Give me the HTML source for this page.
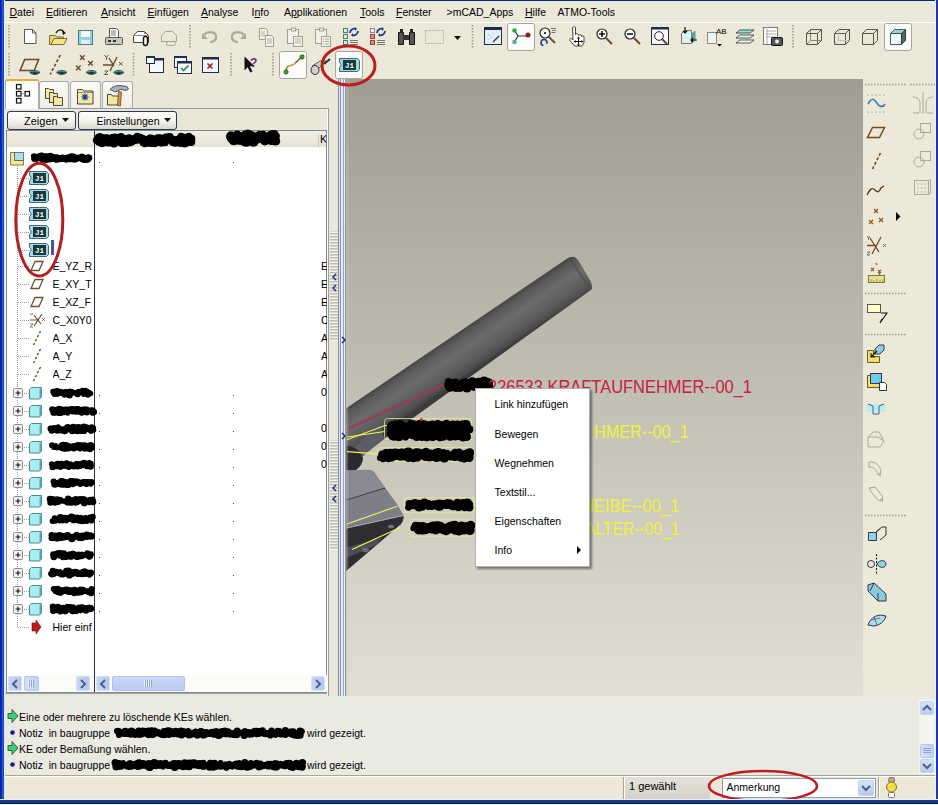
<!DOCTYPE html>
<html><head><meta charset="utf-8">
<style>
*{margin:0;padding:0;box-sizing:border-box}
html,body{width:938px;height:805px;overflow:hidden}
body{position:relative;background:#ECE9D8;font-family:"Liberation Sans",sans-serif;font-size:10.5px;color:#000}
.a{position:absolute}
svg{position:absolute;overflow:visible}
#frameL{left:0;top:0;width:5px;height:803px;background:linear-gradient(90deg,#0020B0 0 1px,#0A30C0 1px 2px,#3058D8 2px 3px,#1E48A8 3px 4px,#D8F0FF 4px 5px)}
#frameR{left:935px;top:0;width:3px;height:803px;background:linear-gradient(90deg,#E0F4FF 0 1px,#1E34A8 1px 2px,#2238B8 2px 3px)}
#frameB{left:0;top:799px;width:938px;height:6px;background:linear-gradient(#E4F0FC 0 1px,#1E3A86 1px 4px,#041448 4px 5px,#DCF8FF 5px 6px)}
#menubar{left:4px;top:0;width:931px;height:22px;background:#EDE9DA;border-top:1px solid #0E2A58;box-shadow:inset 0 1px 0 #DCEEFA}
.mi{position:absolute;top:5px;font-size:10.5px;white-space:nowrap}
#tb{left:4px;top:22px;width:931px;height:57px;background:#EBE8D8;border-top:1px solid #fff}
.grip{position:absolute;width:2px;border-left:1px dotted #A8A79B}
#view{left:346px;top:79px;width:517px;height:617px;background:linear-gradient(#A09E92,#E1E0D3);overflow:hidden}
#rtb{left:863px;top:80px;width:72px;height:616px;background:#ECE9D8}
#tabarea{left:4px;top:79px;width:342px;height:617px;background:#EAE7D8}
#tree{left:6px;top:130px;width:321px;height:563px;background:#fff;border:1px solid #7C8A98}
#msg{left:4px;top:696px;width:931px;height:80px;background:#EAE9E2}
#status{left:4px;top:775px;width:931px;height:24px;background:#EDE8D8;border-top:1px solid #A7A69B;box-shadow:inset 0 1px 0 #FFFFFF}
.btn{position:absolute;border:1px solid #2C3C54;border-radius:3px;background:linear-gradient(#fff,#F0F0EA 60%,#D8D8CF)}
.pressed{position:absolute;border:1px solid #9A9A90;border-radius:2px;background:#FBFBF8}
</style></head><body>
<!-- MENUBAR -->
<div class="a" id="menubar">
<span class="mi" style="left:5.5px"><u>D</u>atei</span>
<span class="mi" style="left:42px"><u>E</u>ditieren</span>
<span class="mi" style="left:97px"><u>A</u>nsicht</span>
<span class="mi" style="left:143.5px"><u>E</u>infügen</span>
<span class="mi" style="left:197px"><u>A</u>nalyse</span>
<span class="mi" style="left:247.5px">I<u>n</u>fo</span>
<span class="mi" style="left:280px">A<u>p</u>plikationen</span>
<span class="mi" style="left:356px"><u>T</u>ools</span>
<span class="mi" style="left:392px"><u>F</u>enster</span>
<span class="mi" style="left:442.5px">&gt;mCAD_Apps</span>
<span class="mi" style="left:521px"><u>H</u>ilfe</span>
<span class="mi" style="left:553.5px">ATMO-Tools</span>
</div>
<!-- TOOLBARS -->
<div class="a" id="tb"></div>
<svg class="a" style="left:0;top:0" width="938" height="80" viewBox="0 0 938 80">
<defs>
<linearGradient id="btnface" x1="0" y1="0" x2="0" y2="1"><stop offset="0" stop-color="#FFFFFF"/><stop offset="1" stop-color="#F2F2EC"/></linearGradient>
</defs>
<!-- row separators / grips -->

<g id="grips" stroke="#9C9A90" stroke-width="1.6" stroke-dasharray="1.6 1.4" fill="none">
<line x1="9" y1="25" x2="9" y2="49"/>
<line x1="190" y1="25" x2="190" y2="49"/>
<line x1="472.5" y1="25" x2="472.5" y2="49"/>
<line x1="793" y1="25" x2="793" y2="49"/>
<line x1="9" y1="53" x2="9" y2="77"/>
<line x1="133.5" y1="53" x2="133.5" y2="77"/>
<line x1="231" y1="53" x2="231" y2="77"/>
<line x1="273" y1="53" x2="273" y2="77"/>
</g>
<!-- pressed buttons -->
<rect x="507.5" y="23.5" width="27" height="27" rx="2" fill="#FBFBF9" stroke="#A5A59C"/>
<rect x="884.5" y="23.5" width="27" height="27" rx="2" fill="#FBFBF9" stroke="#A5A59C"/>
<rect x="279.5" y="51.5" width="27" height="27" rx="2" fill="#FBFBF9" stroke="#A5A59C"/>
<rect x="335.5" y="51.5" width="27" height="27" rx="2" fill="#FBFBF9" stroke="#A5A59C"/>
<!-- ROW 1 -->
<!-- new doc -->
<path d="M24.5 29.5h8l3.5 3.5v10.5h-11.5z" fill="#FCFCFC" stroke="#5A5A50"/><path d="M32.5 29.5v3.5h3.5" fill="none" stroke="#5A5A50"/>
<!-- open -->
<path d="M49.5 35.5h6l1 1.5h7v7.5h-14z" fill="#E8D77A" stroke="#7A6A30"/><path d="M51 44.5l3-6h13l-3 6z" fill="#F2E486" stroke="#7A6A30"/>
<path d="M56 33c2-4 6-4 8-1" fill="none" stroke="#111" stroke-width="1.3"/><path d="M62 30.5l4 2.5-3 2z" fill="#111"/>
<!-- save -->
<rect x="78.5" y="30.5" width="14" height="14" fill="#8FD4DC" stroke="#4A7A88"/><rect x="81" y="31" width="9" height="6" fill="#F4F8F8"/><rect x="81" y="40" width="9" height="4" fill="#E0F0F2"/>
<!-- printer -->
<path d="M109.5 28.5h7l2 2v7h-9z" fill="#FFF" stroke="#555"/><path d="M111 31h5M111 33h5M111 35h5" stroke="#777"/>
<rect x="105.5" y="37.5" width="17" height="7" rx="1" fill="#C8C8C0" stroke="#555"/><rect x="108" y="40" width="3" height="2" fill="#333"/><rect x="113" y="40" width="3" height="2" fill="#333"/>
<!-- mail clip -->
<path d="M133.5 35.5l4-4h7l4 4v7h-15z" fill="#FDFDFD" stroke="#444"/><path d="M133.5 35.5h15" stroke="#888"/>
<rect x="143.5" y="36.5" width="4" height="9" rx="2" fill="#FFF" stroke="#111" stroke-width="1.4"/><circle cx="145" cy="33" r="0.9" fill="#B03030"/>
<!-- mail grey -->
<path d="M161.5 35.5l4-4h7l4 4v6h-15z" fill="none" stroke="#A5A59D"/><rect x="166.5" y="41.5" width="9" height="4" rx="2" fill="none" stroke="#A5A59D"/>
<!-- undo redo grey -->
<path d="M204 35c3-4 11-4 12 1s-4 6-6 6" fill="none" stroke="#ABA9A0" stroke-width="2.3"/><path d="M202 33v6h6z" fill="#ABA9A0"/>
<path d="M244 35c-3-4-11-4-12 1s4 6 6 6" fill="none" stroke="#ABA9A0" stroke-width="2.3"/><path d="M246 33v6h-6z" fill="#ABA9A0"/>
<!-- copy -->
<g fill="#F2F1EA" stroke="#A09F95"><path d="M259.5 28.5h6l2 2v9h-8z"/><path d="M265.5 35.5h6l2 2v9h-8z"/></g>
<path d="M261 32h4M261 34h4M261 36h4M267 39h5M267 41h5M267 43h5" stroke="#B4B3A8"/>
<!-- paste -->
<g fill="#F2F1EA" stroke="#A09F95"><rect x="287.5" y="29.5" width="11" height="14"/><rect x="291.5" y="28" width="4" height="3"/><rect x="293.5" y="36.5" width="9" height="10"/></g>
<path d="M295 39h6M295 41h6M295 43h6" stroke="#B4B3A8"/>
<g fill="#F2F1EA" stroke="#A09F95"><rect x="315.5" y="29.5" width="11" height="14"/><rect x="319.5" y="28" width="4" height="3"/><rect x="321.5" y="36.5" width="9" height="10"/></g>
<path d="M323 39h1M323 41.5h1M323 44h1M325 39h4M325 41.5h4M325 44h4" stroke="#A8A79C"/>
<!-- select tools -->
<g><rect x="343.5" y="28.5" width="4" height="4" fill="#D8F0E8" stroke="#4A7A6A"/><rect x="343.5" y="34.5" width="4" height="4" fill="#D8F0E8" stroke="#4A7A6A"/><rect x="343.5" y="40.5" width="4" height="4" fill="#D8F0E8" stroke="#4A7A6A"/>
<path d="M350 33c0-3 3-5 6-4M358 31c0 3-3 5-6 4" fill="none" stroke="#1A3C90" stroke-width="1.8"/><path d="M355 27l2 2-2 2zM353 33l-2 2 2 2z" fill="#1A3C90"/><path d="M350 40.5h8M350 42.5h8M350 44.5h8" stroke="#777"/></g>
<g><rect x="370.5" y="28.5" width="4" height="4" fill="#EEE" stroke="#888"/><rect x="370.5" y="34.5" width="4" height="4" fill="#D88" stroke="#944"/><rect x="370.5" y="40.5" width="4" height="4" fill="#D88" stroke="#944"/>
<path d="M377 33c0-3 3-5 6-4M385 31c0 3-3 5-6 4" fill="none" stroke="#1A3C90" stroke-width="1.8"/><path d="M382 27l2 2-2 2zM380 33l-2 2 2 2z" fill="#1A3C90"/><path d="M377 40.5h8M377 42.5h8M377 44.5h8" stroke="#777"/></g>
<!-- binoculars -->
<path d="M398.5 32.5h5v12h-5zM409.5 32.5h5v12h-5z" fill="#555" stroke="#111"/><rect x="403" y="35" width="6" height="5" fill="#333"/><rect x="400" y="29" width="3" height="4" fill="#222"/><rect x="410" y="29" width="3" height="4" fill="#222"/>
<!-- dashed rect -->
<rect x="425.5" y="30.5" width="18" height="13" fill="none" stroke="#B5B4AA" stroke-dasharray="2 1"/>
<path d="M454 36h7l-3.5 4z" fill="#111"/>
<!-- repaint -->
<rect x="484.5" y="27.5" width="17" height="17" fill="#E4EEF8" stroke="#1E2C50"/><rect x="484" y="27" width="18" height="3" fill="#1E2C50"/><path d="M493 42l6-6" stroke="#333" stroke-width="1.2"/><g fill="#9AB"><circle cx="489" cy="35" r=".6"/><circle cx="491" cy="37" r=".6"/><circle cx="488" cy="39" r=".6"/></g>
<!-- spin -->
<path d="M515 31l3 5v0l-3 5M518 36h10" fill="none" stroke="#333" stroke-width="1.2"/><circle cx="514.5" cy="30.5" r="2.3" fill="#3CA050"/><circle cx="514.5" cy="42" r="2.3" fill="#4CB0A0"/><circle cx="528" cy="35" r="2.5" fill="#8A2020"/>
<!-- orient -->
<circle cx="545" cy="33" r="5" fill="#FFF" stroke="#222" stroke-width="1.2"/><circle cx="545" cy="33" r="1.1" fill="#111"/><path d="M549 37l6 6" stroke="#7A4A30" stroke-width="2"/><path d="M543.5 45.5a3 3 0 1 1 3.5 -3" fill="none" stroke="#1A3C90" stroke-width="1.5"/><path d="M547 41l1 2.5 -2.5 0z" fill="#1A3C90"/><path d="M551 28.5h5M552 30.5h4M551.5 32.5h4" stroke="#5A6A90" stroke-width=".9"/>
<!-- pan hand -->
<path d="M572.5 27.5c1-1 2.5-1 3 0v7c.5-1 2.5-1 3 0v1c.5-1 2.5-1 3 0v1c.5-1 2.5-.8 2.5.5v5.5l-2 3.5h-7.5l-4.5-5.5c-1-1.5 0-2.5 1.5-1.8l1.5 1.3z" fill="#FFF" stroke="#333" stroke-width=".9"/>
<path d="M578.5 37.5v8M574.5 41.5h8" stroke="#111" stroke-width="1"/><path d="M578.5 36.5l-1.5 2h3zM578.5 46.5l-1.5-2h3zM573.5 41.5l2-1.5v3zM583.5 41.5l-2-1.5v3z" fill="#111"/>
<!-- zoom in/out -->
<circle cx="602" cy="34" r="5" fill="#FFF" stroke="#222" stroke-width="1.2"/><path d="M599 34h6M602 31v6" stroke="#111" stroke-width="1.6"/><path d="M606 38l6 6" stroke="#6A4A30" stroke-width="2"/>
<circle cx="630" cy="34" r="5" fill="#FFF" stroke="#222" stroke-width="1.2"/><path d="M627 34h6" stroke="#111" stroke-width="1.6"/><path d="M634 38l6 6" stroke="#6A4A30" stroke-width="2"/>
<!-- zoom fit -->
<rect x="651.5" y="27.5" width="17" height="17" fill="#F4F8FC" stroke="#1E2C50"/><rect x="651" y="27" width="18" height="2.5" fill="#1E2C50"/><circle cx="659" cy="36" r="4.3" fill="#FFF" stroke="#222"/><path d="M662 39l5 5" stroke="#6A4A30" stroke-width="2"/>
<!-- view normal -->
<path d="M681.5 33.5l3-3h7v13h-10z" fill="#DDF0EE" stroke="#777"/><path d="M691.5 33.5l4-3v10l-4 3z" fill="#5AA0A0"/><path d="M685 27v6M683 31l2 2 2-2" stroke="#111" stroke-width="1.2" fill="none"/><path d="M697 40h-6M693 38l-2 2 2 2" stroke="#111" stroke-width="1.2" fill="none"/>
<!-- AB -->
<path d="M707.5 32.5h9v11h-9z" fill="#EEF6F4" stroke="#888"/><text x="716" y="34" font-size="8" font-family="Liberation Sans">AB</text><path d="M717 44h5l-2.5 2.5z" fill="#111"/>
<!-- layers -->
<path d="M736 33l4-3h14l-4 3z" fill="#9AE0E0" stroke="#333" stroke-width=".8"/><path d="M736 38l4-3h14l-4 3z" fill="#DDF4F4" stroke="#333" stroke-width=".8"/><path d="M736 43l4-3h14l-4 3z" fill="#F4FAFA" stroke="#333" stroke-width=".8"/>
<!-- table camera -->
<rect x="763.5" y="27.5" width="14" height="17" fill="#FFF" stroke="#777"/><path d="M766 31h10M766 34h10M766 37h10M767 27v17" stroke="#AAA"/><rect x="771.5" y="37.5" width="11" height="8" rx="1" fill="#555" stroke="#111"/><circle cx="777" cy="41.5" r="2" fill="#EEE"/>
<!-- wireframe / hidden / no hidden -->
<g fill="none" stroke="#444" stroke-width=".9"><path d="M806.5 33.5h11v11h-11zM806.5 33.5l4-4h11l-4 4M821.5 29.5v11l-4 4"/><path d="M810.5 29.5v11h11M810.5 40.5l-4 4" stroke="#777"/></g>
<g fill="none" stroke="#444" stroke-width=".9"><path d="M834.5 33.5h11v11h-11zM834.5 33.5l4-4h11l-4 4M849.5 29.5v11l-4 4"/><path d="M838.5 29.5v11h11M838.5 40.5l-4 4" stroke="#BBB"/></g>
<g fill="none" stroke="#444" stroke-width=".9"><path d="M862.5 33.5h11v11h-11zM862.5 33.5l4-4h11l-4 4M877.5 29.5v11l-4 4"/></g>
<path d="M890.5 33.5h11v11h-11z" fill="#F0FAFA" stroke="#444" stroke-width=".9"/><path d="M890.5 33.5l4-4h11l-4 4z" fill="#8ADADC" stroke="#444" stroke-width=".9"/><path d="M905.5 29.5v11l-4 4v-11z" fill="#4A6A6A" stroke="#333" stroke-width=".9"/>
<!-- ROW 2 -->
<!-- plane eye -->
<path d="M24.6 59.6h14.1l-4.5 10.9H20.1z" fill="none" stroke="#6A4A28" stroke-width="1.5"/><path d="M29.299999999999997 72.5c2-3.2 9-3.2 11 0c-2 3.2-9 3.2-11 0z" fill="#2D5858"/><circle cx="34.8" cy="72.5" r="1.8" fill="#1A3A3A"/><path d="M30.799999999999997 71.5h8" stroke="#7FB0B0" stroke-width=".6"/><path d="M60.4 55l-10.2 19.3" stroke="#6A4A28" stroke-width="1.6" stroke-dasharray="3 2"/><path d="M56.2 72.5c2-3.2 9-3.2 11 0c-2 3.2-9 3.2-11 0z" fill="#2D5858"/><circle cx="61.7" cy="72.5" r="1.8" fill="#1A3A3A"/><path d="M57.7 71.5h8" stroke="#7FB0B0" stroke-width=".6"/><g stroke="#6A4A28" stroke-width="1.4"><path d="M80 55.3l4.6 4.6M84.6 55.3l-4.6 4.6M88.2 61l4.6 4.6M92.8 61l-4.6 4.6M76 65.6l4.6 4.6M80.6 65.6l-4.6 4.6"/></g><path d="M85.9 72.5c2-3.2 9-3.2 11 0c-2 3.2-9 3.2-11 0z" fill="#2D5858"/><circle cx="91.4" cy="72.5" r="1.8" fill="#1A3A3A"/><path d="M87.4 71.5h8" stroke="#7FB0B0" stroke-width=".6"/><g stroke="#6A4A28" stroke-width="1.4" fill="none"><path d="M103 65h10M117 57l-7 14M109 58l5 8"/></g><g stroke="#555" stroke-width="1" fill="none"><path d="M104.5 55l2 2.5 2-2.5M106.5 57.5v2.5M104.5 71h3.5l-3.5 3.5h3.5M119 62l3.5 3.5M122.5 62l-3.5 3.5"/></g><path d="M113.3 72.5c2-3.2 9-3.2 11 0c-2 3.2-9 3.2-11 0z" fill="#2D5858"/><circle cx="118.8" cy="72.5" r="1.8" fill="#1A3A3A"/><path d="M114.8 71.5h8" stroke="#7FB0B0" stroke-width=".6"/>
<!-- windows -->
<rect x="149.5" y="58.5" width="14" height="14" fill="#F4F8FC" stroke="#1E2C50"/><rect x="149" y="58" width="15" height="2.5" fill="#1E2C50"/>
<rect x="146.5" y="56.5" width="8" height="7" fill="#F4F8FC" stroke="#1E2C50"/><rect x="146" y="56" width="9" height="2" fill="#1E2C50"/>
<rect x="174.5" y="56.5" width="12" height="11" fill="#F4F8FC" stroke="#1E2C50"/><rect x="174" y="56" width="13" height="2" fill="#1E2C50"/>
<rect x="177.5" y="61.5" width="14" height="12" fill="#F4F8FC" stroke="#1E2C50"/><rect x="177" y="61" width="15" height="2.5" fill="#1E2C50"/><path d="M181 68l2.5 2.5 5-5" fill="none" stroke="#2A8A3A" stroke-width="1.6"/>
<rect x="202.5" y="57.5" width="16" height="15" fill="#F4F8FC" stroke="#1E2C50"/><rect x="202" y="57" width="17" height="2.5" fill="#1E2C50"/><path d="M207.5 63.5l5 5M212.5 63.5l-5 5" stroke="#A01818" stroke-width="1.6"/>
<!-- question arrow -->
<path d="M244.5 56.5v14l3.2-3.2 2.6 5.2 2.2-1.1-2.6-5.1h4.6z" fill="#111"/><text x="250" y="67" font-size="12" font-weight="bold" fill="#7A2A78" font-family="Liberation Sans">?</text>
<!-- curve -->
<path d="M286 72c0-8 4-5 8-8s6-6 10-9" fill="none" stroke="#6A5A20" stroke-width="1.2"/><path d="M287 71c1-7 5-5 8-8" fill="none" stroke="#E8D860" stroke-width="1"/><circle cx="286" cy="72" r="2.2" fill="#3A9A3A" stroke="#1A4A1A" stroke-width=".6"/><circle cx="302" cy="57" r="2.2" fill="#3A9A3A" stroke="#1A4A1A" stroke-width=".6"/>
<!-- cylinder tool -->
<path d="M312 66l8-5h6l-8 8z" fill="#CCC" stroke="#444" stroke-width=".8"/><ellipse cx="315" cy="70" rx="4" ry="4.5" fill="#CFCFCF" stroke="#333"/><path d="M324 64l6-5" stroke="#333" stroke-width="2"/>
<!-- J1 -->
<path d="M339.5 58.5h18l2 2v9l-2 2h-18v-4l1.5-1.5v-2l-1.5-1.5z" fill="#9ED6DA" stroke="#3A6A70"/><rect x="343" y="60" width="13" height="10" fill="#17393E"/><text x="349.5" y="68.2" text-anchor="middle" font-size="7.5" font-weight="bold" fill="#FFF" font-family="Liberation Mono">J1</text>
</svg>

<!-- LEFT PANEL -->
<div class="a" id="tabarea"></div>
<div class="a" style="left:5px;top:108px;width:324px;height:586px;border:1px solid #A0A4A8;border-top-color:#919B9C;border-left-color:#E8F4F8"></div>
<div class="a" style="left:5px;top:108px;width:323px;height:1px;background:#919B9C"></div>
<div class="a" style="left:39px;top:81px;width:30px;height:27px;border:1px solid #A7ABA8;border-bottom:none;border-radius:3px 3px 0 0;background:linear-gradient(#FAFAF8,#EEEDE6)"></div>
<div class="a" style="left:70px;top:81px;width:31px;height:27px;border:1px solid #A7ABA8;border-bottom:none;border-radius:3px 3px 0 0;background:linear-gradient(#FAFAF8,#EEEDE6)"></div>
<div class="a" style="left:102px;top:81px;width:31px;height:27px;border:1px solid #A7ABA8;border-bottom:none;border-radius:3px 3px 0 0;background:linear-gradient(#FAFAF8,#EEEDE6)"></div>
<div class="a" style="left:5px;top:79px;width:34px;height:30px;border:1px solid #A7ABA8;border-bottom:none;border-radius:3px 3px 0 0;background:#FCFCFE"></div>
<div class="a" style="left:6px;top:79px;width:32px;height:2px;background:#EBA83A;border-radius:2px 2px 0 0"></div>
<svg class="a" style="left:0;top:0" width="340" height="132" viewBox="0 0 340 132">
<!-- tab1 tree -->
<g fill="#fff" stroke="#111" stroke-width="1.2"><rect x="16.5" y="84.5" width="4.5" height="4.5"/><rect x="16.5" y="91.5" width="4.5" height="4.5"/><rect x="16.5" y="98.5" width="4.5" height="4.5"/><rect x="25" y="91.5" width="4.5" height="4.5"/></g>
<path d="M18.7 89v2.5M18.7 96v2.5M21 93.7h4" stroke="#777" stroke-width=".8"/>
<!-- tab2 folders -->
<g fill="#F2E9A0" stroke="#333" stroke-width=".9"><path d="M45.5 88.5h3l1 1h4v9h-8z"/><path d="M49.5 92.5h3l1 1h4v9h-8z"/><path d="M53.5 96.5h3l1 1h5v8h-9z"/></g>
<!-- tab3 folder star -->
<path d="M77.5 89.5h5l1.5 1.5h9v13h-15.5z" fill="#F2E9A0" stroke="#333" stroke-width=".9"/><path d="M77.5 92.5h15.5" stroke="#555" stroke-width=".6"/>
<g stroke="#1A3CA0" stroke-width="1.1"><path d="M85 93.5v7M81.5 97h7M82.5 94.5l5 5M87.5 94.5l-5 5"/></g><circle cx="85" cy="97" r="1.3" fill="#1A3CA0"/>
<!-- tab4 folder hammer -->
<path d="M107.5 94.5h4l1 1.5h6v9h-11z" fill="#F2E9A0" stroke="#333" stroke-width=".9"/>
<path d="M118.5 91.5l3 0.5-1 14-3-0.5z" fill="#D8904A" stroke="#6A3A10" stroke-width=".7"/>
<path d="M110 89.5c2-3 6-4 10-4l7 1 1.5 2.5-2 1.5-6-1-5 2.5z" fill="#A8B4B8" stroke="#333" stroke-width=".8"/>
</svg>
<!-- buttons -->
<div class="btn" style="left:7px;top:111px;width:69px;height:19px"></div>
<div class="btn" style="left:78px;top:111px;width:99px;height:19px"></div>
<span class="a" style="left:24px;top:114.5px;font-size:11px">Zeigen</span>
<span class="a" style="left:96.5px;top:114.5px;font-size:10.5px">Einstellungen</span>
<svg class="a" style="left:0;top:0" width="200" height="132"><path d="M62 118h7l-3.5 4z" fill="#111"/><path d="M164 118h7l-3.5 4z" fill="#111"/></svg>


<div class="a" id="tree"></div>
<div id="treecontent"><div class="a" style="left:7px;top:131px;width:319px;height:16px;background:linear-gradient(#F0EEE4,#E8E5D6);border-bottom:1px solid #E2E0D4"></div>
<div class="a" style="left:94px;top:131px;width:1px;height:561px;background:#203040"></div>
<div class="a" style="left:318px;top:134px;width:1px;height:13px;background:#C8C6BA"></div>
<span class="a" style="left:320px;top:133px;font-size:11px;width:6px;overflow:hidden">K</span>
<svg class="a" style="left:0;top:0" width="340" height="700" viewBox="0 0 340 700"><g fill="#000"><circle cx="109.0" cy="142.1" r="4.3"/><circle cx="120.7" cy="140.0" r="3.7"/><circle cx="159.2" cy="141.8" r="3.0"/><circle cx="98.7" cy="142.1" r="3.6"/><circle cx="169.9" cy="136.9" r="3.7"/><circle cx="166.0" cy="138.3" r="4.7"/><circle cx="183.4" cy="137.1" r="2.8"/><circle cx="148.5" cy="142.7" r="3.5"/><circle cx="117.0" cy="139.5" r="2.9"/><circle cx="117.5" cy="139.6" r="3.8"/><circle cx="118.6" cy="138.3" r="3.2"/><circle cx="140.6" cy="138.7" r="2.8"/><circle cx="177.2" cy="140.3" r="4.1"/><circle cx="114.0" cy="143.0" r="4.5"/><circle cx="107.7" cy="139.0" r="4.2"/><circle cx="165.0" cy="142.7" r="3.6"/><circle cx="176.5" cy="141.0" r="3.4"/><circle cx="153.0" cy="142.4" r="4.5"/><circle cx="145.0" cy="140.5" r="2.9"/><circle cx="119.5" cy="141.8" r="3.6"/><circle cx="112.8" cy="140.3" r="4.2"/><circle cx="161.4" cy="139.2" r="3.7"/><circle cx="145.3" cy="141.7" r="3.8"/><circle cx="134.1" cy="139.9" r="2.9"/><circle cx="100.2" cy="141.3" r="4.7"/><circle cx="153.5" cy="139.3" r="3.1"/><circle cx="144.7" cy="143.0" r="4.3"/><circle cx="148.3" cy="142.2" r="3.3"/><circle cx="145.8" cy="142.8" r="3.9"/><circle cx="140.5" cy="138.6" r="3.9"/><circle cx="188.8" cy="137.0" r="4.3"/><circle cx="175.6" cy="142.4" r="4.3"/><circle cx="174.5" cy="140.1" r="3.9"/><circle cx="137.3" cy="137.3" r="4.5"/><circle cx="151.3" cy="138.2" r="3.8"/><circle cx="143.0" cy="139.1" r="3.5"/><circle cx="148.2" cy="140.8" r="4.0"/><circle cx="140.4" cy="137.1" r="3.3"/><circle cx="113.2" cy="140.5" r="4.5"/><circle cx="173.4" cy="141.8" r="4.4"/><circle cx="120.8" cy="142.1" r="4.1"/><circle cx="104.1" cy="137.0" r="2.8"/><circle cx="169.3" cy="138.5" r="3.0"/><circle cx="156.6" cy="139.0" r="2.9"/><circle cx="111.5" cy="140.2" r="3.1"/><circle cx="122.5" cy="141.3" r="3.7"/><circle cx="127.2" cy="139.8" r="2.8"/><circle cx="133.5" cy="139.5" r="3.2"/><circle cx="106.5" cy="142.5" r="3.8"/><circle cx="116.3" cy="140.7" r="4.4"/><circle cx="98.0" cy="137.0" r="3.1"/><circle cx="165.7" cy="137.9" r="4.2"/><circle cx="161.8" cy="140.3" r="3.2"/><circle cx="190.6" cy="141.8" r="3.8"/><circle cx="117.6" cy="140.9" r="3.6"/><circle cx="151.9" cy="138.9" r="4.0"/><circle cx="101.7" cy="138.8" r="4.7"/><circle cx="180.9" cy="138.8" r="4.5"/><circle cx="126.1" cy="142.7" r="4.3"/><circle cx="136.4" cy="138.5" r="2.8"/><circle cx="181.2" cy="137.2" r="4.4"/><circle cx="189.3" cy="140.4" r="3.1"/><circle cx="180.2" cy="142.9" r="4.2"/><circle cx="145.4" cy="139.2" r="3.5"/><circle cx="116.0" cy="141.1" r="3.6"/><circle cx="114.8" cy="137.6" r="4.1"/><circle cx="124.7" cy="140.0" r="3.4"/><circle cx="180.5" cy="142.5" r="2.8"/><circle cx="115.5" cy="138.9" r="4.7"/><circle cx="171.9" cy="139.0" r="3.2"/><circle cx="161.4" cy="142.1" r="4.6"/><circle cx="129.4" cy="142.4" r="4.1"/><circle cx="143.0" cy="143.0" r="3.3"/><circle cx="166.4" cy="137.4" r="3.1"/><circle cx="184.4" cy="138.2" r="4.3"/><circle cx="154.2" cy="142.1" r="3.5"/><circle cx="129.0" cy="138.7" r="4.5"/><circle cx="154.6" cy="142.8" r="4.5"/><circle cx="109.1" cy="140.3" r="3.0"/><circle cx="99.8" cy="137.4" r="4.5"/><circle cx="172.4" cy="142.0" r="3.5"/><circle cx="155.7" cy="141.7" r="3.5"/><circle cx="151.4" cy="138.3" r="3.0"/><circle cx="121.9" cy="142.4" r="3.9"/><circle cx="185.7" cy="139.7" r="3.3"/><circle cx="172.3" cy="142.0" r="2.8"/><circle cx="161.0" cy="137.5" r="3.0"/><circle cx="181.9" cy="137.2" r="3.3"/><circle cx="191.9" cy="139.5" r="3.0"/><circle cx="112.2" cy="138.4" r="4.3"/><circle cx="106.0" cy="142.5" r="3.5"/><circle cx="190.1" cy="142.5" r="3.4"/><circle cx="120.6" cy="139.9" r="3.0"/><circle cx="159.2" cy="137.2" r="2.8"/><circle cx="191.3" cy="138.7" r="4.0"/><circle cx="139.6" cy="138.8" r="2.9"/><circle cx="184.6" cy="142.9" r="4.7"/><circle cx="106.8" cy="138.2" r="4.0"/><circle cx="191.1" cy="140.3" r="4.1"/><circle cx="160.2" cy="138.5" r="3.9"/><circle cx="125.8" cy="138.4" r="3.0"/><circle cx="123.2" cy="143.0" r="3.7"/><circle cx="159.2" cy="140.9" r="4.6"/><circle cx="133.9" cy="138.8" r="3.4"/><circle cx="126.7" cy="142.1" r="4.6"/><circle cx="125.4" cy="139.0" r="3.9"/><circle cx="152.2" cy="140.6" r="3.3"/><circle cx="98.0" cy="138.4" r="2.9"/><circle cx="149.5" cy="137.4" r="2.9"/><circle cx="157.6" cy="138.7" r="4.4"/><circle cx="143.8" cy="142.2" r="3.1"/><circle cx="144.6" cy="141.8" r="3.0"/><circle cx="188.1" cy="138.0" r="4.3"/><circle cx="191.5" cy="142.0" r="3.4"/><circle cx="106.4" cy="140.1" r="4.6"/><circle cx="124.5" cy="142.4" r="3.1"/><circle cx="184.3" cy="137.1" r="3.4"/><circle cx="183.6" cy="141.9" r="4.6"/><circle cx="177.5" cy="141.5" r="4.2"/><circle cx="113.3" cy="139.6" r="3.1"/><circle cx="165.3" cy="141.0" r="3.3"/><circle cx="102.2" cy="142.9" r="4.4"/><circle cx="149.3" cy="140.3" r="4.5"/><circle cx="140.0" cy="139.4" r="3.5"/><circle cx="121.0" cy="137.1" r="4.1"/><circle cx="136.4" cy="140.4" r="2.9"/><circle cx="130.4" cy="137.8" r="3.0"/><circle cx="121.1" cy="142.0" r="3.6"/><circle cx="134.9" cy="140.7" r="3.3"/><circle cx="96.7" cy="140.2" r="3.8"/><circle cx="158.9" cy="139.6" r="4.1"/><circle cx="166.9" cy="138.4" r="3.8"/><circle cx="142.4" cy="138.3" r="3.6"/><circle cx="150.4" cy="142.5" r="4.6"/><circle cx="122.7" cy="140.9" r="2.9"/><circle cx="102.9" cy="140.1" r="4.5"/><circle cx="111.5" cy="141.6" r="4.5"/><circle cx="126.2" cy="141.2" r="4.5"/><circle cx="132.0" cy="141.2" r="4.2"/><circle cx="153.7" cy="142.2" r="4.6"/><circle cx="189.1" cy="140.4" r="3.1"/><circle cx="120.3" cy="138.3" r="3.9"/><circle cx="169.5" cy="137.2" r="4.1"/><circle cx="165.6" cy="139.1" r="3.8"/><circle cx="112.0" cy="141.4" r="2.9"/><circle cx="191.2" cy="141.9" r="4.0"/><circle cx="122.0" cy="142.5" r="4.7"/><circle cx="109.5" cy="141.7" r="4.5"/><circle cx="160.0" cy="141.2" r="3.7"/><circle cx="185.7" cy="142.9" r="3.5"/><circle cx="173.9" cy="139.6" r="3.1"/><rect x="96.5" y="136.5" width="96" height="7.0"/></g><g fill="#000"><circle cx="274.0" cy="141.2" r="3.3"/><circle cx="233.9" cy="140.4" r="4.8"/><circle cx="260.8" cy="136.6" r="4.6"/><circle cx="257.9" cy="138.6" r="3.6"/><circle cx="249.8" cy="137.3" r="4.8"/><circle cx="275.8" cy="141.2" r="4.4"/><circle cx="250.5" cy="136.4" r="3.3"/><circle cx="231.3" cy="137.8" r="3.9"/><circle cx="247.5" cy="140.8" r="4.4"/><circle cx="255.8" cy="136.1" r="3.3"/><circle cx="245.0" cy="135.4" r="4.3"/><circle cx="275.9" cy="139.2" r="3.6"/><circle cx="271.1" cy="140.1" r="4.8"/><circle cx="271.7" cy="139.9" r="5.0"/><circle cx="246.3" cy="141.4" r="5.4"/><circle cx="237.4" cy="139.8" r="4.8"/><circle cx="251.2" cy="138.2" r="4.3"/><circle cx="272.5" cy="138.0" r="5.1"/><circle cx="246.3" cy="140.7" r="5.2"/><circle cx="251.2" cy="138.5" r="5.3"/><circle cx="263.3" cy="137.9" r="3.7"/><circle cx="244.9" cy="139.4" r="3.6"/><circle cx="271.8" cy="136.4" r="5.2"/><circle cx="244.2" cy="141.2" r="4.8"/><circle cx="253.2" cy="138.1" r="4.7"/><circle cx="257.0" cy="136.7" r="3.7"/><circle cx="253.5" cy="141.1" r="4.6"/><circle cx="233.5" cy="140.3" r="4.8"/><circle cx="271.8" cy="135.8" r="4.9"/><circle cx="232.7" cy="139.1" r="3.8"/><circle cx="240.4" cy="140.6" r="3.4"/><circle cx="254.0" cy="140.5" r="3.7"/><circle cx="239.7" cy="140.7" r="4.1"/><circle cx="263.0" cy="134.7" r="4.0"/><circle cx="237.9" cy="139.2" r="3.4"/><circle cx="273.9" cy="134.7" r="4.8"/><circle cx="231.0" cy="136.3" r="5.0"/><circle cx="237.2" cy="135.8" r="4.7"/><circle cx="247.7" cy="134.8" r="5.4"/><circle cx="237.0" cy="134.7" r="4.0"/><circle cx="258.3" cy="139.7" r="3.5"/><circle cx="245.5" cy="134.7" r="4.2"/><circle cx="265.2" cy="139.7" r="5.2"/><circle cx="264.8" cy="140.6" r="4.8"/><circle cx="251.7" cy="136.1" r="4.7"/><circle cx="244.6" cy="135.2" r="4.2"/><circle cx="270.2" cy="135.4" r="4.5"/><circle cx="248.1" cy="138.1" r="3.5"/><circle cx="274.1" cy="136.3" r="4.6"/><circle cx="249.3" cy="134.6" r="4.4"/><circle cx="236.5" cy="134.9" r="3.3"/><circle cx="237.4" cy="135.2" r="4.6"/><circle cx="253.4" cy="141.4" r="5.3"/><circle cx="275.7" cy="136.1" r="4.2"/><circle cx="241.5" cy="138.6" r="4.6"/><circle cx="266.8" cy="139.5" r="3.8"/><circle cx="249.5" cy="138.2" r="3.2"/><circle cx="231.6" cy="137.4" r="3.4"/><circle cx="263.3" cy="136.2" r="3.4"/><circle cx="238.4" cy="136.1" r="3.7"/><circle cx="254.0" cy="137.7" r="3.9"/><circle cx="259.5" cy="136.0" r="5.2"/><circle cx="274.3" cy="139.6" r="4.2"/><circle cx="253.5" cy="138.6" r="3.3"/><circle cx="249.2" cy="138.2" r="3.6"/><circle cx="234.3" cy="140.1" r="4.0"/><circle cx="253.9" cy="141.0" r="4.6"/><circle cx="243.3" cy="141.4" r="4.0"/><circle cx="230.9" cy="139.3" r="3.4"/><circle cx="244.1" cy="140.4" r="4.7"/><circle cx="230.7" cy="137.7" r="4.1"/><circle cx="252.3" cy="135.9" r="4.5"/><circle cx="233.4" cy="136.5" r="4.0"/><circle cx="273.0" cy="135.0" r="4.9"/><circle cx="238.8" cy="138.5" r="4.1"/><rect x="230.5" y="134.0" width="45" height="8.0"/></g><path d="M17.5 166V627" stroke="#A0A0A0" stroke-dasharray="1 1"/><path d="M18 178.5H29" stroke="#A0A0A0" stroke-dasharray="1 1"/><path d="M18 196.5H29" stroke="#A0A0A0" stroke-dasharray="1 1"/><path d="M18 214.5H29" stroke="#A0A0A0" stroke-dasharray="1 1"/><path d="M18 232.5H29" stroke="#A0A0A0" stroke-dasharray="1 1"/><path d="M18 250.5H29" stroke="#A0A0A0" stroke-dasharray="1 1"/><path d="M18 266.5H29" stroke="#A0A0A0" stroke-dasharray="1 1"/><path d="M18 284.5H29" stroke="#A0A0A0" stroke-dasharray="1 1"/><path d="M18 302.5H29" stroke="#A0A0A0" stroke-dasharray="1 1"/><path d="M18 320.5H29" stroke="#A0A0A0" stroke-dasharray="1 1"/><path d="M18 338.5H29" stroke="#A0A0A0" stroke-dasharray="1 1"/><path d="M18 356.5H29" stroke="#A0A0A0" stroke-dasharray="1 1"/><path d="M18 374.5H29" stroke="#A0A0A0" stroke-dasharray="1 1"/><path d="M22 393.5H29" stroke="#A0A0A0" stroke-dasharray="1 1"/><path d="M22 411.5H29" stroke="#A0A0A0" stroke-dasharray="1 1"/><path d="M22 429.5H29" stroke="#A0A0A0" stroke-dasharray="1 1"/><path d="M22 447.5H29" stroke="#A0A0A0" stroke-dasharray="1 1"/><path d="M22 465.5H29" stroke="#A0A0A0" stroke-dasharray="1 1"/><path d="M22 483.5H29" stroke="#A0A0A0" stroke-dasharray="1 1"/><path d="M22 501.5H29" stroke="#A0A0A0" stroke-dasharray="1 1"/><path d="M22 519.5H29" stroke="#A0A0A0" stroke-dasharray="1 1"/><path d="M22 537.5H29" stroke="#A0A0A0" stroke-dasharray="1 1"/><path d="M22 555.5H29" stroke="#A0A0A0" stroke-dasharray="1 1"/><path d="M22 573.5H29" stroke="#A0A0A0" stroke-dasharray="1 1"/><path d="M22 591.5H29" stroke="#A0A0A0" stroke-dasharray="1 1"/><path d="M22 609.5H29" stroke="#A0A0A0" stroke-dasharray="1 1"/><path d="M18 627.5H29" stroke="#A0A0A0" stroke-dasharray="1 1"/><path d="M10.5 152.5h5v8h8v4.5h-13z" fill="#F0E88A" stroke="#7A7030" stroke-width=".9"/><rect x="14.5" y="152.5" width="9" height="8" fill="#A9E0EA" stroke="#557" stroke-width=".8"/><g fill="#000"><circle cx="46.6" cy="158.2" r="2.5"/><circle cx="67.4" cy="158.6" r="2.1"/><circle cx="33.8" cy="159.5" r="2.4"/><circle cx="46.4" cy="160.2" r="2.7"/><circle cx="80.7" cy="157.9" r="2.9"/><circle cx="41.6" cy="158.6" r="3.2"/><circle cx="62.8" cy="159.1" r="2.9"/><circle cx="36.6" cy="159.1" r="2.8"/><circle cx="50.2" cy="155.9" r="3.2"/><circle cx="59.9" cy="159.0" r="3.2"/><circle cx="73.7" cy="159.9" r="2.6"/><circle cx="78.7" cy="157.8" r="3.3"/><circle cx="83.1" cy="156.2" r="2.2"/><circle cx="45.4" cy="160.0" r="2.6"/><circle cx="68.7" cy="157.1" r="2.7"/><circle cx="55.0" cy="157.3" r="2.8"/><circle cx="66.3" cy="159.8" r="3.0"/><circle cx="85.9" cy="159.6" r="3.4"/><circle cx="71.3" cy="156.5" r="3.2"/><circle cx="88.0" cy="159.8" r="2.8"/><circle cx="73.7" cy="156.7" r="3.2"/><circle cx="65.7" cy="157.1" r="2.1"/><circle cx="81.7" cy="160.2" r="2.1"/><circle cx="78.6" cy="157.6" r="2.2"/><circle cx="49.8" cy="159.2" r="3.2"/><circle cx="35.5" cy="158.5" r="2.1"/><circle cx="74.0" cy="157.3" r="3.2"/><circle cx="88.9" cy="158.0" r="3.4"/><circle cx="50.7" cy="156.1" r="2.8"/><circle cx="34.8" cy="156.7" r="2.6"/><circle cx="67.8" cy="156.5" r="2.1"/><circle cx="82.5" cy="157.2" r="3.3"/><circle cx="84.1" cy="157.5" r="2.6"/><circle cx="62.6" cy="158.6" r="2.8"/><circle cx="64.9" cy="158.5" r="3.3"/><circle cx="61.9" cy="157.7" r="3.0"/><circle cx="46.5" cy="157.1" r="3.4"/><circle cx="62.7" cy="158.2" r="2.0"/><circle cx="56.7" cy="158.4" r="2.0"/><circle cx="68.1" cy="158.6" r="2.1"/><circle cx="68.8" cy="157.9" r="3.0"/><circle cx="53.1" cy="158.9" r="3.0"/><circle cx="34.3" cy="156.1" r="2.9"/><circle cx="87.9" cy="156.9" r="2.6"/><circle cx="66.8" cy="157.2" r="2.5"/><circle cx="50.8" cy="157.4" r="2.8"/><circle cx="50.1" cy="157.5" r="3.1"/><circle cx="34.5" cy="158.3" r="3.0"/><circle cx="50.7" cy="156.8" r="3.1"/><circle cx="46.6" cy="156.6" r="2.6"/><circle cx="72.8" cy="156.2" r="2.5"/><circle cx="52.0" cy="159.5" r="2.6"/><circle cx="81.8" cy="156.5" r="2.5"/><circle cx="70.1" cy="159.7" r="2.6"/><circle cx="45.8" cy="156.3" r="2.7"/><circle cx="43.9" cy="159.3" r="3.2"/><circle cx="43.5" cy="157.0" r="3.1"/><circle cx="69.6" cy="159.3" r="2.5"/><circle cx="40.4" cy="157.1" r="3.1"/><circle cx="48.5" cy="157.3" r="2.6"/><circle cx="56.9" cy="157.6" r="3.3"/><circle cx="41.9" cy="155.8" r="3.3"/><circle cx="83.2" cy="160.1" r="2.6"/><circle cx="87.2" cy="159.9" r="2.3"/><circle cx="75.5" cy="159.5" r="2.9"/><circle cx="62.6" cy="157.1" r="2.5"/><circle cx="46.0" cy="156.1" r="2.8"/><circle cx="49.4" cy="159.4" r="2.1"/><circle cx="84.5" cy="158.9" r="3.3"/><circle cx="84.1" cy="159.8" r="2.8"/><circle cx="33.7" cy="159.1" r="2.2"/><circle cx="50.1" cy="158.7" r="2.7"/><circle cx="56.6" cy="159.9" r="2.9"/><circle cx="52.5" cy="156.9" r="3.2"/><circle cx="60.2" cy="159.2" r="2.5"/><circle cx="44.2" cy="158.2" r="3.1"/><circle cx="42.8" cy="159.3" r="3.3"/><circle cx="78.9" cy="159.4" r="2.0"/><circle cx="68.8" cy="159.6" r="2.1"/><circle cx="48.5" cy="157.0" r="2.7"/><circle cx="57.1" cy="157.9" r="3.1"/><circle cx="33.1" cy="156.0" r="2.2"/><circle cx="40.1" cy="156.1" r="3.4"/><circle cx="81.7" cy="156.2" r="2.7"/><circle cx="51.0" cy="157.2" r="2.5"/><circle cx="69.9" cy="158.4" r="2.5"/><circle cx="43.9" cy="157.2" r="2.2"/><circle cx="64.7" cy="159.0" r="2.5"/><circle cx="37.6" cy="156.6" r="2.5"/><circle cx="67.5" cy="159.2" r="2.5"/><circle cx="78.7" cy="158.5" r="2.6"/><rect x="33.5" y="155.5" width="56" height="5.0"/></g><path d="M29.5 171.5h17l2 2v9l-2 2h-17v-4l1.5-1.5v-2l-1.5-1.5z" fill="#A4D8DE" stroke="#3C6A72"/><rect x="33" y="173.0" width="13" height="10" fill="#17393E"/><text x="39.5" y="181.3" text-anchor="middle" font-size="7.5" font-weight="bold" fill="#FFF" font-family="Liberation Mono">J1</text><path d="M29.5 189.5h17l2 2v9l-2 2h-17v-4l1.5-1.5v-2l-1.5-1.5z" fill="#A4D8DE" stroke="#3C6A72"/><rect x="33" y="191.0" width="13" height="10" fill="#17393E"/><text x="39.5" y="199.3" text-anchor="middle" font-size="7.5" font-weight="bold" fill="#FFF" font-family="Liberation Mono">J1</text><path d="M29.5 207.5h17l2 2v9l-2 2h-17v-4l1.5-1.5v-2l-1.5-1.5z" fill="#A4D8DE" stroke="#3C6A72"/><rect x="33" y="209.0" width="13" height="10" fill="#17393E"/><text x="39.5" y="217.3" text-anchor="middle" font-size="7.5" font-weight="bold" fill="#FFF" font-family="Liberation Mono">J1</text><path d="M29.5 225.5h17l2 2v9l-2 2h-17v-4l1.5-1.5v-2l-1.5-1.5z" fill="#A4D8DE" stroke="#3C6A72"/><rect x="33" y="227.0" width="13" height="10" fill="#17393E"/><text x="39.5" y="235.3" text-anchor="middle" font-size="7.5" font-weight="bold" fill="#FFF" font-family="Liberation Mono">J1</text><path d="M29.5 243.5h17l2 2v9l-2 2h-17v-4l1.5-1.5v-2l-1.5-1.5z" fill="#A4D8DE" stroke="#3C6A72"/><rect x="33" y="245.0" width="13" height="10" fill="#17393E"/><text x="39.5" y="253.3" text-anchor="middle" font-size="7.5" font-weight="bold" fill="#FFF" font-family="Liberation Mono">J1</text><rect x="51" y="240" width="3" height="15" fill="#3A5AA8"/><path d="M35 261.5h8l-4 9h-8z" fill="none" stroke="#6A5230" stroke-width="1.3"/><path d="M35 279.5h8l-4 9h-8z" fill="none" stroke="#6A5230" stroke-width="1.3"/><path d="M35 297.5h8l-4 9h-8z" fill="none" stroke="#6A5230" stroke-width="1.3"/><g stroke="#6A5230" stroke-width="1.2" fill="none"><path d="M30 320h9M42 314l-8 12M34 315l7 9"/></g><g stroke="#666" stroke-width=".8" fill="none"><path d="M30 313l1.5 2 1.5-2M42 318l3 3M45 318l-3 3M30 324h3l-3 3h3"/></g><path d="M40.5 331l-7 14" stroke="#6A5230" stroke-width="1.5" stroke-dasharray="2.5 2"/><path d="M40.5 349l-7 14" stroke="#6A5230" stroke-width="1.5" stroke-dasharray="2.5 2"/><path d="M40.5 367l-7 14" stroke="#6A5230" stroke-width="1.5" stroke-dasharray="2.5 2"/><rect x="13.5" y="388.5" width="9" height="9" rx="1" fill="#F4F4F4" stroke="#8C8C86"/><path d="M15.5 393h5M18 390.5v5" stroke="#111" stroke-width="1.1"/><path d="M29.5 389.5l2-2h10v9.5l-2 2h-10z" fill="#A8EEF0" stroke="#3C7A80" stroke-width=".9"/><path d="M39.5 389.5l2-2v9.5l-2 2z" fill="#5AA8B0"/><g fill="#000"><circle cx="87.4" cy="393.8" r="3.1"/><circle cx="87.4" cy="391.9" r="2.9"/><circle cx="87.4" cy="394.6" r="2.8"/><circle cx="59.4" cy="392.6" r="3.4"/><circle cx="56.9" cy="392.2" r="3.3"/><circle cx="70.1" cy="391.7" r="2.4"/><circle cx="87.5" cy="392.3" r="2.6"/><circle cx="76.9" cy="394.3" r="2.7"/><circle cx="56.1" cy="393.3" r="2.0"/><circle cx="56.6" cy="391.6" r="3.0"/><circle cx="63.8" cy="393.8" r="2.2"/><circle cx="57.5" cy="390.9" r="3.0"/><circle cx="85.6" cy="391.8" r="2.3"/><circle cx="53.5" cy="393.6" r="2.4"/><circle cx="58.2" cy="393.6" r="2.8"/><circle cx="70.0" cy="391.5" r="2.9"/><circle cx="74.1" cy="392.7" r="2.2"/><circle cx="88.3" cy="394.6" r="3.0"/><circle cx="90.8" cy="393.4" r="2.5"/><circle cx="57.4" cy="393.5" r="2.7"/><circle cx="69.6" cy="395.2" r="3.2"/><circle cx="57.4" cy="394.7" r="2.0"/><circle cx="77.8" cy="392.2" r="3.0"/><circle cx="89.2" cy="393.1" r="3.1"/><circle cx="55.1" cy="393.7" r="2.2"/><circle cx="70.3" cy="392.3" r="2.1"/><circle cx="81.4" cy="391.2" r="2.4"/><circle cx="56.3" cy="393.7" r="2.4"/><circle cx="54.7" cy="390.9" r="2.3"/><circle cx="72.3" cy="390.9" r="2.0"/><circle cx="78.3" cy="393.1" r="2.2"/><circle cx="64.9" cy="391.4" r="2.4"/><circle cx="67.7" cy="391.8" r="2.3"/><circle cx="61.6" cy="392.1" r="2.8"/><circle cx="86.7" cy="393.7" r="2.6"/><circle cx="53.1" cy="391.6" r="2.9"/><circle cx="68.4" cy="394.5" r="3.3"/><circle cx="64.3" cy="392.4" r="2.4"/><circle cx="78.7" cy="391.2" r="2.4"/><circle cx="86.4" cy="392.4" r="3.4"/><circle cx="68.0" cy="394.5" r="2.6"/><circle cx="56.8" cy="393.3" r="2.3"/><circle cx="87.9" cy="393.9" r="2.7"/><circle cx="88.1" cy="393.2" r="3.4"/><circle cx="80.2" cy="391.6" r="2.4"/><circle cx="85.1" cy="391.2" r="3.4"/><circle cx="54.6" cy="394.1" r="2.9"/><circle cx="68.4" cy="393.4" r="2.8"/><circle cx="66.7" cy="392.0" r="2.1"/><circle cx="77.9" cy="394.7" r="2.5"/><circle cx="85.6" cy="392.5" r="2.4"/><circle cx="83.4" cy="394.9" r="2.1"/><circle cx="86.1" cy="392.2" r="3.1"/><circle cx="64.1" cy="395.2" r="2.5"/><circle cx="60.8" cy="391.0" r="2.2"/><circle cx="56.5" cy="394.4" r="2.0"/><circle cx="57.5" cy="391.9" r="2.2"/><circle cx="82.5" cy="390.8" r="3.0"/><circle cx="66.3" cy="391.4" r="2.3"/><circle cx="73.0" cy="391.9" r="2.5"/><circle cx="67.7" cy="393.2" r="3.0"/><circle cx="64.0" cy="393.5" r="3.0"/><circle cx="64.3" cy="394.2" r="2.1"/><rect x="53.5" y="390.5" width="37" height="5.0"/></g><rect x="99" y="395" width="1" height="1" fill="#444"/><rect x="233" y="395" width="1" height="1" fill="#444"/><rect x="13.5" y="406.5" width="9" height="9" rx="1" fill="#F4F4F4" stroke="#8C8C86"/><path d="M15.5 411h5M18 408.5v5" stroke="#111" stroke-width="1.1"/><path d="M29.5 407.5l2-2h10v9.5l-2 2h-10z" fill="#A8EEF0" stroke="#3C7A80" stroke-width=".9"/><path d="M39.5 407.5l2-2v9.5l-2 2z" fill="#5AA8B0"/><g fill="#000"><circle cx="58.1" cy="411.8" r="2.9"/><circle cx="71.6" cy="409.8" r="3.1"/><circle cx="85.7" cy="411.1" r="2.7"/><circle cx="61.2" cy="408.8" r="2.5"/><circle cx="76.2" cy="409.1" r="3.1"/><circle cx="61.0" cy="409.8" r="2.1"/><circle cx="93.9" cy="412.1" r="3.2"/><circle cx="77.5" cy="408.9" r="2.5"/><circle cx="72.4" cy="409.3" r="3.3"/><circle cx="66.8" cy="409.5" r="3.1"/><circle cx="56.4" cy="412.9" r="2.6"/><circle cx="74.7" cy="410.3" r="2.7"/><circle cx="59.0" cy="409.0" r="3.2"/><circle cx="61.1" cy="412.2" r="2.3"/><circle cx="92.7" cy="412.7" r="3.1"/><circle cx="83.8" cy="411.4" r="3.0"/><circle cx="56.3" cy="410.9" r="3.2"/><circle cx="59.6" cy="412.9" r="3.2"/><circle cx="68.6" cy="410.4" r="2.6"/><circle cx="67.6" cy="413.2" r="2.5"/><circle cx="52.2" cy="409.2" r="3.0"/><circle cx="93.7" cy="411.0" r="2.7"/><circle cx="74.7" cy="412.1" r="2.3"/><circle cx="77.2" cy="411.2" r="2.9"/><circle cx="58.8" cy="409.5" r="2.5"/><circle cx="90.9" cy="410.3" r="2.8"/><circle cx="64.2" cy="409.3" r="2.1"/><circle cx="86.0" cy="412.2" r="2.5"/><circle cx="80.4" cy="411.8" r="3.3"/><circle cx="92.2" cy="410.6" r="3.4"/><circle cx="92.3" cy="411.4" r="3.2"/><circle cx="72.1" cy="410.5" r="2.3"/><circle cx="88.7" cy="409.5" r="2.1"/><circle cx="85.6" cy="412.2" r="2.7"/><circle cx="87.0" cy="409.0" r="2.4"/><circle cx="63.5" cy="410.6" r="2.2"/><circle cx="54.0" cy="410.3" r="3.3"/><circle cx="93.3" cy="412.1" r="2.7"/><circle cx="61.8" cy="413.0" r="2.7"/><circle cx="82.3" cy="408.9" r="2.3"/><circle cx="87.0" cy="412.3" r="3.2"/><circle cx="76.9" cy="410.7" r="2.8"/><circle cx="87.5" cy="410.2" r="2.7"/><circle cx="62.9" cy="412.2" r="2.0"/><circle cx="80.5" cy="413.0" r="2.0"/><circle cx="76.5" cy="411.6" r="3.2"/><circle cx="76.1" cy="409.9" r="2.6"/><circle cx="92.2" cy="412.8" r="2.2"/><circle cx="55.1" cy="409.2" r="2.0"/><circle cx="70.2" cy="409.4" r="3.2"/><circle cx="79.2" cy="409.4" r="2.8"/><circle cx="64.9" cy="411.0" r="2.3"/><circle cx="58.1" cy="409.6" r="2.5"/><circle cx="81.5" cy="411.2" r="2.1"/><circle cx="81.6" cy="412.6" r="3.1"/><circle cx="85.0" cy="408.8" r="2.6"/><circle cx="53.7" cy="412.2" r="2.2"/><circle cx="81.6" cy="409.9" r="3.0"/><circle cx="64.5" cy="409.0" r="2.5"/><circle cx="64.3" cy="412.8" r="2.4"/><circle cx="72.6" cy="411.2" r="3.3"/><circle cx="55.2" cy="411.4" r="2.7"/><circle cx="82.6" cy="413.1" r="2.4"/><circle cx="81.1" cy="411.1" r="2.8"/><circle cx="53.7" cy="412.4" r="3.4"/><circle cx="66.3" cy="410.2" r="3.4"/><circle cx="55.6" cy="409.1" r="2.1"/><circle cx="86.0" cy="412.1" r="2.6"/><circle cx="77.7" cy="408.9" r="2.9"/><circle cx="70.0" cy="411.1" r="2.5"/><rect x="51.5" y="408.5" width="42" height="5.0"/></g><rect x="99" y="413" width="1" height="1" fill="#444"/><rect x="233" y="413" width="1" height="1" fill="#444"/><rect x="13.5" y="424.5" width="9" height="9" rx="1" fill="#F4F4F4" stroke="#8C8C86"/><path d="M15.5 429h5M18 426.5v5" stroke="#111" stroke-width="1.1"/><path d="M29.5 425.5l2-2h10v9.5l-2 2h-10z" fill="#A8EEF0" stroke="#3C7A80" stroke-width=".9"/><path d="M39.5 425.5l2-2v9.5l-2 2z" fill="#5AA8B0"/><g fill="#000"><circle cx="92.2" cy="427.4" r="2.0"/><circle cx="93.9" cy="427.6" r="2.2"/><circle cx="78.7" cy="428.3" r="3.2"/><circle cx="60.2" cy="431.0" r="2.4"/><circle cx="76.5" cy="430.9" r="3.0"/><circle cx="90.6" cy="429.9" r="2.1"/><circle cx="88.8" cy="429.4" r="2.4"/><circle cx="58.4" cy="430.5" r="2.8"/><circle cx="91.3" cy="430.2" r="3.3"/><circle cx="74.9" cy="429.9" r="2.9"/><circle cx="61.4" cy="431.0" r="2.4"/><circle cx="84.4" cy="431.0" r="2.9"/><circle cx="56.3" cy="430.4" r="2.9"/><circle cx="58.1" cy="427.0" r="2.7"/><circle cx="51.4" cy="430.9" r="2.7"/><circle cx="72.8" cy="428.6" r="2.9"/><circle cx="90.3" cy="428.2" r="2.5"/><circle cx="75.6" cy="428.1" r="2.8"/><circle cx="73.9" cy="428.7" r="2.9"/><circle cx="73.2" cy="427.2" r="3.4"/><circle cx="65.7" cy="428.7" r="2.6"/><circle cx="90.9" cy="431.0" r="2.7"/><circle cx="67.6" cy="427.2" r="3.3"/><circle cx="57.5" cy="429.2" r="2.5"/><circle cx="64.4" cy="428.4" r="2.3"/><circle cx="51.6" cy="429.2" r="3.1"/><circle cx="78.5" cy="427.7" r="3.0"/><circle cx="52.3" cy="428.6" r="3.2"/><circle cx="90.5" cy="428.8" r="3.2"/><circle cx="71.9" cy="429.1" r="2.8"/><circle cx="93.6" cy="430.1" r="2.7"/><circle cx="82.0" cy="429.6" r="2.5"/><circle cx="84.5" cy="430.4" r="2.9"/><circle cx="91.5" cy="426.9" r="2.7"/><circle cx="77.9" cy="428.3" r="2.2"/><circle cx="80.5" cy="428.7" r="2.4"/><circle cx="51.8" cy="431.1" r="2.5"/><circle cx="55.2" cy="427.8" r="2.4"/><circle cx="88.1" cy="427.6" r="2.4"/><circle cx="54.3" cy="428.9" r="2.3"/><circle cx="65.1" cy="430.0" r="3.3"/><circle cx="86.7" cy="427.0" r="2.5"/><circle cx="87.4" cy="426.9" r="2.3"/><circle cx="71.6" cy="428.5" r="3.1"/><circle cx="81.6" cy="428.8" r="2.3"/><circle cx="60.2" cy="428.0" r="2.1"/><circle cx="79.3" cy="427.5" r="3.2"/><circle cx="78.4" cy="427.0" r="2.7"/><circle cx="76.6" cy="427.0" r="2.7"/><circle cx="51.3" cy="430.2" r="2.0"/><circle cx="77.8" cy="431.1" r="3.2"/><circle cx="60.3" cy="429.2" r="2.2"/><circle cx="65.1" cy="430.6" r="3.1"/><circle cx="50.4" cy="428.5" r="2.9"/><circle cx="57.7" cy="430.3" r="3.3"/><circle cx="74.3" cy="428.4" r="3.2"/><circle cx="72.6" cy="427.6" r="2.4"/><circle cx="57.0" cy="430.5" r="2.7"/><circle cx="80.7" cy="430.4" r="3.4"/><circle cx="58.4" cy="428.6" r="3.2"/><circle cx="83.5" cy="428.5" r="2.9"/><circle cx="58.6" cy="427.5" r="2.1"/><circle cx="66.7" cy="427.8" r="2.7"/><circle cx="92.7" cy="427.5" r="2.8"/><circle cx="88.0" cy="429.4" r="2.7"/><circle cx="83.8" cy="426.9" r="3.3"/><circle cx="80.2" cy="430.3" r="3.2"/><circle cx="54.3" cy="427.1" r="2.2"/><circle cx="72.2" cy="430.9" r="3.3"/><circle cx="68.1" cy="429.5" r="3.0"/><circle cx="64.6" cy="431.1" r="3.3"/><circle cx="82.0" cy="430.8" r="3.1"/><rect x="50.5" y="426.5" width="43" height="5.0"/></g><rect x="99" y="431" width="1" height="1" fill="#444"/><rect x="233" y="431" width="1" height="1" fill="#444"/><rect x="13.5" y="442.5" width="9" height="9" rx="1" fill="#F4F4F4" stroke="#8C8C86"/><path d="M15.5 447h5M18 444.5v5" stroke="#111" stroke-width="1.1"/><path d="M29.5 443.5l2-2h10v9.5l-2 2h-10z" fill="#A8EEF0" stroke="#3C7A80" stroke-width=".9"/><path d="M39.5 443.5l2-2v9.5l-2 2z" fill="#5AA8B0"/><g fill="#000"><circle cx="89.8" cy="449.0" r="3.2"/><circle cx="54.5" cy="447.4" r="2.6"/><circle cx="73.3" cy="445.4" r="2.3"/><circle cx="69.7" cy="445.8" r="2.6"/><circle cx="52.0" cy="445.2" r="3.0"/><circle cx="68.7" cy="447.1" r="3.0"/><circle cx="66.1" cy="445.1" r="3.1"/><circle cx="75.7" cy="447.7" r="2.9"/><circle cx="91.8" cy="446.4" r="3.1"/><circle cx="66.5" cy="447.3" r="2.9"/><circle cx="64.2" cy="445.2" r="2.7"/><circle cx="81.2" cy="447.4" r="2.6"/><circle cx="78.0" cy="445.6" r="2.2"/><circle cx="64.6" cy="448.4" r="2.3"/><circle cx="55.8" cy="445.2" r="2.1"/><circle cx="62.6" cy="447.3" r="3.1"/><circle cx="64.9" cy="446.4" r="2.4"/><circle cx="63.8" cy="448.2" r="2.8"/><circle cx="61.9" cy="445.3" r="3.1"/><circle cx="80.7" cy="448.4" r="2.3"/><circle cx="73.9" cy="448.8" r="2.8"/><circle cx="90.7" cy="445.5" r="3.4"/><circle cx="53.3" cy="446.6" r="2.0"/><circle cx="85.0" cy="447.8" r="3.4"/><circle cx="84.8" cy="449.0" r="2.8"/><circle cx="92.5" cy="448.1" r="2.5"/><circle cx="91.9" cy="446.5" r="2.3"/><circle cx="54.2" cy="446.9" r="2.3"/><circle cx="90.2" cy="449.0" r="2.3"/><circle cx="55.3" cy="447.1" r="2.2"/><circle cx="73.8" cy="448.4" r="2.4"/><circle cx="68.7" cy="448.8" r="2.6"/><circle cx="65.4" cy="448.7" r="3.1"/><circle cx="88.6" cy="447.8" r="2.6"/><circle cx="80.1" cy="448.5" r="2.9"/><circle cx="61.0" cy="446.1" r="2.6"/><circle cx="83.4" cy="447.3" r="2.8"/><circle cx="85.7" cy="445.3" r="2.9"/><circle cx="65.0" cy="447.3" r="3.2"/><circle cx="61.4" cy="449.0" r="2.1"/><circle cx="74.6" cy="447.2" r="2.3"/><circle cx="74.6" cy="446.9" r="2.6"/><circle cx="81.2" cy="444.8" r="2.5"/><circle cx="84.0" cy="445.4" r="3.2"/><circle cx="59.6" cy="447.8" r="2.2"/><circle cx="69.9" cy="446.7" r="2.1"/><circle cx="80.4" cy="446.9" r="3.0"/><circle cx="73.6" cy="447.2" r="2.7"/><circle cx="63.5" cy="448.8" r="2.1"/><circle cx="87.8" cy="448.6" r="2.7"/><circle cx="83.6" cy="447.8" r="2.8"/><circle cx="63.2" cy="446.2" r="2.5"/><circle cx="63.7" cy="449.0" r="2.5"/><circle cx="67.3" cy="446.6" r="3.1"/><circle cx="71.1" cy="447.2" r="2.4"/><circle cx="62.7" cy="445.2" r="2.3"/><circle cx="62.1" cy="448.5" r="2.7"/><circle cx="55.6" cy="446.8" r="2.2"/><circle cx="74.8" cy="446.7" r="3.2"/><circle cx="61.9" cy="448.5" r="2.3"/><circle cx="92.3" cy="447.6" r="2.1"/><circle cx="84.9" cy="446.0" r="2.5"/><circle cx="57.2" cy="448.5" r="2.1"/><circle cx="82.0" cy="446.5" r="3.0"/><circle cx="63.3" cy="445.1" r="3.3"/><circle cx="78.5" cy="445.5" r="3.4"/><circle cx="89.3" cy="445.6" r="2.0"/><circle cx="76.7" cy="445.4" r="3.0"/><circle cx="70.7" cy="447.9" r="2.8"/><rect x="51.5" y="444.5" width="41" height="5.0"/></g><rect x="99" y="449" width="1" height="1" fill="#444"/><rect x="233" y="449" width="1" height="1" fill="#444"/><rect x="13.5" y="460.5" width="9" height="9" rx="1" fill="#F4F4F4" stroke="#8C8C86"/><path d="M15.5 465h5M18 462.5v5" stroke="#111" stroke-width="1.1"/><path d="M29.5 461.5l2-2h10v9.5l-2 2h-10z" fill="#A8EEF0" stroke="#3C7A80" stroke-width=".9"/><path d="M39.5 461.5l2-2v9.5l-2 2z" fill="#5AA8B0"/><g fill="#000"><circle cx="79.5" cy="466.5" r="2.3"/><circle cx="90.9" cy="463.7" r="2.9"/><circle cx="54.7" cy="466.1" r="2.2"/><circle cx="79.3" cy="466.0" r="3.1"/><circle cx="68.7" cy="466.6" r="3.4"/><circle cx="55.6" cy="465.1" r="3.3"/><circle cx="80.6" cy="464.8" r="2.4"/><circle cx="89.1" cy="463.2" r="3.1"/><circle cx="84.7" cy="463.5" r="2.5"/><circle cx="63.2" cy="465.2" r="2.5"/><circle cx="86.7" cy="466.9" r="2.4"/><circle cx="86.8" cy="463.1" r="2.1"/><circle cx="77.6" cy="466.3" r="3.1"/><circle cx="90.7" cy="466.6" r="2.4"/><circle cx="80.7" cy="466.9" r="2.1"/><circle cx="70.8" cy="463.5" r="2.2"/><circle cx="70.2" cy="465.7" r="3.4"/><circle cx="56.3" cy="465.0" r="3.4"/><circle cx="81.6" cy="465.1" r="2.3"/><circle cx="76.2" cy="463.9" r="2.9"/><circle cx="76.9" cy="464.5" r="3.1"/><circle cx="67.1" cy="464.9" r="3.2"/><circle cx="61.0" cy="463.6" r="2.8"/><circle cx="68.4" cy="466.6" r="2.3"/><circle cx="65.9" cy="463.1" r="2.6"/><circle cx="63.5" cy="464.8" r="3.1"/><circle cx="52.5" cy="467.2" r="3.0"/><circle cx="83.5" cy="465.2" r="2.8"/><circle cx="67.4" cy="464.5" r="2.3"/><circle cx="63.1" cy="464.1" r="2.5"/><circle cx="87.3" cy="466.3" r="2.9"/><circle cx="51.7" cy="464.0" r="2.8"/><circle cx="78.7" cy="464.6" r="2.9"/><circle cx="87.2" cy="464.0" r="2.5"/><circle cx="81.4" cy="464.2" r="3.0"/><circle cx="66.9" cy="462.9" r="2.6"/><circle cx="53.7" cy="466.3" r="3.2"/><circle cx="72.2" cy="466.8" r="2.3"/><circle cx="68.8" cy="463.6" r="2.1"/><circle cx="84.0" cy="463.0" r="3.3"/><circle cx="73.3" cy="465.9" r="2.1"/><circle cx="87.3" cy="466.3" r="2.1"/><circle cx="58.3" cy="463.4" r="2.7"/><circle cx="54.1" cy="466.3" r="2.7"/><circle cx="79.2" cy="463.9" r="2.9"/><circle cx="69.1" cy="465.7" r="2.6"/><circle cx="90.6" cy="466.5" r="3.2"/><circle cx="64.7" cy="463.6" r="2.2"/><circle cx="56.3" cy="467.1" r="2.4"/><circle cx="85.8" cy="463.8" r="2.9"/><circle cx="61.0" cy="464.2" r="3.0"/><circle cx="75.3" cy="467.0" r="2.3"/><circle cx="61.8" cy="463.1" r="2.3"/><circle cx="90.2" cy="465.3" r="2.7"/><circle cx="64.6" cy="466.1" r="3.0"/><circle cx="57.2" cy="463.0" r="2.2"/><circle cx="83.7" cy="466.0" r="2.3"/><circle cx="60.4" cy="464.2" r="3.0"/><circle cx="80.9" cy="463.8" r="2.5"/><circle cx="60.5" cy="467.0" r="2.8"/><circle cx="88.6" cy="463.9" r="2.9"/><circle cx="73.8" cy="466.9" r="2.5"/><circle cx="60.1" cy="466.4" r="3.3"/><circle cx="71.4" cy="464.3" r="2.1"/><circle cx="68.8" cy="466.9" r="2.5"/><circle cx="68.9" cy="465.3" r="2.3"/><rect x="51.5" y="462.5" width="39" height="5.0"/></g><rect x="99" y="467" width="1" height="1" fill="#444"/><rect x="233" y="467" width="1" height="1" fill="#444"/><rect x="13.5" y="478.5" width="9" height="9" rx="1" fill="#F4F4F4" stroke="#8C8C86"/><path d="M15.5 483h5M18 480.5v5" stroke="#111" stroke-width="1.1"/><path d="M29.5 479.5l2-2h10v9.5l-2 2h-10z" fill="#A8EEF0" stroke="#3C7A80" stroke-width=".9"/><path d="M39.5 479.5l2-2v9.5l-2 2z" fill="#5AA8B0"/><g fill="#000"><circle cx="67.1" cy="484.9" r="3.2"/><circle cx="60.6" cy="484.6" r="2.9"/><circle cx="53.7" cy="485.0" r="2.4"/><circle cx="64.2" cy="482.7" r="2.8"/><circle cx="57.0" cy="483.8" r="3.2"/><circle cx="72.5" cy="484.3" r="2.9"/><circle cx="85.0" cy="481.6" r="2.5"/><circle cx="70.8" cy="481.3" r="3.4"/><circle cx="77.4" cy="481.2" r="2.8"/><circle cx="68.6" cy="481.6" r="2.2"/><circle cx="70.4" cy="481.1" r="2.8"/><circle cx="72.6" cy="481.4" r="3.2"/><circle cx="53.6" cy="481.6" r="3.1"/><circle cx="60.8" cy="482.7" r="2.8"/><circle cx="69.4" cy="483.0" r="2.7"/><circle cx="71.3" cy="481.1" r="3.1"/><circle cx="63.3" cy="481.0" r="2.6"/><circle cx="84.6" cy="483.6" r="2.6"/><circle cx="71.1" cy="481.8" r="2.9"/><circle cx="66.0" cy="481.1" r="2.2"/><circle cx="55.7" cy="483.8" r="3.2"/><circle cx="82.2" cy="481.8" r="2.2"/><circle cx="90.0" cy="482.4" r="2.2"/><circle cx="74.9" cy="483.5" r="2.8"/><circle cx="70.1" cy="482.1" r="2.7"/><circle cx="70.3" cy="483.8" r="2.6"/><circle cx="66.2" cy="485.1" r="2.2"/><circle cx="82.2" cy="482.6" r="3.1"/><circle cx="80.3" cy="483.3" r="2.9"/><circle cx="61.2" cy="480.9" r="3.0"/><circle cx="62.4" cy="481.3" r="3.1"/><circle cx="75.6" cy="480.9" r="2.7"/><circle cx="58.5" cy="484.6" r="2.4"/><circle cx="89.6" cy="483.5" r="2.1"/><circle cx="68.4" cy="485.1" r="3.0"/><circle cx="58.2" cy="482.4" r="2.4"/><circle cx="55.7" cy="483.4" r="3.0"/><circle cx="60.7" cy="483.2" r="3.2"/><circle cx="87.7" cy="481.6" r="2.1"/><circle cx="88.5" cy="482.2" r="2.2"/><circle cx="84.0" cy="482.0" r="3.0"/><circle cx="79.6" cy="482.1" r="2.6"/><circle cx="63.6" cy="484.3" r="2.4"/><circle cx="63.0" cy="484.6" r="2.4"/><circle cx="69.5" cy="483.1" r="2.0"/><circle cx="63.5" cy="484.1" r="3.4"/><circle cx="65.7" cy="482.9" r="2.1"/><circle cx="71.5" cy="482.4" r="2.7"/><circle cx="63.9" cy="482.2" r="3.3"/><circle cx="83.1" cy="482.4" r="2.1"/><circle cx="54.1" cy="481.2" r="2.2"/><circle cx="75.3" cy="483.1" r="2.2"/><circle cx="87.1" cy="483.7" r="3.0"/><circle cx="87.8" cy="482.2" r="3.3"/><circle cx="91.0" cy="484.8" r="2.1"/><circle cx="86.0" cy="485.1" r="2.1"/><circle cx="86.6" cy="484.4" r="2.0"/><circle cx="80.3" cy="484.1" r="3.0"/><circle cx="54.3" cy="485.1" r="2.1"/><circle cx="55.4" cy="485.0" r="2.7"/><circle cx="59.1" cy="482.5" r="2.9"/><circle cx="62.7" cy="484.8" r="2.9"/><circle cx="67.5" cy="482.4" r="2.2"/><circle cx="91.4" cy="482.2" r="3.3"/><circle cx="73.6" cy="483.2" r="2.2"/><circle cx="72.1" cy="481.2" r="2.6"/><rect x="52.5" y="480.5" width="39" height="5.0"/></g><rect x="99" y="485" width="1" height="1" fill="#444"/><rect x="233" y="485" width="1" height="1" fill="#444"/><rect x="13.5" y="496.5" width="9" height="9" rx="1" fill="#F4F4F4" stroke="#8C8C86"/><path d="M15.5 501h5M18 498.5v5" stroke="#111" stroke-width="1.1"/><path d="M29.5 497.5l2-2h10v9.5l-2 2h-10z" fill="#A8EEF0" stroke="#3C7A80" stroke-width=".9"/><path d="M39.5 497.5l2-2v9.5l-2 2z" fill="#5AA8B0"/><g fill="#000"><circle cx="82.1" cy="499.7" r="2.3"/><circle cx="75.8" cy="499.0" r="3.1"/><circle cx="82.9" cy="499.0" r="3.0"/><circle cx="71.6" cy="501.6" r="3.3"/><circle cx="92.4" cy="500.6" r="3.2"/><circle cx="83.8" cy="503.1" r="2.0"/><circle cx="90.3" cy="499.8" r="2.2"/><circle cx="75.7" cy="502.5" r="3.3"/><circle cx="65.7" cy="502.4" r="2.0"/><circle cx="91.6" cy="500.1" r="2.8"/><circle cx="55.3" cy="499.0" r="2.0"/><circle cx="75.8" cy="501.3" r="3.1"/><circle cx="86.6" cy="500.7" r="3.2"/><circle cx="58.6" cy="502.7" r="2.4"/><circle cx="90.4" cy="500.5" r="2.6"/><circle cx="72.3" cy="499.1" r="2.1"/><circle cx="73.4" cy="501.9" r="2.1"/><circle cx="67.5" cy="500.4" r="3.1"/><circle cx="92.6" cy="499.2" r="2.8"/><circle cx="54.5" cy="502.2" r="3.3"/><circle cx="80.4" cy="501.4" r="2.1"/><circle cx="54.1" cy="499.9" r="2.1"/><circle cx="55.8" cy="503.0" r="2.5"/><circle cx="89.0" cy="502.1" r="3.1"/><circle cx="89.3" cy="501.9" r="2.5"/><circle cx="70.2" cy="500.5" r="2.0"/><circle cx="51.9" cy="501.3" r="2.7"/><circle cx="91.8" cy="501.5" r="3.1"/><circle cx="70.5" cy="501.4" r="3.1"/><circle cx="51.5" cy="498.9" r="2.6"/><circle cx="62.6" cy="500.7" r="2.1"/><circle cx="57.3" cy="499.2" r="2.9"/><circle cx="51.4" cy="498.9" r="3.0"/><circle cx="68.2" cy="498.9" r="3.3"/><circle cx="71.1" cy="502.9" r="2.9"/><circle cx="73.5" cy="500.5" r="2.1"/><circle cx="91.5" cy="500.7" r="2.4"/><circle cx="56.3" cy="501.4" r="3.4"/><circle cx="67.3" cy="502.4" r="3.0"/><circle cx="72.1" cy="501.7" r="3.0"/><circle cx="89.9" cy="499.0" r="2.2"/><circle cx="60.4" cy="499.1" r="2.4"/><circle cx="68.7" cy="499.8" r="2.7"/><circle cx="50.3" cy="502.8" r="3.0"/><circle cx="54.5" cy="499.7" r="3.1"/><circle cx="56.1" cy="502.0" r="2.1"/><circle cx="76.7" cy="501.8" r="2.8"/><circle cx="84.2" cy="502.9" r="3.4"/><circle cx="52.3" cy="500.9" r="2.2"/><circle cx="82.0" cy="499.7" r="2.2"/><circle cx="52.5" cy="498.9" r="2.4"/><circle cx="58.4" cy="501.1" r="3.1"/><circle cx="81.0" cy="500.2" r="2.4"/><circle cx="83.5" cy="500.0" r="2.9"/><circle cx="91.7" cy="501.4" r="2.7"/><circle cx="52.1" cy="500.0" r="3.3"/><circle cx="52.4" cy="499.0" r="2.8"/><circle cx="63.2" cy="501.4" r="2.3"/><circle cx="59.5" cy="499.9" r="3.0"/><circle cx="79.8" cy="498.9" r="3.0"/><circle cx="82.8" cy="500.9" r="2.1"/><circle cx="50.6" cy="503.1" r="2.1"/><circle cx="50.0" cy="499.1" r="3.3"/><circle cx="93.0" cy="502.1" r="3.3"/><circle cx="84.8" cy="499.1" r="2.5"/><circle cx="77.6" cy="501.8" r="3.1"/><circle cx="79.8" cy="499.3" r="2.6"/><circle cx="90.7" cy="501.6" r="2.3"/><circle cx="68.0" cy="503.0" r="2.4"/><circle cx="54.3" cy="502.4" r="2.9"/><rect x="50.5" y="498.5" width="42" height="5.0"/></g><rect x="99" y="503" width="1" height="1" fill="#444"/><rect x="233" y="503" width="1" height="1" fill="#444"/><rect x="13.5" y="514.5" width="9" height="9" rx="1" fill="#F4F4F4" stroke="#8C8C86"/><path d="M15.5 519h5M18 516.5v5" stroke="#111" stroke-width="1.1"/><path d="M29.5 515.5l2-2h10v9.5l-2 2h-10z" fill="#A8EEF0" stroke="#3C7A80" stroke-width=".9"/><path d="M39.5 515.5l2-2v9.5l-2 2z" fill="#5AA8B0"/><g fill="#000"><circle cx="79.2" cy="519.9" r="3.3"/><circle cx="60.2" cy="517.1" r="3.2"/><circle cx="66.0" cy="518.4" r="3.1"/><circle cx="59.7" cy="520.8" r="2.7"/><circle cx="55.0" cy="520.8" r="2.8"/><circle cx="55.3" cy="520.5" r="3.1"/><circle cx="83.1" cy="519.7" r="3.4"/><circle cx="52.5" cy="521.1" r="2.9"/><circle cx="62.6" cy="519.5" r="2.5"/><circle cx="79.3" cy="519.9" r="2.7"/><circle cx="56.1" cy="518.5" r="2.4"/><circle cx="83.5" cy="520.9" r="3.1"/><circle cx="74.3" cy="517.5" r="3.0"/><circle cx="63.1" cy="521.2" r="2.2"/><circle cx="92.7" cy="516.9" r="3.1"/><circle cx="66.5" cy="519.3" r="2.6"/><circle cx="64.9" cy="518.7" r="3.1"/><circle cx="66.8" cy="518.4" r="3.1"/><circle cx="59.5" cy="518.4" r="2.7"/><circle cx="73.7" cy="517.5" r="3.1"/><circle cx="72.5" cy="517.2" r="2.5"/><circle cx="54.4" cy="518.3" r="2.2"/><circle cx="62.7" cy="519.2" r="3.0"/><circle cx="64.6" cy="518.8" r="2.7"/><circle cx="76.6" cy="520.8" r="2.3"/><circle cx="84.5" cy="519.2" r="3.3"/><circle cx="80.8" cy="516.8" r="2.1"/><circle cx="85.5" cy="518.1" r="2.9"/><circle cx="56.1" cy="519.3" r="2.6"/><circle cx="71.3" cy="516.8" r="3.3"/><circle cx="87.4" cy="520.1" r="2.9"/><circle cx="61.5" cy="517.6" r="3.2"/><circle cx="65.8" cy="518.5" r="3.2"/><circle cx="66.5" cy="521.2" r="2.3"/><circle cx="87.8" cy="518.1" r="2.2"/><circle cx="71.4" cy="520.4" r="2.1"/><circle cx="77.0" cy="520.6" r="2.0"/><circle cx="72.6" cy="518.2" r="2.7"/><circle cx="86.9" cy="518.7" r="2.4"/><circle cx="60.5" cy="520.4" r="2.2"/><circle cx="82.0" cy="521.2" r="3.0"/><circle cx="89.8" cy="517.3" r="2.9"/><circle cx="77.5" cy="517.1" r="2.6"/><circle cx="64.9" cy="517.4" r="2.6"/><circle cx="55.6" cy="520.8" r="2.2"/><circle cx="74.9" cy="519.9" r="2.0"/><circle cx="91.5" cy="520.8" r="2.8"/><circle cx="73.9" cy="520.5" r="2.8"/><circle cx="61.3" cy="520.9" r="2.3"/><circle cx="75.5" cy="519.2" r="3.1"/><circle cx="67.4" cy="519.6" r="2.3"/><circle cx="81.2" cy="517.5" r="2.5"/><circle cx="73.9" cy="520.0" r="3.3"/><circle cx="92.4" cy="518.9" r="2.1"/><circle cx="77.0" cy="519.4" r="3.0"/><circle cx="54.0" cy="520.3" r="2.2"/><circle cx="86.9" cy="521.1" r="2.8"/><circle cx="70.8" cy="519.7" r="2.2"/><circle cx="79.6" cy="520.5" r="3.3"/><circle cx="81.5" cy="520.0" r="3.3"/><circle cx="68.1" cy="518.3" r="3.4"/><circle cx="54.7" cy="518.3" r="3.0"/><circle cx="91.6" cy="520.3" r="2.3"/><circle cx="85.5" cy="517.8" r="2.7"/><circle cx="77.8" cy="521.1" r="2.3"/><circle cx="66.7" cy="518.2" r="2.4"/><circle cx="58.9" cy="518.6" r="2.4"/><circle cx="63.0" cy="520.5" r="2.2"/><circle cx="71.4" cy="517.0" r="2.1"/><rect x="52.5" y="516.5" width="41" height="5.0"/></g><rect x="99" y="521" width="1" height="1" fill="#444"/><rect x="233" y="521" width="1" height="1" fill="#444"/><rect x="13.5" y="532.5" width="9" height="9" rx="1" fill="#F4F4F4" stroke="#8C8C86"/><path d="M15.5 537h5M18 534.5v5" stroke="#111" stroke-width="1.1"/><path d="M29.5 533.5l2-2h10v9.5l-2 2h-10z" fill="#A8EEF0" stroke="#3C7A80" stroke-width=".9"/><path d="M39.5 533.5l2-2v9.5l-2 2z" fill="#5AA8B0"/><g fill="#000"><circle cx="55.6" cy="535.4" r="2.8"/><circle cx="58.3" cy="535.4" r="2.6"/><circle cx="68.1" cy="535.7" r="2.5"/><circle cx="85.5" cy="535.4" r="2.3"/><circle cx="52.1" cy="535.9" r="2.1"/><circle cx="91.4" cy="536.2" r="3.4"/><circle cx="56.3" cy="538.8" r="2.7"/><circle cx="79.3" cy="537.7" r="2.4"/><circle cx="60.5" cy="537.8" r="2.2"/><circle cx="51.5" cy="538.2" r="2.9"/><circle cx="61.7" cy="537.1" r="3.3"/><circle cx="62.4" cy="535.3" r="2.6"/><circle cx="57.9" cy="536.4" r="2.0"/><circle cx="82.3" cy="538.3" r="2.5"/><circle cx="66.5" cy="535.9" r="3.3"/><circle cx="87.0" cy="537.7" r="2.2"/><circle cx="58.1" cy="538.2" r="2.3"/><circle cx="79.2" cy="536.7" r="2.0"/><circle cx="59.1" cy="538.8" r="2.5"/><circle cx="78.7" cy="538.2" r="2.6"/><circle cx="71.5" cy="538.6" r="3.0"/><circle cx="72.4" cy="537.2" r="2.6"/><circle cx="68.5" cy="537.8" r="2.3"/><circle cx="86.5" cy="536.1" r="2.3"/><circle cx="90.5" cy="534.9" r="2.6"/><circle cx="73.7" cy="536.7" r="3.2"/><circle cx="78.6" cy="537.0" r="2.0"/><circle cx="91.4" cy="536.4" r="2.5"/><circle cx="60.0" cy="535.7" r="2.1"/><circle cx="56.4" cy="537.8" r="2.4"/><circle cx="71.9" cy="537.7" r="2.1"/><circle cx="82.2" cy="535.7" r="3.1"/><circle cx="87.4" cy="536.8" r="2.4"/><circle cx="71.7" cy="538.8" r="3.4"/><circle cx="80.4" cy="536.6" r="2.6"/><circle cx="79.6" cy="536.3" r="3.1"/><circle cx="65.0" cy="537.3" r="2.7"/><circle cx="72.5" cy="538.5" r="3.2"/><circle cx="83.0" cy="537.6" r="2.6"/><circle cx="67.1" cy="536.8" r="3.2"/><circle cx="81.2" cy="535.2" r="2.3"/><circle cx="53.5" cy="536.1" r="3.2"/><circle cx="76.7" cy="534.9" r="3.1"/><circle cx="76.3" cy="536.9" r="2.0"/><circle cx="51.7" cy="535.1" r="3.2"/><circle cx="67.8" cy="535.1" r="3.1"/><circle cx="70.8" cy="536.3" r="2.6"/><circle cx="59.5" cy="535.0" r="3.1"/><circle cx="87.2" cy="536.3" r="2.8"/><circle cx="86.6" cy="534.9" r="3.4"/><circle cx="55.7" cy="536.4" r="2.1"/><circle cx="59.3" cy="535.5" r="2.4"/><circle cx="69.5" cy="537.6" r="2.7"/><circle cx="81.3" cy="539.0" r="2.3"/><circle cx="65.7" cy="537.4" r="2.3"/><circle cx="52.6" cy="538.5" r="2.7"/><circle cx="66.3" cy="537.6" r="2.4"/><circle cx="66.2" cy="535.5" r="2.6"/><circle cx="64.0" cy="537.2" r="3.2"/><circle cx="83.2" cy="537.7" r="2.8"/><circle cx="86.4" cy="535.5" r="3.3"/><circle cx="57.6" cy="538.7" r="2.7"/><circle cx="79.9" cy="539.1" r="2.0"/><circle cx="64.0" cy="535.3" r="2.4"/><circle cx="61.3" cy="537.7" r="3.2"/><circle cx="61.6" cy="536.6" r="2.2"/><circle cx="54.4" cy="535.5" r="2.1"/><rect x="51.5" y="534.5" width="40" height="5.0"/></g><rect x="99" y="539" width="1" height="1" fill="#444"/><rect x="233" y="539" width="1" height="1" fill="#444"/><rect x="13.5" y="550.5" width="9" height="9" rx="1" fill="#F4F4F4" stroke="#8C8C86"/><path d="M15.5 555h5M18 552.5v5" stroke="#111" stroke-width="1.1"/><path d="M29.5 551.5l2-2h10v9.5l-2 2h-10z" fill="#A8EEF0" stroke="#3C7A80" stroke-width=".9"/><path d="M39.5 551.5l2-2v9.5l-2 2z" fill="#5AA8B0"/><g fill="#000"><circle cx="73.8" cy="554.3" r="3.2"/><circle cx="64.0" cy="555.0" r="2.5"/><circle cx="68.8" cy="557.1" r="2.1"/><circle cx="69.9" cy="553.8" r="2.5"/><circle cx="91.0" cy="554.2" r="2.9"/><circle cx="68.9" cy="556.0" r="2.6"/><circle cx="59.5" cy="554.7" r="2.6"/><circle cx="83.1" cy="555.3" r="2.3"/><circle cx="78.6" cy="554.1" r="2.7"/><circle cx="61.4" cy="554.6" r="3.1"/><circle cx="72.6" cy="556.1" r="3.1"/><circle cx="75.3" cy="555.6" r="2.6"/><circle cx="76.5" cy="556.2" r="2.1"/><circle cx="88.6" cy="554.4" r="2.2"/><circle cx="58.7" cy="554.3" r="2.1"/><circle cx="68.1" cy="554.6" r="2.9"/><circle cx="70.7" cy="556.9" r="2.9"/><circle cx="65.2" cy="556.6" r="3.0"/><circle cx="89.8" cy="556.0" r="3.4"/><circle cx="60.8" cy="554.0" r="3.4"/><circle cx="53.8" cy="556.9" r="3.3"/><circle cx="58.2" cy="553.5" r="3.3"/><circle cx="89.5" cy="556.6" r="3.0"/><circle cx="81.9" cy="554.2" r="2.0"/><circle cx="76.9" cy="556.7" r="3.3"/><circle cx="72.6" cy="552.8" r="2.2"/><circle cx="70.1" cy="553.8" r="2.0"/><circle cx="60.3" cy="555.0" r="2.2"/><circle cx="57.3" cy="553.5" r="2.0"/><circle cx="82.8" cy="556.6" r="2.3"/><circle cx="77.1" cy="556.7" r="2.3"/><circle cx="65.7" cy="556.7" r="3.1"/><circle cx="76.6" cy="556.3" r="2.8"/><circle cx="65.0" cy="555.8" r="3.1"/><circle cx="55.1" cy="554.2" r="2.4"/><circle cx="86.7" cy="554.1" r="2.9"/><circle cx="69.5" cy="554.5" r="2.7"/><circle cx="87.0" cy="555.7" r="2.5"/><circle cx="58.7" cy="554.3" r="2.7"/><circle cx="77.5" cy="557.2" r="2.5"/><circle cx="88.7" cy="556.8" r="2.6"/><circle cx="61.4" cy="553.8" r="3.3"/><circle cx="59.6" cy="555.7" r="2.9"/><circle cx="59.4" cy="552.9" r="2.9"/><circle cx="55.0" cy="555.2" r="3.4"/><circle cx="70.6" cy="554.2" r="2.1"/><circle cx="64.5" cy="554.2" r="2.2"/><circle cx="79.7" cy="555.5" r="3.0"/><circle cx="57.1" cy="553.9" r="3.3"/><circle cx="53.3" cy="554.4" r="3.1"/><circle cx="61.7" cy="553.8" r="2.9"/><circle cx="62.6" cy="554.3" r="2.5"/><circle cx="64.4" cy="555.7" r="3.0"/><circle cx="81.9" cy="557.1" r="2.1"/><circle cx="62.8" cy="557.1" r="3.1"/><circle cx="81.9" cy="553.8" r="2.2"/><circle cx="63.5" cy="556.7" r="3.1"/><circle cx="66.9" cy="555.7" r="3.0"/><circle cx="63.9" cy="553.3" r="3.1"/><circle cx="79.9" cy="556.4" r="3.0"/><circle cx="66.9" cy="555.7" r="2.5"/><circle cx="87.3" cy="553.3" r="3.0"/><circle cx="66.2" cy="556.8" r="3.1"/><rect x="53.5" y="552.5" width="37" height="5.0"/></g><rect x="99" y="557" width="1" height="1" fill="#444"/><rect x="233" y="557" width="1" height="1" fill="#444"/><rect x="13.5" y="568.5" width="9" height="9" rx="1" fill="#F4F4F4" stroke="#8C8C86"/><path d="M15.5 573h5M18 570.5v5" stroke="#111" stroke-width="1.1"/><path d="M29.5 569.5l2-2h10v9.5l-2 2h-10z" fill="#A8EEF0" stroke="#3C7A80" stroke-width=".9"/><path d="M39.5 569.5l2-2v9.5l-2 2z" fill="#5AA8B0"/><g fill="#000"><circle cx="72.6" cy="572.1" r="2.0"/><circle cx="77.5" cy="571.7" r="2.4"/><circle cx="66.7" cy="573.6" r="3.4"/><circle cx="69.4" cy="575.2" r="3.4"/><circle cx="60.2" cy="571.1" r="2.2"/><circle cx="85.4" cy="573.4" r="3.3"/><circle cx="90.8" cy="573.7" r="2.7"/><circle cx="52.8" cy="570.9" r="3.1"/><circle cx="78.2" cy="574.2" r="2.8"/><circle cx="78.3" cy="573.6" r="3.3"/><circle cx="54.7" cy="573.0" r="2.4"/><circle cx="84.8" cy="574.7" r="2.4"/><circle cx="53.4" cy="571.9" r="2.4"/><circle cx="82.3" cy="572.6" r="3.0"/><circle cx="62.6" cy="573.1" r="2.3"/><circle cx="77.1" cy="573.1" r="3.2"/><circle cx="89.8" cy="573.1" r="2.1"/><circle cx="89.4" cy="575.0" r="2.7"/><circle cx="70.4" cy="574.9" r="2.4"/><circle cx="60.7" cy="573.9" r="2.9"/><circle cx="78.8" cy="574.4" r="2.7"/><circle cx="67.6" cy="571.8" r="2.3"/><circle cx="65.5" cy="572.7" r="3.0"/><circle cx="76.0" cy="573.0" r="2.5"/><circle cx="76.3" cy="572.5" r="3.1"/><circle cx="77.0" cy="573.9" r="2.5"/><circle cx="71.8" cy="574.0" r="3.3"/><circle cx="72.2" cy="572.2" r="3.0"/><circle cx="55.0" cy="572.3" r="2.0"/><circle cx="73.2" cy="571.9" r="2.5"/><circle cx="83.1" cy="573.6" r="2.1"/><circle cx="68.6" cy="570.8" r="3.2"/><circle cx="70.9" cy="574.5" r="2.4"/><circle cx="84.6" cy="571.4" r="3.2"/><circle cx="66.4" cy="571.1" r="3.3"/><circle cx="85.1" cy="571.7" r="2.8"/><circle cx="70.0" cy="571.4" r="2.6"/><circle cx="90.9" cy="572.5" r="3.1"/><circle cx="81.9" cy="574.2" r="2.9"/><circle cx="87.9" cy="572.3" r="2.7"/><circle cx="68.8" cy="571.2" r="2.7"/><circle cx="82.0" cy="573.3" r="2.2"/><circle cx="60.2" cy="572.9" r="2.1"/><circle cx="58.4" cy="574.1" r="2.1"/><circle cx="54.8" cy="571.5" r="2.7"/><circle cx="50.9" cy="573.8" r="2.8"/><circle cx="81.9" cy="574.2" r="3.0"/><circle cx="71.7" cy="572.1" r="2.8"/><circle cx="56.3" cy="571.8" r="3.0"/><circle cx="75.1" cy="571.4" r="2.6"/><circle cx="75.1" cy="571.8" r="2.9"/><circle cx="56.0" cy="571.5" r="2.6"/><circle cx="62.1" cy="574.0" r="2.6"/><circle cx="62.2" cy="574.4" r="3.2"/><circle cx="82.4" cy="571.3" r="2.4"/><circle cx="54.1" cy="574.1" r="2.6"/><circle cx="53.9" cy="574.9" r="2.1"/><circle cx="51.9" cy="574.8" r="2.6"/><circle cx="85.9" cy="573.4" r="2.2"/><circle cx="70.2" cy="574.2" r="2.0"/><circle cx="82.6" cy="572.3" r="2.7"/><circle cx="63.5" cy="574.3" r="2.7"/><circle cx="69.0" cy="571.1" r="3.0"/><circle cx="57.3" cy="573.5" r="2.0"/><circle cx="54.5" cy="573.6" r="2.4"/><circle cx="75.0" cy="573.8" r="2.5"/><circle cx="72.4" cy="572.5" r="2.1"/><circle cx="85.5" cy="573.1" r="3.2"/><circle cx="76.9" cy="573.6" r="2.2"/><rect x="50.5" y="570.5" width="41" height="5.0"/></g><rect x="99" y="575" width="1" height="1" fill="#444"/><rect x="233" y="575" width="1" height="1" fill="#444"/><rect x="13.5" y="586.5" width="9" height="9" rx="1" fill="#F4F4F4" stroke="#8C8C86"/><path d="M15.5 591h5M18 588.5v5" stroke="#111" stroke-width="1.1"/><path d="M29.5 587.5l2-2h10v9.5l-2 2h-10z" fill="#A8EEF0" stroke="#3C7A80" stroke-width=".9"/><path d="M39.5 587.5l2-2v9.5l-2 2z" fill="#5AA8B0"/><g fill="#000"><circle cx="53.5" cy="589.3" r="2.5"/><circle cx="79.7" cy="589.4" r="2.2"/><circle cx="62.0" cy="592.1" r="2.2"/><circle cx="81.9" cy="591.7" r="2.2"/><circle cx="73.9" cy="590.8" r="2.6"/><circle cx="91.9" cy="589.2" r="2.0"/><circle cx="89.7" cy="590.6" r="2.3"/><circle cx="65.9" cy="590.4" r="3.3"/><circle cx="61.2" cy="589.8" r="2.8"/><circle cx="74.3" cy="593.0" r="3.2"/><circle cx="66.9" cy="589.7" r="3.2"/><circle cx="91.6" cy="588.9" r="3.0"/><circle cx="86.9" cy="591.7" r="2.3"/><circle cx="84.1" cy="592.0" r="2.3"/><circle cx="78.0" cy="589.8" r="2.1"/><circle cx="66.1" cy="590.3" r="2.6"/><circle cx="78.2" cy="592.5" r="3.3"/><circle cx="91.1" cy="593.2" r="3.1"/><circle cx="64.9" cy="589.6" r="2.9"/><circle cx="74.3" cy="591.8" r="2.1"/><circle cx="60.5" cy="592.9" r="2.8"/><circle cx="80.1" cy="589.2" r="2.6"/><circle cx="88.5" cy="591.7" r="3.4"/><circle cx="60.7" cy="590.8" r="3.1"/><circle cx="70.3" cy="592.3" r="2.8"/><circle cx="57.6" cy="589.2" r="3.4"/><circle cx="57.7" cy="589.7" r="2.5"/><circle cx="80.8" cy="592.6" r="2.7"/><circle cx="72.4" cy="592.3" r="2.4"/><circle cx="67.5" cy="591.5" r="2.9"/><circle cx="54.5" cy="589.3" r="2.2"/><circle cx="81.3" cy="591.8" r="3.4"/><circle cx="82.9" cy="589.9" r="3.1"/><circle cx="91.4" cy="590.3" r="2.0"/><circle cx="67.6" cy="590.0" r="2.2"/><circle cx="54.8" cy="589.3" r="3.2"/><circle cx="54.9" cy="591.5" r="2.3"/><circle cx="60.5" cy="592.4" r="2.4"/><circle cx="60.2" cy="590.8" r="3.0"/><circle cx="73.5" cy="592.6" r="2.6"/><circle cx="73.4" cy="592.0" r="2.6"/><circle cx="81.0" cy="590.9" r="2.2"/><circle cx="57.8" cy="592.2" r="3.0"/><circle cx="89.8" cy="591.8" r="2.8"/><circle cx="59.5" cy="592.6" r="2.2"/><circle cx="69.6" cy="589.4" r="2.5"/><circle cx="65.0" cy="590.7" r="3.0"/><circle cx="74.1" cy="589.9" r="3.1"/><circle cx="81.7" cy="592.4" r="2.0"/><circle cx="77.0" cy="592.7" r="2.4"/><circle cx="60.9" cy="592.4" r="2.5"/><circle cx="68.7" cy="592.4" r="2.5"/><circle cx="60.7" cy="589.7" r="2.5"/><circle cx="80.2" cy="590.4" r="3.1"/><circle cx="55.6" cy="589.9" r="2.9"/><circle cx="71.7" cy="591.0" r="3.3"/><circle cx="63.8" cy="589.6" r="2.0"/><circle cx="71.8" cy="590.1" r="2.7"/><circle cx="53.2" cy="588.8" r="2.5"/><circle cx="82.5" cy="590.1" r="3.3"/><circle cx="75.6" cy="590.6" r="3.1"/><circle cx="62.1" cy="591.5" r="3.2"/><circle cx="74.1" cy="590.2" r="2.1"/><circle cx="75.4" cy="589.6" r="2.5"/><rect x="53.5" y="588.5" width="38" height="5.0"/></g><rect x="99" y="593" width="1" height="1" fill="#444"/><rect x="233" y="593" width="1" height="1" fill="#444"/><rect x="13.5" y="604.5" width="9" height="9" rx="1" fill="#F4F4F4" stroke="#8C8C86"/><path d="M15.5 609h5M18 606.5v5" stroke="#111" stroke-width="1.1"/><path d="M29.5 605.5l2-2h10v9.5l-2 2h-10z" fill="#A8EEF0" stroke="#3C7A80" stroke-width=".9"/><path d="M39.5 605.5l2-2v9.5l-2 2z" fill="#5AA8B0"/><g fill="#000"><circle cx="56.0" cy="607.7" r="2.4"/><circle cx="88.1" cy="609.0" r="3.0"/><circle cx="56.9" cy="609.0" r="3.2"/><circle cx="73.4" cy="611.0" r="3.2"/><circle cx="67.5" cy="606.8" r="3.1"/><circle cx="57.9" cy="606.8" r="3.0"/><circle cx="85.9" cy="610.5" r="3.3"/><circle cx="60.9" cy="607.2" r="2.2"/><circle cx="91.1" cy="607.3" r="2.2"/><circle cx="53.8" cy="607.0" r="2.1"/><circle cx="66.8" cy="607.5" r="2.4"/><circle cx="89.2" cy="607.5" r="3.1"/><circle cx="81.8" cy="609.3" r="2.8"/><circle cx="83.0" cy="609.4" r="2.3"/><circle cx="65.8" cy="607.9" r="2.6"/><circle cx="91.5" cy="608.7" r="2.1"/><circle cx="71.6" cy="610.4" r="2.6"/><circle cx="80.4" cy="607.2" r="2.1"/><circle cx="78.8" cy="607.0" r="2.4"/><circle cx="68.0" cy="607.7" r="2.1"/><circle cx="53.3" cy="611.0" r="3.0"/><circle cx="90.1" cy="609.0" r="3.3"/><circle cx="86.6" cy="609.5" r="2.7"/><circle cx="72.8" cy="607.8" r="2.5"/><circle cx="81.2" cy="607.7" r="3.2"/><circle cx="72.9" cy="609.5" r="3.2"/><circle cx="78.2" cy="607.4" r="2.3"/><circle cx="53.0" cy="606.9" r="3.3"/><circle cx="76.1" cy="611.1" r="3.1"/><circle cx="65.3" cy="611.1" r="3.3"/><circle cx="70.8" cy="607.2" r="2.4"/><circle cx="59.5" cy="608.4" r="2.1"/><circle cx="80.8" cy="611.1" r="2.3"/><circle cx="83.4" cy="609.4" r="2.7"/><circle cx="88.4" cy="608.5" r="3.1"/><circle cx="54.4" cy="611.0" r="2.3"/><circle cx="53.1" cy="610.7" r="3.0"/><circle cx="79.3" cy="610.2" r="2.5"/><circle cx="57.5" cy="608.2" r="3.3"/><circle cx="91.3" cy="607.8" r="2.6"/><circle cx="70.6" cy="610.8" r="2.0"/><circle cx="85.3" cy="607.9" r="2.8"/><circle cx="58.0" cy="607.2" r="3.2"/><circle cx="72.6" cy="611.1" r="3.2"/><circle cx="82.3" cy="607.1" r="2.8"/><circle cx="91.7" cy="609.0" r="2.1"/><circle cx="60.2" cy="611.1" r="3.4"/><circle cx="62.6" cy="608.2" r="3.0"/><circle cx="72.8" cy="607.6" r="3.4"/><circle cx="77.2" cy="608.4" r="2.0"/><circle cx="72.9" cy="610.1" r="2.2"/><circle cx="56.4" cy="610.0" r="3.3"/><circle cx="67.7" cy="608.9" r="2.9"/><circle cx="73.3" cy="607.4" r="2.4"/><circle cx="61.0" cy="607.7" r="2.1"/><circle cx="68.3" cy="607.8" r="3.2"/><circle cx="65.6" cy="611.0" r="3.1"/><circle cx="63.5" cy="607.5" r="2.8"/><circle cx="71.5" cy="609.2" r="2.2"/><circle cx="73.7" cy="610.1" r="2.6"/><circle cx="63.0" cy="610.9" r="2.4"/><circle cx="91.8" cy="609.8" r="2.0"/><circle cx="70.5" cy="607.5" r="3.1"/><circle cx="69.4" cy="607.2" r="3.3"/><rect x="53.5" y="606.5" width="38" height="5.0"/></g><rect x="99" y="611" width="1" height="1" fill="#444"/><rect x="233" y="611" width="1" height="1" fill="#444"/><path d="M32 623h4v-3l5 7-5 7v-3h-4z" fill="#C01818" stroke="#701010" stroke-width=".6"/><rect x="99" y="162" width="1" height="1" fill="#444"/><rect x="233" y="162" width="1" height="1" fill="#444"/></svg>
<span class="a" style="left:52.5px;top:259.5px;font-size:10.5px;width:41px;overflow:hidden;white-space:nowrap">E_YZ_R</span>
<span class="a" style="left:52.5px;top:277.5px;font-size:10.5px;width:41px;overflow:hidden;white-space:nowrap">E_XY_T</span>
<span class="a" style="left:52.5px;top:295.5px;font-size:10.5px;width:41px;overflow:hidden;white-space:nowrap">E_XZ_F</span>
<span class="a" style="left:52.5px;top:313.5px;font-size:10.5px;width:41px;overflow:hidden;white-space:nowrap">C_X0Y0</span>
<span class="a" style="left:52.5px;top:331.5px;font-size:10.5px;width:41px;overflow:hidden;white-space:nowrap">A_X</span>
<span class="a" style="left:52.5px;top:349.5px;font-size:10.5px;width:41px;overflow:hidden;white-space:nowrap">A_Y</span>
<span class="a" style="left:52.5px;top:367.5px;font-size:10.5px;width:41px;overflow:hidden;white-space:nowrap">A_Z</span>
<span class="a" style="left:52.5px;top:620.5px;font-size:10.5px;width:41px;overflow:hidden;white-space:nowrap">Hier einf</span>
<span class="a" style="left:321px;top:259.5px;font-size:10.5px;width:6px;overflow:hidden">E</span>
<span class="a" style="left:321px;top:277.5px;font-size:10.5px;width:6px;overflow:hidden">E</span>
<span class="a" style="left:321px;top:295.5px;font-size:10.5px;width:6px;overflow:hidden">E</span>
<span class="a" style="left:321px;top:313.5px;font-size:10.5px;width:6px;overflow:hidden">C</span>
<span class="a" style="left:321px;top:331.5px;font-size:10.5px;width:6px;overflow:hidden">A</span>
<span class="a" style="left:321px;top:349.5px;font-size:10.5px;width:6px;overflow:hidden">A</span>
<span class="a" style="left:321px;top:367.5px;font-size:10.5px;width:6px;overflow:hidden">A</span>
<span class="a" style="left:321px;top:385.5px;font-size:10.5px;width:6px;overflow:hidden">0</span>
<span class="a" style="left:321px;top:421.5px;font-size:10.5px;width:6px;overflow:hidden">0</span>
<span class="a" style="left:321px;top:439.5px;font-size:10.5px;width:6px;overflow:hidden">0</span>
<span class="a" style="left:321px;top:457.5px;font-size:10.5px;width:6px;overflow:hidden">0</span>
<div class="a" style="left:7px;top:675px;width:320px;height:17px;background:#FBFBF8"></div>
<div class="a" style="left:94px;top:675px;width:1px;height:17px;background:#203040"></div>
<div class="a" style="left:8px;top:676px;width:14px;height:15px;border-radius:2px;background:linear-gradient(90deg,#C8D6F4,#B4C8F0);border:1px solid #D6E0F6"></div><svg class="a" style="left:0;top:0" width="340" height="700"><path d="M17 680l-4 4 4 4" fill="none" stroke="#4D6185" stroke-width="2"/></svg>
<div class="a" style="left:24px;top:676px;width:15px;height:15px;border-radius:2px;background:linear-gradient(90deg,#D4DEF6,#C2D2F4);border:1px solid #B8C8EC"></div>
<div class="a" style="left:76px;top:676px;width:14px;height:15px;border-radius:2px;background:linear-gradient(90deg,#C8D6F4,#B4C8F0);border:1px solid #D6E0F6"></div><svg class="a" style="left:0;top:0" width="340" height="700"><path d="M81 680l4 4-4 4" fill="none" stroke="#4D6185" stroke-width="2"/></svg>
<div class="a" style="left:96px;top:676px;width:14px;height:15px;border-radius:2px;background:linear-gradient(90deg,#C8D6F4,#B4C8F0);border:1px solid #D6E0F6"></div><svg class="a" style="left:0;top:0" width="340" height="700"><path d="M105 680l-4 4 4 4" fill="none" stroke="#4D6185" stroke-width="2"/></svg>
<div class="a" style="left:112px;top:676px;width:73px;height:15px;border-radius:2px;background:linear-gradient(#CCDAF7,#B9CBF3);border:1px solid #AFC2EE"></div>
<svg class="a" style="left:0;top:0" width="340" height="700"><path d="M144.5 680v7M146.5 680v7M148.5 680v7M150.5 680v7" stroke="#EEF2FC"/><path d="M145.5 680v7M147.5 680v7M149.5 680v7M151.5 680v7" stroke="#8CA4D8"/><path d="M28.5 680v7M30.5 680v7M32.5 680v7" stroke="#EEF2FC"/><path d="M29.5 680v7M31.5 680v7M33.5 680v7" stroke="#8CA4D8"/></svg>
<div class="a" style="left:311px;top:676px;width:14px;height:15px;border-radius:2px;background:linear-gradient(90deg,#C8D6F4,#B4C8F0);border:1px solid #D6E0F6"></div><svg class="a" style="left:0;top:0" width="340" height="700"><path d="M316 680l4 4-4 4" fill="none" stroke="#4D6185" stroke-width="2"/></svg></div>
<!-- VIEW -->
<div class="a" id="view"><svg class="a" style="left:-346px;top:-79px" width="938" height="805" viewBox="0 0 938 805"><defs>
<linearGradient id="rodg" gradientUnits="userSpaceOnUse" x1="540" y1="278.3" x2="562.4" y2="311.5"><stop offset="0" stop-color="#48484A"/><stop offset="0.1" stop-color="#58585A"/><stop offset="0.4" stop-color="#6C6C6E"/><stop offset="0.7" stop-color="#5E5E60"/><stop offset="0.92" stop-color="#4C4C4E"/><stop offset="1" stop-color="#3A3A3C"/></linearGradient>
<linearGradient id="partg" gradientUnits="userSpaceOnUse" x1="0" y1="470" x2="0" y2="575">
<stop offset="0" stop-color="#76767E"/><stop offset="0.3" stop-color="#8A8A92"/><stop offset="0.42" stop-color="#7A7A82"/><stop offset="0.5" stop-color="#505056"/><stop offset="0.56" stop-color="#2E2E32"/><stop offset="1" stop-color="#242428"/></linearGradient>
<filter id="bl"><feGaussianBlur stdDeviation="0.5"/></filter>
</defs><path d="M572 257 Q575 256 578 260 L590 280 Q593 286 591.6 289.4 L340 470.6 L340 412.5 L566.5 259 Q569 257 572 257Z" fill="url(#rodg)" filter="url(#bl)"/><path d="M570 259 L589 287" stroke="#48484A" stroke-width="2" opacity=".6"/><path d="M347 429 L444.5 384.5" stroke="#9A3A4A" stroke-width="2.5" opacity=".8"/><path d="M340 460.6 L380 423.8 L384 438.9 L340 474.6Z" fill="#5C5C64"/><path d="M340 446 Q358 444 363 458 Q362 472 340 476Z" fill="#2A2A2E"/><g filter="url(#bl)"><path d="M340 470.4 L369 469.7 Q373 469.5 375 473 L396 503 L403.3 515 Q404 520 401 524 L347 570.3 L340 575Z" fill="#8A8A94"/><path d="M340 502 L385 488 L396 503 L403.3 515 L340 529Z" fill="#7E7E88"/><path d="M340 530 L403.5 516 Q404 520 401 524 L347 570.3 L340 575Z" fill="#2E2E33"/><path d="M340 549 L382 538 L376 545 L340 561Z" fill="#4E4E56"/></g><path d="M340 502 L385 488" stroke="#3E3E46" stroke-width="1" fill="none"/><path d="M340 529.5 L403 515.5" stroke="#A4A4AC" stroke-width="1" fill="none"/><ellipse cx="391" cy="526.5" rx="3" ry="1.8" fill="#75757C"/><ellipse cx="365.5" cy="550" rx="3.5" ry="2.3" fill="#6A6A78"/><g stroke="#F4F450" stroke-width="1.1" fill="none"><path d="M347 439.7 L384.8 425.5 L396 425.5"/><path d="M347 437 L384.8 431.5"/><path d="M347 451.6 L377.3 453.9"/><path d="M347 524 L397.4 506.2"/><path d="M352 549.4 L399.6 527.8"/></g><g stroke="#E6E690" stroke-width="1" fill="none" opacity=".8"><rect x="384.5" y="418.5" width="87" height="21" rx="3"/><rect x="377.5" y="447.5" width="96" height="14" rx="3"/><rect x="404.5" y="497.5" width="70" height="15" rx="3"/><rect x="409.5" y="519.5" width="65" height="17" rx="3"/></g><g fill="#000"><circle cx="474.2" cy="386.1" r="4.7"/><circle cx="487.6" cy="386.1" r="4.9"/><circle cx="449.2" cy="384.3" r="5.0"/><circle cx="475.3" cy="387.1" r="3.2"/><circle cx="467.7" cy="382.8" r="4.1"/><circle cx="472.1" cy="381.3" r="3.5"/><circle cx="459.7" cy="387.2" r="4.6"/><circle cx="454.7" cy="386.5" r="3.3"/><circle cx="473.9" cy="382.0" r="3.0"/><circle cx="484.6" cy="382.6" r="3.5"/><circle cx="489.3" cy="387.0" r="3.6"/><circle cx="488.4" cy="384.8" r="4.4"/><circle cx="456.6" cy="387.4" r="4.5"/><circle cx="488.6" cy="387.1" r="3.6"/><circle cx="463.2" cy="382.3" r="3.3"/><circle cx="450.7" cy="383.2" r="4.3"/><circle cx="448.1" cy="385.7" r="3.7"/><circle cx="461.0" cy="386.6" r="4.0"/><circle cx="461.3" cy="384.4" r="4.5"/><circle cx="450.4" cy="387.6" r="3.0"/><circle cx="479.5" cy="386.8" r="3.0"/><circle cx="481.1" cy="383.6" r="4.2"/><circle cx="448.4" cy="381.5" r="3.4"/><circle cx="488.1" cy="382.5" r="4.6"/><circle cx="487.0" cy="387.4" r="3.7"/><circle cx="462.9" cy="384.7" r="4.6"/><circle cx="452.5" cy="386.1" r="4.7"/><circle cx="484.1" cy="381.4" r="5.0"/><circle cx="451.8" cy="383.4" r="4.3"/><circle cx="486.6" cy="383.4" r="4.9"/><circle cx="470.9" cy="383.3" r="3.7"/><circle cx="455.5" cy="381.7" r="3.3"/><circle cx="476.9" cy="387.8" r="3.3"/><circle cx="450.0" cy="387.7" r="4.1"/><circle cx="465.0" cy="382.8" r="4.2"/><circle cx="482.7" cy="384.2" r="3.9"/><circle cx="450.3" cy="387.2" r="3.1"/><circle cx="468.7" cy="386.7" r="3.3"/><circle cx="478.7" cy="387.5" r="4.3"/><circle cx="481.1" cy="381.9" r="3.9"/><circle cx="454.3" cy="386.8" r="3.6"/><circle cx="467.0" cy="387.8" r="4.8"/><circle cx="489.0" cy="384.2" r="4.0"/><circle cx="478.6" cy="384.4" r="3.6"/><circle cx="465.0" cy="382.2" r="3.8"/><circle cx="489.5" cy="387.5" r="4.3"/><circle cx="469.0" cy="383.4" r="3.2"/><circle cx="459.4" cy="386.4" r="4.8"/><circle cx="463.2" cy="386.4" r="4.6"/><circle cx="477.2" cy="385.6" r="4.6"/><circle cx="463.3" cy="385.8" r="3.6"/><circle cx="468.4" cy="386.3" r="4.5"/><circle cx="460.3" cy="387.4" r="4.4"/><circle cx="472.4" cy="381.3" r="4.1"/><circle cx="458.5" cy="385.6" r="4.0"/><circle cx="482.3" cy="385.5" r="4.7"/><circle cx="462.6" cy="385.5" r="4.5"/><circle cx="482.8" cy="383.5" r="4.8"/><circle cx="484.5" cy="385.7" r="5.0"/><circle cx="488.2" cy="384.6" r="4.1"/><circle cx="455.0" cy="386.7" r="5.0"/><circle cx="468.0" cy="385.8" r="4.5"/><circle cx="478.7" cy="382.3" r="4.6"/><circle cx="472.4" cy="385.6" r="3.9"/><circle cx="474.2" cy="386.3" r="4.3"/><circle cx="478.3" cy="381.4" r="3.3"/><circle cx="466.5" cy="385.5" r="3.5"/><circle cx="476.8" cy="385.4" r="3.1"/><circle cx="467.8" cy="382.7" r="3.1"/><rect x="448.5" y="380.8" width="41" height="7.5"/></g><g fill="#000"><circle cx="454.3" cy="429.0" r="3.8"/><circle cx="411.2" cy="423.9" r="4.1"/><circle cx="428.1" cy="428.6" r="3.5"/><circle cx="452.4" cy="425.6" r="4.4"/><circle cx="449.1" cy="426.5" r="3.9"/><circle cx="445.2" cy="425.1" r="3.9"/><circle cx="455.2" cy="425.6" r="4.4"/><circle cx="445.5" cy="429.1" r="3.5"/><circle cx="397.5" cy="428.8" r="4.4"/><circle cx="426.1" cy="424.5" r="3.2"/><circle cx="441.4" cy="425.7" r="4.7"/><circle cx="437.7" cy="425.2" r="4.1"/><circle cx="419.2" cy="429.7" r="4.6"/><circle cx="431.7" cy="427.9" r="4.2"/><circle cx="455.2" cy="429.9" r="2.9"/><circle cx="419.3" cy="427.6" r="3.4"/><circle cx="437.7" cy="424.5" r="4.5"/><circle cx="432.5" cy="424.6" r="4.1"/><circle cx="415.3" cy="425.1" r="3.7"/><circle cx="401.2" cy="425.2" r="4.5"/><circle cx="446.6" cy="424.0" r="4.3"/><circle cx="391.4" cy="426.0" r="4.6"/><circle cx="440.2" cy="425.8" r="3.5"/><circle cx="421.5" cy="424.7" r="4.8"/><circle cx="394.4" cy="426.5" r="4.3"/><circle cx="422.2" cy="430.0" r="3.3"/><circle cx="469.3" cy="429.4" r="4.1"/><circle cx="462.1" cy="426.7" r="4.4"/><circle cx="454.5" cy="427.1" r="3.7"/><circle cx="447.2" cy="426.4" r="3.0"/><circle cx="450.5" cy="425.6" r="3.8"/><circle cx="453.5" cy="425.0" r="2.8"/><circle cx="400.0" cy="427.6" r="3.5"/><circle cx="410.8" cy="426.7" r="4.6"/><circle cx="410.6" cy="426.4" r="4.5"/><circle cx="439.6" cy="425.6" r="3.7"/><circle cx="428.8" cy="424.8" r="3.5"/><circle cx="414.8" cy="428.9" r="3.4"/><circle cx="443.4" cy="429.9" r="4.6"/><circle cx="420.5" cy="427.6" r="3.4"/><circle cx="422.3" cy="426.9" r="4.4"/><circle cx="465.9" cy="425.7" r="2.8"/><circle cx="426.4" cy="424.3" r="2.9"/><circle cx="452.7" cy="424.6" r="4.2"/><circle cx="419.3" cy="429.7" r="4.5"/><circle cx="395.0" cy="425.1" r="4.7"/><circle cx="439.7" cy="426.5" r="4.3"/><circle cx="455.9" cy="426.9" r="3.7"/><circle cx="398.1" cy="426.1" r="3.1"/><circle cx="440.7" cy="427.7" r="3.1"/><circle cx="440.9" cy="424.5" r="3.0"/><circle cx="442.3" cy="426.8" r="4.6"/><circle cx="441.0" cy="428.2" r="3.0"/><circle cx="457.4" cy="424.4" r="4.0"/><circle cx="463.8" cy="429.5" r="4.6"/><circle cx="426.6" cy="428.2" r="4.4"/><circle cx="401.1" cy="429.7" r="4.6"/><circle cx="425.7" cy="428.7" r="3.7"/><circle cx="412.4" cy="428.3" r="2.9"/><circle cx="454.8" cy="429.9" r="3.4"/><circle cx="466.1" cy="424.4" r="4.5"/><circle cx="412.7" cy="429.9" r="3.6"/><circle cx="464.7" cy="424.1" r="3.0"/><circle cx="456.1" cy="427.9" r="3.8"/><circle cx="392.6" cy="425.0" r="3.5"/><circle cx="394.2" cy="430.0" r="4.3"/><circle cx="466.9" cy="428.2" r="3.5"/><circle cx="396.3" cy="428.4" r="3.0"/><circle cx="434.3" cy="426.8" r="3.8"/><circle cx="396.1" cy="424.4" r="3.8"/><circle cx="392.5" cy="427.2" r="3.1"/><circle cx="412.8" cy="424.9" r="3.9"/><circle cx="421.5" cy="425.3" r="3.2"/><circle cx="435.7" cy="429.5" r="3.6"/><circle cx="403.2" cy="425.9" r="3.3"/><circle cx="436.4" cy="428.8" r="3.9"/><circle cx="405.2" cy="425.9" r="3.5"/><circle cx="425.7" cy="426.4" r="4.8"/><circle cx="434.6" cy="428.0" r="4.2"/><circle cx="442.3" cy="428.9" r="3.5"/><circle cx="444.0" cy="429.9" r="3.1"/><circle cx="440.7" cy="426.3" r="2.9"/><circle cx="393.2" cy="428.6" r="3.0"/><circle cx="447.6" cy="424.5" r="3.5"/><circle cx="392.6" cy="427.3" r="4.3"/><circle cx="408.3" cy="427.4" r="4.6"/><circle cx="413.8" cy="426.8" r="4.2"/><circle cx="460.0" cy="425.0" r="4.1"/><circle cx="399.7" cy="424.6" r="4.7"/><circle cx="394.1" cy="429.6" r="4.3"/><circle cx="444.8" cy="428.4" r="4.1"/><circle cx="413.2" cy="426.7" r="3.2"/><circle cx="459.6" cy="428.7" r="4.3"/><circle cx="407.3" cy="427.6" r="3.3"/><circle cx="454.0" cy="428.5" r="4.8"/><circle cx="447.4" cy="428.1" r="4.3"/><circle cx="397.6" cy="427.6" r="2.9"/><circle cx="419.7" cy="424.6" r="4.7"/><circle cx="392.3" cy="429.6" r="4.7"/><circle cx="425.3" cy="429.0" r="2.9"/><circle cx="401.3" cy="424.0" r="2.9"/><circle cx="390.2" cy="429.0" r="3.0"/><circle cx="437.8" cy="425.6" r="3.1"/><circle cx="424.0" cy="425.0" r="4.7"/><circle cx="421.1" cy="427.6" r="3.9"/><circle cx="440.8" cy="426.9" r="3.3"/><circle cx="401.1" cy="429.4" r="3.2"/><circle cx="426.3" cy="428.9" r="3.9"/><circle cx="466.8" cy="428.9" r="3.8"/><circle cx="399.7" cy="427.6" r="3.7"/><circle cx="459.8" cy="427.2" r="4.2"/><circle cx="455.7" cy="426.8" r="4.5"/><circle cx="462.8" cy="424.9" r="4.6"/><circle cx="460.4" cy="429.2" r="3.5"/><circle cx="410.4" cy="424.7" r="3.5"/><circle cx="459.3" cy="426.2" r="2.8"/><circle cx="414.7" cy="424.4" r="4.0"/><circle cx="452.2" cy="429.6" r="3.0"/><circle cx="420.8" cy="424.7" r="4.6"/><circle cx="457.8" cy="427.1" r="4.7"/><circle cx="432.1" cy="428.7" r="3.8"/><circle cx="419.5" cy="430.0" r="4.4"/><circle cx="437.9" cy="429.3" r="4.1"/><circle cx="454.6" cy="424.3" r="3.1"/><circle cx="398.9" cy="427.6" r="4.2"/><circle cx="402.6" cy="427.0" r="3.0"/><circle cx="445.7" cy="428.7" r="3.0"/><rect x="390.5" y="423.5" width="80" height="7.0"/></g><g fill="#000"><circle cx="413.9" cy="433.2" r="3.5"/><circle cx="393.8" cy="435.2" r="3.0"/><circle cx="392.6" cy="435.0" r="2.5"/><circle cx="422.7" cy="432.7" r="2.6"/><circle cx="422.0" cy="436.7" r="2.6"/><circle cx="405.9" cy="435.7" r="4.0"/><circle cx="434.2" cy="434.5" r="4.0"/><circle cx="391.7" cy="436.9" r="2.9"/><circle cx="399.5" cy="433.0" r="2.9"/><circle cx="453.3" cy="433.3" r="3.4"/><circle cx="439.1" cy="434.3" r="3.3"/><circle cx="393.0" cy="432.7" r="2.7"/><circle cx="442.4" cy="434.6" r="2.9"/><circle cx="434.8" cy="434.8" r="2.9"/><circle cx="451.6" cy="436.1" r="2.8"/><circle cx="434.0" cy="435.1" r="3.9"/><circle cx="446.4" cy="433.9" r="4.0"/><circle cx="397.4" cy="434.6" r="3.7"/><circle cx="400.2" cy="434.9" r="2.5"/><circle cx="441.5" cy="436.4" r="3.4"/><circle cx="458.0" cy="434.0" r="3.6"/><circle cx="435.5" cy="435.4" r="3.2"/><circle cx="455.2" cy="437.3" r="3.2"/><circle cx="441.1" cy="432.7" r="3.6"/><circle cx="439.8" cy="437.6" r="3.8"/><circle cx="410.8" cy="434.4" r="3.5"/><circle cx="389.8" cy="434.8" r="2.7"/><circle cx="397.4" cy="432.7" r="3.7"/><circle cx="398.3" cy="433.7" r="3.1"/><circle cx="457.7" cy="432.8" r="3.2"/><circle cx="432.0" cy="437.0" r="3.8"/><circle cx="457.1" cy="433.8" r="3.1"/><circle cx="416.7" cy="437.0" r="4.0"/><circle cx="400.1" cy="433.3" r="2.8"/><circle cx="406.7" cy="434.9" r="3.4"/><circle cx="409.0" cy="432.4" r="3.1"/><circle cx="417.5" cy="435.4" r="4.0"/><circle cx="443.2" cy="435.1" r="3.4"/><circle cx="442.1" cy="432.6" r="3.9"/><circle cx="450.4" cy="437.0" r="3.7"/><circle cx="419.4" cy="434.5" r="2.6"/><circle cx="438.7" cy="432.7" r="2.5"/><circle cx="404.7" cy="433.2" r="3.0"/><circle cx="392.2" cy="432.4" r="2.7"/><circle cx="396.1" cy="434.3" r="2.4"/><circle cx="457.9" cy="435.6" r="2.6"/><circle cx="408.2" cy="434.2" r="3.0"/><circle cx="397.8" cy="436.8" r="4.1"/><circle cx="425.3" cy="434.9" r="2.5"/><circle cx="396.2" cy="434.2" r="2.8"/><circle cx="454.3" cy="433.2" r="2.4"/><circle cx="464.1" cy="435.1" r="2.6"/><circle cx="431.5" cy="432.5" r="3.3"/><circle cx="466.3" cy="436.9" r="3.6"/><circle cx="408.9" cy="434.3" r="2.7"/><circle cx="449.8" cy="435.2" r="3.7"/><circle cx="414.4" cy="433.5" r="3.8"/><circle cx="466.8" cy="436.9" r="3.8"/><circle cx="453.5" cy="436.3" r="2.8"/><circle cx="429.4" cy="434.2" r="2.4"/><circle cx="390.2" cy="433.8" r="2.8"/><circle cx="443.4" cy="437.4" r="3.2"/><circle cx="463.0" cy="437.6" r="4.0"/><circle cx="417.2" cy="433.5" r="2.8"/><circle cx="403.7" cy="433.4" r="3.4"/><circle cx="460.0" cy="436.8" r="3.2"/><circle cx="440.2" cy="436.6" r="2.5"/><circle cx="440.8" cy="437.2" r="3.7"/><circle cx="448.0" cy="434.9" r="2.7"/><circle cx="451.1" cy="434.1" r="3.7"/><circle cx="465.7" cy="434.5" r="3.1"/><circle cx="463.7" cy="436.2" r="2.7"/><circle cx="398.2" cy="433.2" r="3.9"/><circle cx="452.5" cy="433.1" r="3.8"/><circle cx="466.4" cy="435.8" r="3.0"/><circle cx="431.9" cy="433.1" r="2.4"/><circle cx="465.7" cy="435.8" r="3.3"/><circle cx="462.7" cy="434.7" r="3.9"/><circle cx="454.1" cy="433.5" r="2.8"/><circle cx="411.4" cy="433.6" r="3.4"/><circle cx="408.7" cy="434.6" r="2.6"/><circle cx="460.8" cy="434.2" r="3.2"/><circle cx="434.7" cy="437.1" r="3.1"/><circle cx="461.4" cy="435.0" r="3.3"/><circle cx="429.9" cy="432.5" r="3.1"/><circle cx="402.6" cy="432.4" r="3.7"/><circle cx="401.8" cy="434.9" r="3.6"/><circle cx="432.5" cy="434.1" r="3.3"/><circle cx="432.4" cy="436.5" r="2.6"/><circle cx="432.8" cy="433.7" r="2.9"/><circle cx="449.8" cy="435.0" r="3.3"/><circle cx="448.8" cy="437.2" r="3.1"/><circle cx="437.0" cy="435.0" r="3.3"/><circle cx="443.4" cy="434.7" r="3.3"/><circle cx="426.2" cy="437.3" r="3.6"/><circle cx="458.1" cy="437.3" r="2.8"/><circle cx="432.8" cy="437.3" r="3.8"/><circle cx="399.0" cy="433.0" r="3.1"/><circle cx="393.8" cy="433.6" r="2.5"/><circle cx="441.6" cy="436.5" r="3.9"/><circle cx="400.4" cy="436.1" r="3.5"/><circle cx="399.4" cy="437.0" r="4.0"/><circle cx="405.6" cy="437.4" r="3.1"/><circle cx="427.0" cy="437.6" r="3.8"/><circle cx="400.9" cy="434.6" r="3.3"/><circle cx="415.1" cy="433.4" r="2.9"/><circle cx="445.8" cy="432.5" r="3.3"/><circle cx="423.2" cy="432.5" r="3.0"/><circle cx="437.9" cy="435.1" r="2.5"/><circle cx="466.8" cy="436.5" r="4.0"/><circle cx="396.4" cy="433.8" r="2.5"/><circle cx="450.3" cy="433.8" r="2.6"/><circle cx="421.8" cy="437.2" r="3.8"/><circle cx="408.7" cy="433.1" r="3.9"/><circle cx="433.6" cy="436.1" r="2.6"/><circle cx="392.6" cy="436.0" r="3.1"/><circle cx="393.8" cy="437.3" r="3.5"/><circle cx="452.1" cy="432.8" r="3.8"/><circle cx="393.3" cy="436.9" r="3.2"/><circle cx="415.1" cy="435.3" r="4.0"/><circle cx="409.4" cy="433.0" r="3.3"/><circle cx="407.1" cy="432.9" r="2.7"/><circle cx="392.0" cy="433.4" r="2.9"/><circle cx="412.4" cy="436.4" r="2.9"/><circle cx="428.0" cy="433.3" r="3.0"/><circle cx="389.5" cy="433.7" r="2.4"/><rect x="388.5" y="432.0" width="79" height="6.0"/></g><g fill="#000"><circle cx="400.4" cy="457.8" r="3.0"/><circle cx="443.4" cy="452.4" r="3.3"/><circle cx="469.9" cy="453.2" r="4.1"/><circle cx="421.3" cy="454.7" r="3.8"/><circle cx="397.3" cy="457.0" r="3.0"/><circle cx="401.1" cy="452.0" r="3.3"/><circle cx="416.7" cy="457.5" r="3.5"/><circle cx="390.2" cy="453.5" r="4.7"/><circle cx="385.7" cy="455.7" r="3.5"/><circle cx="439.5" cy="454.0" r="4.2"/><circle cx="424.8" cy="455.9" r="4.6"/><circle cx="432.3" cy="452.8" r="2.9"/><circle cx="465.1" cy="454.9" r="3.2"/><circle cx="465.1" cy="455.5" r="4.2"/><circle cx="459.3" cy="453.7" r="3.5"/><circle cx="459.0" cy="452.8" r="4.3"/><circle cx="388.8" cy="456.2" r="4.2"/><circle cx="465.5" cy="457.1" r="3.8"/><circle cx="397.8" cy="452.8" r="3.8"/><circle cx="425.9" cy="452.4" r="4.6"/><circle cx="425.7" cy="456.2" r="3.2"/><circle cx="401.9" cy="452.0" r="3.5"/><circle cx="404.0" cy="454.5" r="3.5"/><circle cx="455.1" cy="457.4" r="3.1"/><circle cx="415.7" cy="452.9" r="4.1"/><circle cx="467.7" cy="453.2" r="4.3"/><circle cx="407.0" cy="452.0" r="4.3"/><circle cx="410.8" cy="453.0" r="3.7"/><circle cx="400.9" cy="454.4" r="3.7"/><circle cx="417.6" cy="455.5" r="3.4"/><circle cx="388.6" cy="452.4" r="3.0"/><circle cx="426.9" cy="454.1" r="4.4"/><circle cx="425.4" cy="456.3" r="4.7"/><circle cx="385.7" cy="452.0" r="3.1"/><circle cx="414.8" cy="455.5" r="4.3"/><circle cx="411.6" cy="457.9" r="2.8"/><circle cx="455.2" cy="453.2" r="4.5"/><circle cx="383.0" cy="457.9" r="4.3"/><circle cx="469.1" cy="455.5" r="3.1"/><circle cx="467.3" cy="454.6" r="3.0"/><circle cx="434.5" cy="455.0" r="3.7"/><circle cx="393.9" cy="452.7" r="3.9"/><circle cx="420.7" cy="452.7" r="3.7"/><circle cx="445.3" cy="456.3" r="3.7"/><circle cx="415.4" cy="454.1" r="3.2"/><circle cx="397.8" cy="454.7" r="3.0"/><circle cx="445.3" cy="456.3" r="4.0"/><circle cx="382.0" cy="454.2" r="3.6"/><circle cx="388.4" cy="457.9" r="4.3"/><circle cx="425.2" cy="456.3" r="3.2"/><circle cx="400.6" cy="455.2" r="4.3"/><circle cx="438.3" cy="452.0" r="4.0"/><circle cx="461.8" cy="456.5" r="4.6"/><circle cx="468.4" cy="453.3" r="3.4"/><circle cx="429.3" cy="457.9" r="3.5"/><circle cx="464.7" cy="457.2" r="3.8"/><circle cx="436.3" cy="457.8" r="4.3"/><circle cx="406.6" cy="457.1" r="3.2"/><circle cx="413.3" cy="457.8" r="4.5"/><circle cx="408.1" cy="453.7" r="4.0"/><circle cx="455.8" cy="456.1" r="4.6"/><circle cx="445.5" cy="457.0" r="4.0"/><circle cx="412.6" cy="454.6" r="3.8"/><circle cx="427.6" cy="457.1" r="3.3"/><circle cx="386.2" cy="456.4" r="3.3"/><circle cx="417.8" cy="452.6" r="4.4"/><circle cx="404.7" cy="453.7" r="4.4"/><circle cx="425.4" cy="453.6" r="4.5"/><circle cx="417.1" cy="454.1" r="4.7"/><circle cx="451.1" cy="456.5" r="3.3"/><circle cx="453.2" cy="455.6" r="4.4"/><circle cx="413.1" cy="456.7" r="4.4"/><circle cx="414.9" cy="456.0" r="4.3"/><circle cx="469.4" cy="457.6" r="4.3"/><circle cx="392.3" cy="455.7" r="4.1"/><circle cx="387.8" cy="454.8" r="4.5"/><circle cx="461.5" cy="457.6" r="3.0"/><circle cx="434.6" cy="457.2" r="4.1"/><circle cx="408.8" cy="452.2" r="4.6"/><circle cx="457.3" cy="455.9" r="3.5"/><circle cx="454.6" cy="456.9" r="4.2"/><circle cx="434.0" cy="453.9" r="3.4"/><circle cx="412.2" cy="453.9" r="3.8"/><circle cx="390.3" cy="456.4" r="3.5"/><circle cx="394.4" cy="453.5" r="3.6"/><circle cx="418.8" cy="456.7" r="3.0"/><circle cx="400.0" cy="453.7" r="3.1"/><circle cx="447.4" cy="452.6" r="2.9"/><circle cx="430.0" cy="456.5" r="4.4"/><circle cx="430.4" cy="453.9" r="4.5"/><circle cx="446.3" cy="454.9" r="3.9"/><circle cx="464.2" cy="458.1" r="4.6"/><circle cx="391.9" cy="453.9" r="3.6"/><circle cx="395.2" cy="456.6" r="2.9"/><circle cx="459.9" cy="455.5" r="4.0"/><circle cx="417.3" cy="457.7" r="3.9"/><circle cx="460.7" cy="457.6" r="4.2"/><circle cx="468.5" cy="454.9" r="3.5"/><circle cx="456.0" cy="455.2" r="3.4"/><circle cx="441.2" cy="454.9" r="3.1"/><circle cx="455.4" cy="455.0" r="4.7"/><circle cx="428.0" cy="457.7" r="3.4"/><circle cx="399.6" cy="455.2" r="4.3"/><circle cx="454.2" cy="455.9" r="3.0"/><circle cx="415.5" cy="452.1" r="3.5"/><circle cx="465.0" cy="454.1" r="4.2"/><circle cx="435.9" cy="452.8" r="4.1"/><circle cx="387.2" cy="453.1" r="3.9"/><circle cx="391.5" cy="457.9" r="3.6"/><circle cx="436.7" cy="457.9" r="3.0"/><circle cx="469.9" cy="452.2" r="4.0"/><circle cx="439.0" cy="458.0" r="3.5"/><circle cx="465.2" cy="455.9" r="3.7"/><circle cx="395.3" cy="453.4" r="3.5"/><circle cx="411.2" cy="454.2" r="4.4"/><circle cx="413.7" cy="455.8" r="2.9"/><circle cx="392.7" cy="456.3" r="4.5"/><circle cx="408.2" cy="452.1" r="3.3"/><circle cx="412.4" cy="454.2" r="3.9"/><circle cx="407.2" cy="455.9" r="4.3"/><circle cx="450.5" cy="456.5" r="3.9"/><circle cx="403.5" cy="457.1" r="3.4"/><circle cx="457.4" cy="454.7" r="4.0"/><circle cx="424.9" cy="455.9" r="3.5"/><circle cx="432.1" cy="456.5" r="3.5"/><circle cx="434.0" cy="454.7" r="3.7"/><circle cx="414.5" cy="455.3" r="4.2"/><circle cx="395.6" cy="452.8" r="4.4"/><circle cx="388.0" cy="456.8" r="4.3"/><circle cx="399.6" cy="455.8" r="3.3"/><circle cx="459.3" cy="453.1" r="3.0"/><circle cx="383.3" cy="456.3" r="3.2"/><circle cx="408.3" cy="457.9" r="4.2"/><circle cx="446.4" cy="455.5" r="4.1"/><circle cx="381.0" cy="456.9" r="3.4"/><circle cx="456.9" cy="454.5" r="4.6"/><circle cx="380.0" cy="458.0" r="3.0"/><circle cx="426.0" cy="454.9" r="4.7"/><circle cx="444.5" cy="458.0" r="4.6"/><circle cx="418.3" cy="452.8" r="3.1"/><circle cx="443.8" cy="457.8" r="4.1"/><rect x="380.5" y="451.5" width="89" height="7.0"/></g><g fill="#000"><circle cx="437.2" cy="504.3" r="2.6"/><circle cx="462.6" cy="502.4" r="3.2"/><circle cx="464.6" cy="502.8" r="3.3"/><circle cx="446.8" cy="502.6" r="3.0"/><circle cx="452.3" cy="504.7" r="3.6"/><circle cx="417.9" cy="503.6" r="2.6"/><circle cx="439.9" cy="507.2" r="3.4"/><circle cx="456.8" cy="504.4" r="3.7"/><circle cx="414.4" cy="503.9" r="3.5"/><circle cx="453.7" cy="504.6" r="2.5"/><circle cx="424.8" cy="503.5" r="2.9"/><circle cx="459.0" cy="503.4" r="3.9"/><circle cx="463.4" cy="502.6" r="3.0"/><circle cx="439.0" cy="502.5" r="3.1"/><circle cx="465.1" cy="503.0" r="3.4"/><circle cx="415.6" cy="505.4" r="3.9"/><circle cx="420.8" cy="502.4" r="2.5"/><circle cx="442.0" cy="502.5" r="2.5"/><circle cx="439.3" cy="507.2" r="3.1"/><circle cx="433.1" cy="505.7" r="2.6"/><circle cx="444.5" cy="503.3" r="3.4"/><circle cx="468.4" cy="502.6" r="3.3"/><circle cx="446.2" cy="503.1" r="2.9"/><circle cx="470.7" cy="507.6" r="2.6"/><circle cx="452.4" cy="507.4" r="2.8"/><circle cx="446.5" cy="502.6" r="3.0"/><circle cx="450.5" cy="505.5" r="3.7"/><circle cx="413.5" cy="504.2" r="3.9"/><circle cx="444.8" cy="504.7" r="3.1"/><circle cx="470.1" cy="505.4" r="2.4"/><circle cx="458.4" cy="504.1" r="3.1"/><circle cx="421.4" cy="504.7" r="2.9"/><circle cx="413.6" cy="505.7" r="2.6"/><circle cx="457.4" cy="502.5" r="3.7"/><circle cx="458.9" cy="505.0" r="3.6"/><circle cx="423.6" cy="506.3" r="3.1"/><circle cx="422.6" cy="507.5" r="3.1"/><circle cx="431.5" cy="506.9" r="3.0"/><circle cx="450.1" cy="503.3" r="3.8"/><circle cx="424.3" cy="502.6" r="4.0"/><circle cx="418.9" cy="507.4" r="4.1"/><circle cx="446.2" cy="502.4" r="2.5"/><circle cx="421.1" cy="504.4" r="3.4"/><circle cx="468.9" cy="504.2" r="2.6"/><circle cx="443.4" cy="503.1" r="2.5"/><circle cx="443.0" cy="506.0" r="2.5"/><circle cx="436.4" cy="506.1" r="3.7"/><circle cx="432.1" cy="507.0" r="2.7"/><circle cx="453.1" cy="506.4" r="3.9"/><circle cx="439.1" cy="502.9" r="2.5"/><circle cx="441.3" cy="503.3" r="3.5"/><circle cx="413.3" cy="506.5" r="2.8"/><circle cx="408.8" cy="503.3" r="3.2"/><circle cx="443.2" cy="504.4" r="2.7"/><circle cx="438.4" cy="507.4" r="3.3"/><circle cx="467.3" cy="502.5" r="4.1"/><circle cx="464.0" cy="505.2" r="3.3"/><circle cx="441.8" cy="507.2" r="2.5"/><circle cx="448.5" cy="505.2" r="2.9"/><circle cx="453.7" cy="506.2" r="2.6"/><circle cx="452.1" cy="504.8" r="3.2"/><circle cx="448.1" cy="502.6" r="3.4"/><circle cx="431.5" cy="507.0" r="2.8"/><circle cx="459.9" cy="506.2" r="3.4"/><circle cx="463.2" cy="502.6" r="3.4"/><circle cx="446.6" cy="505.9" r="3.1"/><circle cx="412.3" cy="503.4" r="3.4"/><circle cx="419.4" cy="502.7" r="3.0"/><circle cx="437.6" cy="505.2" r="2.4"/><circle cx="456.9" cy="504.1" r="3.7"/><circle cx="408.5" cy="507.4" r="3.4"/><circle cx="469.5" cy="507.6" r="3.8"/><circle cx="414.7" cy="504.2" r="2.8"/><circle cx="457.1" cy="503.4" r="2.8"/><circle cx="415.0" cy="503.0" r="4.0"/><circle cx="469.5" cy="504.3" r="3.6"/><circle cx="437.5" cy="505.1" r="3.0"/><circle cx="448.0" cy="503.6" r="2.8"/><circle cx="440.6" cy="503.4" r="3.1"/><circle cx="467.5" cy="502.5" r="2.6"/><circle cx="458.4" cy="502.7" r="2.8"/><circle cx="461.7" cy="505.6" r="2.8"/><circle cx="411.7" cy="503.8" r="2.9"/><circle cx="458.4" cy="507.5" r="3.7"/><circle cx="464.8" cy="507.3" r="3.9"/><circle cx="466.0" cy="507.5" r="2.6"/><circle cx="428.0" cy="503.7" r="3.4"/><circle cx="439.0" cy="504.2" r="3.8"/><circle cx="433.1" cy="503.5" r="2.9"/><circle cx="437.1" cy="505.6" r="3.4"/><circle cx="435.7" cy="503.3" r="3.1"/><circle cx="428.5" cy="503.3" r="3.3"/><circle cx="419.9" cy="506.1" r="3.5"/><circle cx="416.7" cy="505.7" r="3.0"/><circle cx="436.2" cy="505.6" r="3.7"/><circle cx="463.7" cy="506.2" r="2.8"/><circle cx="442.1" cy="504.1" r="2.4"/><circle cx="442.8" cy="504.8" r="3.9"/><circle cx="428.4" cy="506.8" r="3.3"/><circle cx="414.2" cy="506.1" r="2.9"/><rect x="408.5" y="502.0" width="62" height="6.0"/></g><g fill="#000"><circle cx="446.1" cy="527.6" r="3.9"/><circle cx="425.0" cy="529.9" r="4.4"/><circle cx="450.9" cy="525.9" r="3.8"/><circle cx="432.0" cy="526.5" r="4.7"/><circle cx="470.8" cy="525.2" r="4.5"/><circle cx="448.0" cy="527.3" r="3.4"/><circle cx="452.1" cy="527.7" r="4.1"/><circle cx="451.4" cy="525.7" r="4.3"/><circle cx="470.0" cy="530.9" r="4.0"/><circle cx="415.6" cy="524.9" r="3.1"/><circle cx="467.6" cy="526.8" r="3.5"/><circle cx="465.1" cy="526.9" r="3.9"/><circle cx="438.3" cy="525.3" r="3.9"/><circle cx="462.0" cy="525.9" r="3.2"/><circle cx="436.9" cy="525.1" r="3.8"/><circle cx="460.4" cy="529.0" r="3.8"/><circle cx="462.6" cy="525.8" r="3.9"/><circle cx="434.7" cy="528.6" r="3.0"/><circle cx="458.0" cy="525.5" r="3.1"/><circle cx="459.8" cy="530.8" r="3.6"/><circle cx="437.0" cy="526.4" r="3.3"/><circle cx="448.8" cy="526.0" r="3.0"/><circle cx="439.4" cy="525.9" r="4.1"/><circle cx="460.6" cy="529.7" r="3.7"/><circle cx="433.2" cy="527.6" r="2.8"/><circle cx="454.3" cy="527.0" r="3.4"/><circle cx="417.6" cy="527.7" r="3.9"/><circle cx="435.7" cy="530.3" r="4.1"/><circle cx="427.0" cy="528.2" r="4.6"/><circle cx="443.2" cy="528.6" r="2.9"/><circle cx="441.4" cy="527.8" r="3.6"/><circle cx="437.4" cy="528.5" r="3.9"/><circle cx="441.4" cy="525.9" r="3.7"/><circle cx="469.2" cy="527.5" r="2.9"/><circle cx="413.2" cy="528.2" r="2.9"/><circle cx="418.4" cy="525.6" r="3.7"/><circle cx="470.6" cy="527.9" r="3.7"/><circle cx="438.3" cy="528.0" r="3.7"/><circle cx="455.1" cy="530.5" r="4.2"/><circle cx="437.6" cy="528.9" r="4.6"/><circle cx="421.9" cy="526.4" r="4.0"/><circle cx="452.8" cy="528.9" r="4.0"/><circle cx="461.1" cy="527.9" r="4.4"/><circle cx="468.8" cy="527.6" r="4.5"/><circle cx="454.7" cy="530.4" r="2.9"/><circle cx="466.0" cy="529.6" r="4.7"/><circle cx="469.9" cy="526.7" r="4.1"/><circle cx="421.2" cy="528.6" r="4.6"/><circle cx="424.1" cy="527.1" r="3.0"/><circle cx="424.3" cy="526.2" r="3.0"/><circle cx="471.0" cy="530.4" r="3.7"/><circle cx="456.1" cy="529.2" r="3.8"/><circle cx="437.6" cy="529.0" r="3.9"/><circle cx="428.4" cy="527.2" r="4.0"/><circle cx="449.4" cy="526.2" r="4.0"/><circle cx="463.7" cy="530.3" r="4.1"/><circle cx="417.1" cy="527.5" r="3.0"/><circle cx="416.2" cy="526.5" r="3.7"/><circle cx="457.0" cy="528.8" r="3.4"/><circle cx="453.3" cy="528.0" r="3.8"/><circle cx="428.3" cy="527.6" r="3.5"/><circle cx="455.1" cy="527.9" r="3.7"/><circle cx="440.7" cy="527.9" r="4.2"/><circle cx="454.8" cy="529.9" r="3.6"/><circle cx="459.0" cy="530.9" r="4.7"/><circle cx="454.8" cy="525.3" r="4.5"/><circle cx="461.5" cy="525.0" r="3.4"/><circle cx="431.7" cy="529.5" r="4.0"/><circle cx="429.4" cy="526.1" r="3.1"/><circle cx="418.5" cy="529.8" r="4.6"/><circle cx="425.8" cy="529.5" r="4.7"/><circle cx="424.1" cy="528.4" r="3.7"/><circle cx="469.5" cy="530.3" r="2.8"/><circle cx="424.7" cy="530.1" r="3.9"/><circle cx="443.3" cy="529.9" r="4.3"/><circle cx="468.4" cy="526.9" r="2.9"/><circle cx="453.2" cy="525.2" r="3.9"/><circle cx="462.9" cy="527.4" r="4.0"/><circle cx="422.9" cy="525.9" r="4.0"/><circle cx="463.1" cy="531.1" r="2.9"/><circle cx="466.4" cy="528.1" r="3.5"/><circle cx="436.1" cy="528.5" r="3.5"/><circle cx="421.4" cy="530.3" r="4.2"/><circle cx="448.4" cy="529.4" r="4.7"/><circle cx="423.2" cy="530.0" r="4.4"/><circle cx="432.9" cy="528.4" r="3.7"/><circle cx="424.3" cy="527.6" r="3.1"/><circle cx="467.1" cy="526.1" r="4.0"/><circle cx="446.1" cy="530.9" r="4.4"/><circle cx="433.9" cy="527.2" r="2.9"/><circle cx="416.0" cy="526.8" r="4.7"/><circle cx="415.9" cy="526.0" r="4.0"/><circle cx="433.9" cy="526.1" r="4.7"/><rect x="413.5" y="524.5" width="57" height="7.0"/></g><circle cx="421.3" cy="419.6" r="1.6" fill="#D03030"/><text x="488" y="393" font-family="Liberation Sans" font-size="17.5" lengthAdjust="spacingAndGlyphs" fill="#C8203E" textLength="264">226533 KRAFTAUFNEHMER--00_1</text><text x="594" y="437.8" font-family="Liberation Sans" font-size="17.5" lengthAdjust="spacingAndGlyphs" fill="#F2F23C" textLength="94.7">HMER--00_1</text><text x="582" y="511.7" font-family="Liberation Sans" font-size="17.5" lengthAdjust="spacingAndGlyphs" fill="#F2F23C" textLength="97.4">HEIBE--00_1</text><text x="585" y="535.2" font-family="Liberation Sans" font-size="17.5" lengthAdjust="spacingAndGlyphs" fill="#F2F23C" textLength="94.4">ALTER--00_1</text></svg>
<div class="a" style="left:131px;top:311px;width:115px;height:179px;background:rgba(0,0,0,.45);filter:blur(1.2px)"></div>
<div class="a" style="left:128.7px;top:308.5px;width:115.6px;height:179px;background:#FFFFFF;border:1px solid #B0B0A8"></div>
<span class="a" style="left:148.60000000000002px;top:319.4px;font-size:10.5px;white-space:nowrap">Link hinzufügen</span>
<span class="a" style="left:148.60000000000002px;top:348.5px;font-size:10.5px;white-space:nowrap">Bewegen</span>
<span class="a" style="left:148.60000000000002px;top:377.6px;font-size:10.5px;white-space:nowrap">Wegnehmen</span>
<span class="a" style="left:148.60000000000002px;top:406.7px;font-size:10.5px;white-space:nowrap">Textstil...</span>
<span class="a" style="left:148.60000000000002px;top:435.8px;font-size:10.5px;white-space:nowrap">Eigenschaften</span>
<span class="a" style="left:148.60000000000002px;top:464.9px;font-size:10.5px;white-space:nowrap">Info</span>
<svg class="a" style="left:0;top:0" width="517" height="616"><path d="M231 467l4 4-4 4z" fill="#000"/></svg></div>
<!-- RIGHT TOOLBAR -->
<div class="a" id="rtb"></div><svg class="a" style="left:0;top:0" width="938" height="805" viewBox="0 0 938 805">
<g stroke="#A09E92" stroke-width="1.5" stroke-dasharray="1.5 1.5" fill="none">
<path d="M865 84.5H906M910 84.5H935"/>
<path d="M865 293.5H906"/><path d="M865 334.5H906"/><path d="M865 515.5H906"/>
</g>
<!-- col1 -->
<g fill="#4A7AB8"><circle cx="868" cy="95" r=".6"/><circle cx="872" cy="95" r=".6"/><circle cx="876" cy="95" r=".6"/><circle cx="880" cy="95" r=".6"/><circle cx="884" cy="95" r=".6"/><circle cx="868" cy="112" r=".6"/><circle cx="872" cy="112" r=".6"/><circle cx="876" cy="112" r=".6"/><circle cx="880" cy="112" r=".6"/><circle cx="884" cy="112" r=".6"/></g>
<path d="M868 104c3-6 6-6 9-1s6 4 8 1" fill="none" stroke="#2A6AB8" stroke-width="1.4"/><path d="M868 106c3-6 6-6 9-1s6 4 8 1" fill="none" stroke="#9AD0F0" stroke-width="1" opacity=".6"/>
<path d="M872.5 127.5h12l-5 10h-12z" fill="none" stroke="#7A4A22" stroke-width="1.5"/>
<path d="M880.5 153l-8 16" stroke="#7A4A22" stroke-width="1.6" stroke-dasharray="3 2"/>
<path d="M867 195c3-6 5-8 8-5s4 2 6-2l3-2" fill="none" stroke="#5A3A1A" stroke-width="1.4"/>
<g stroke="#8A5A2A" stroke-width="1.3"><path d="M874 209l4 4M878 209l-4 4M869 220l4 4M873 220l-4 4M879 218l4 4M883 218l-4 4"/></g>
<path d="M896 212v9l4.5-4.5z" fill="#000"/>
<g stroke="#7A4A22" stroke-width="1.3" fill="none"><path d="M867 245.5h10M881 237l-9 17M870 238l9 14"/></g>
<g stroke="#666" stroke-width=".9" fill="none"><path d="M867 236l1.5 2 1.5-2M868.5 238v2M867 252h3l-3 3h3M883 244l3 3M886 244l-3 3"/></g>
<g stroke="#8A5A2A" stroke-width="1.2"><path d="M871 268l3 3M874 268l-3 3M878 270l3 3M881 270l-3 3M876 263l1 2M879 273l1 2"/></g>
<rect x="868.5" y="275.5" width="16" height="7" fill="#E8E090" stroke="#7A7A40"/><path d="M871 279v3M874 280v2M877 279v3M880 280v2M883 279v3" stroke="#7A7A40" stroke-width=".6"/>
<rect x="867.5" y="304.5" width="13" height="8" fill="#FFFFC8" stroke="#555"/><path d="M881 313h6l-7 10M880 323l2-4" fill="none" stroke="#111" stroke-width="1.1"/>
<!-- solid features -->
<path d="M867.5 350.5h6v6h6v6h-12z" fill="#F0E070" stroke="#6A5A20"/><path d="M875 349l4-4h5v5l-4 4h-5z" fill="#8AD0E0" stroke="#336"/><path d="M877 351l-6 6M871 353v4h4" stroke="#111" stroke-width="1.1" fill="none"/>
<path d="M867.5 375.5h14v12h-14z" fill="#F0E070" stroke="#6A5A20"/><rect x="870.5" y="373.5" width="11" height="10" fill="#6ACFDF" stroke="#336"/><path d="M879.5 382.5h5l2 2v6h-7z" fill="#FFF" stroke="#333"/>
<path d="M867 404h18v8h-18z" fill="#B8ECF4"/><path d="M868 404l5 2v8h6v-8l5-2" fill="none" stroke="#3A6A7A" stroke-width="1"/>
<g stroke="#A8A69C" fill="none" stroke-width="1"><path d="M868 437h10l6 4-4 6h-12zM873 432l6 0 5 9M868 437l5-5"/></g>
<g stroke="#A8A69C" fill="none" stroke-width="1"><path d="M869 462c6-1 11 3 12 10l-3 3c-1-5-4-8-9-8z"/></g><path d="M878 475l3-3v5z" fill="#B8B6AC"/>
<g stroke="#A8A69C" fill="none" stroke-width="1"><path d="M869 488l6-1 8 10-4 4-7-8z"/></g><path d="M879 501l4-4v5z" fill="#B8B6AC"/>
<path d="M868.5 532.5h8v8h-8z" fill="#8AD8E0" stroke="#335"/><path d="M876 532l6-5h4v8l-6 5" fill="none" stroke="#333"/><path d="M876 532.5l4-4" stroke="#333"/>
<path d="M876.5 554v20" stroke="#111" stroke-dasharray="2 1.5"/><circle cx="871" cy="564" r="3.5" fill="none" stroke="#335"/><path d="M877 564c3-5 9-4 9 0s-6 5-9 0z" fill="#8AD8E0" stroke="#335"/>
<path d="M868 585l6-2 12 11v7l-8 0-10-10z" fill="#8ACCD8" stroke="#335"/><path d="M874 583l-4 8M878 593l0 8" stroke="#335" fill="none"/>
<path d="M868 625c2-6 6-9 12-10l6 1c-2 6-6 9-12 10z" fill="#A8DCE8" stroke="#335"/><path d="M871 620l9-2M874 617l3 8" stroke="#335" stroke-width=".6"/>
<!-- col2 grey -->
<g stroke="#ABA9A0" fill="none" stroke-width="1"><path d="M913 97c4 0 7 2 7 6v10M933 97c-4 0-7 2-7 6v10M923 92v22M913 113h6M927 113h6"/></g>
<g stroke="#ABA9A0" fill="none" stroke-width="1"><circle cx="919" cy="134" r="5"/><rect x="920.5" y="123.5" width="10" height="9"/></g>
<g stroke="#ABA9A0" fill="none" stroke-width="1"><circle cx="919" cy="162" r="5"/><rect x="920.5" y="151.5" width="10" height="9"/></g>
<g stroke="#ABA9A0" fill="none" stroke-width="1"><rect x="914.5" y="180.5" width="14" height="14"/><path d="M928.5 180.5l2-1v14l-2 1"/></g><g fill="#ABA9A0"><circle cx="918" cy="184" r=".7"/><circle cx="921.5" cy="184" r=".7"/><circle cx="925" cy="184" r=".7"/><circle cx="918" cy="188" r=".7"/><circle cx="921.5" cy="188" r=".7"/><circle cx="925" cy="188" r=".7"/><circle cx="918" cy="192" r=".7"/><circle cx="921.5" cy="192" r=".7"/><circle cx="925" cy="192" r=".7"/></g>
</svg>
<!-- splitter -->
<div class="a" style="left:327px;top:109px;width:1px;height:587px;background:#FFFFFF"></div>
<div class="a" style="left:328px;top:108px;width:1px;height:588px;background:#9AA098"></div>
<div class="a" style="left:329px;top:109px;width:9px;height:587px;background:#E9E7DA"></div>
<div class="a" style="left:338px;top:79px;width:1px;height:617px;background:#8A90A4"></div>
<div class="a" style="left:339px;top:79px;width:1px;height:617px;background:#D8E0F4"></div>
<div class="a" style="left:340px;top:79px;width:1px;height:617px;background:#8890C4"></div>
<div class="a" style="left:341px;top:79px;width:2px;height:617px;background:#E4ECFA"></div>
<div class="a" style="left:343px;top:79px;width:1px;height:617px;background:#9AA2B4"></div>
<div class="a" style="left:344px;top:79px;width:1px;height:617px;background:#E8F0F2"></div>
<div class="a" style="left:345px;top:79px;width:1px;height:617px;background:#9890A0"></div>
<div class="a" style="left:346px;top:79px;width:3px;height:617px;background:linear-gradient(90deg,rgba(200,190,220,.55),rgba(200,190,220,0))"></div>
<div class="a" style="left:330px;top:231px;width:8px;height:110px;background:repeating-linear-gradient(#D6D4C8 0 1px,#F4F2EA 1px 2px,#C0BEB2 2px 3px)"></div>
<div class="a" style="left:330px;top:440px;width:8px;height:110px;background:repeating-linear-gradient(#D6D4C8 0 1px,#F4F2EA 1px 2px,#C0BEB2 2px 3px)"></div>
<svg class="a" style="left:0;top:0" width="938" height="805" viewBox="0 0 938 805">
<g stroke="#8C94A4" stroke-width="1" stroke-dasharray="1 1.5" fill="none"><path d="M343.5 336V440"/></g>
<g stroke="#1A2A80" stroke-width="1.4" fill="none"><path d="M336 274l-3 3 3 3M336 285l-3 3 3 3M336 485l-3 3 3 3M336 496l-3 3 3 3M342 337l3 3-3 3M342 433l3 3-3 3"/></g>
</svg>
<!-- view border right -->



<!-- MESSAGES -->
<div class="a" id="msg"></div>
<div class="a" id="status"></div><svg class="a" style="left:0;top:0" width="938" height="805" viewBox="0 0 938 805">
<path d="M8 713.5h4v-4l6 6.5-6 6.5v-4h-4z" fill="#3CCB7A" stroke="#1A5A2A" stroke-width=".9"/>
<path d="M8 745.5h4v-4l6 6.5-6 6.5v-4h-4z" fill="#3CCB7A" stroke="#1A5A2A" stroke-width=".9"/>
<circle cx="12.5" cy="732.5" r="2.3" fill="#10208A"/><circle cx="12.5" cy="764.5" r="2.3" fill="#10208A"/>
</svg>
<span class="a" style="left:19px;top:710.5px;white-space:nowrap">Eine oder mehrere zu löschende KEs wählen.</span>
<span class="a" style="left:19px;top:726.5px;white-space:nowrap">Notiz&nbsp; in baugruppe</span>
<span class="a" style="left:307px;top:726.5px;white-space:nowrap">wird gezeigt.</span>
<span class="a" style="left:19px;top:742.5px;white-space:nowrap">KE oder Bemaßung wählen.</span>
<span class="a" style="left:19px;top:758.5px;white-space:nowrap">Notiz&nbsp; in baugruppe</span>
<span class="a" style="left:307px;top:758.5px;white-space:nowrap">wird gezeigt.</span>
<svg class="a" style="left:0;top:0" width="938" height="805" viewBox="0 0 938 805"><g fill="#000"><circle cx="119.3" cy="731.1" r="2.8"/><circle cx="243.5" cy="731.3" r="2.4"/><circle cx="159.9" cy="734.2" r="2.4"/><circle cx="254.0" cy="733.8" r="2.4"/><circle cx="216.1" cy="732.7" r="2.8"/><circle cx="301.3" cy="731.0" r="2.2"/><circle cx="290.9" cy="732.5" r="2.5"/><circle cx="178.1" cy="732.3" r="3.7"/><circle cx="155.9" cy="731.6" r="3.1"/><circle cx="218.3" cy="735.2" r="3.5"/><circle cx="182.8" cy="731.6" r="3.5"/><circle cx="300.0" cy="730.7" r="3.3"/><circle cx="277.6" cy="733.7" r="2.5"/><circle cx="264.4" cy="734.1" r="2.5"/><circle cx="235.6" cy="731.6" r="2.3"/><circle cx="179.2" cy="732.2" r="2.8"/><circle cx="236.7" cy="734.6" r="3.7"/><circle cx="297.6" cy="735.4" r="3.4"/><circle cx="173.7" cy="731.4" r="3.2"/><circle cx="218.0" cy="733.8" r="2.3"/><circle cx="152.7" cy="735.0" r="3.1"/><circle cx="245.6" cy="731.0" r="2.8"/><circle cx="285.4" cy="733.7" r="3.7"/><circle cx="153.4" cy="732.8" r="3.4"/><circle cx="199.3" cy="734.4" r="3.1"/><circle cx="138.8" cy="731.1" r="3.7"/><circle cx="139.1" cy="731.5" r="2.7"/><circle cx="249.0" cy="734.7" r="2.9"/><circle cx="209.2" cy="734.4" r="2.6"/><circle cx="185.9" cy="733.5" r="3.2"/><circle cx="124.0" cy="731.1" r="2.4"/><circle cx="251.1" cy="733.9" r="3.7"/><circle cx="259.0" cy="731.8" r="3.4"/><circle cx="299.2" cy="732.3" r="2.2"/><circle cx="186.4" cy="731.9" r="2.5"/><circle cx="125.3" cy="731.2" r="3.5"/><circle cx="126.2" cy="733.6" r="2.5"/><circle cx="152.8" cy="734.6" r="2.7"/><circle cx="151.0" cy="732.8" r="3.3"/><circle cx="214.0" cy="734.7" r="2.8"/><circle cx="213.9" cy="734.1" r="2.9"/><circle cx="249.6" cy="732.8" r="2.4"/><circle cx="139.8" cy="734.4" r="3.3"/><circle cx="291.4" cy="733.9" r="3.1"/><circle cx="147.7" cy="734.7" r="2.4"/><circle cx="195.6" cy="731.3" r="2.8"/><circle cx="173.8" cy="732.6" r="3.3"/><circle cx="217.2" cy="731.8" r="3.4"/><circle cx="253.0" cy="734.6" r="2.3"/><circle cx="230.7" cy="734.9" r="2.6"/><circle cx="154.4" cy="734.5" r="2.8"/><circle cx="191.2" cy="734.5" r="2.8"/><circle cx="153.7" cy="731.6" r="2.7"/><circle cx="246.1" cy="732.4" r="3.4"/><circle cx="129.2" cy="731.8" r="3.2"/><circle cx="205.7" cy="733.0" r="3.6"/><circle cx="168.3" cy="731.5" r="2.3"/><circle cx="206.3" cy="732.0" r="2.9"/><circle cx="118.0" cy="730.6" r="2.8"/><circle cx="257.2" cy="732.0" r="3.6"/><circle cx="224.2" cy="732.5" r="3.4"/><circle cx="160.1" cy="733.5" r="3.5"/><circle cx="217.1" cy="732.1" r="2.3"/><circle cx="223.2" cy="731.5" r="2.8"/><circle cx="217.4" cy="735.1" r="3.2"/><circle cx="213.1" cy="734.7" r="2.7"/><circle cx="188.7" cy="733.9" r="3.1"/><circle cx="158.0" cy="732.6" r="3.5"/><circle cx="161.8" cy="734.0" r="2.3"/><circle cx="293.6" cy="733.9" r="2.7"/><circle cx="298.9" cy="734.4" r="2.3"/><circle cx="162.9" cy="733.0" r="3.7"/><circle cx="143.0" cy="730.8" r="2.7"/><circle cx="125.3" cy="732.6" r="3.0"/><circle cx="198.5" cy="731.3" r="2.2"/><circle cx="265.5" cy="732.7" r="2.9"/><circle cx="205.4" cy="733.9" r="3.6"/><circle cx="270.0" cy="734.1" r="2.7"/><circle cx="148.2" cy="731.0" r="3.5"/><circle cx="127.5" cy="733.3" r="3.6"/><circle cx="176.6" cy="732.5" r="2.8"/><circle cx="291.7" cy="733.9" r="3.5"/><circle cx="124.2" cy="734.1" r="2.9"/><circle cx="191.3" cy="734.5" r="3.3"/><circle cx="285.4" cy="734.2" r="3.6"/><circle cx="196.2" cy="733.3" r="3.4"/><circle cx="200.9" cy="731.2" r="3.1"/><circle cx="278.2" cy="734.8" r="2.4"/><circle cx="187.5" cy="731.7" r="2.7"/><circle cx="294.5" cy="732.6" r="2.7"/><circle cx="167.4" cy="732.7" r="3.2"/><circle cx="180.4" cy="731.5" r="2.5"/><circle cx="165.1" cy="735.0" r="2.5"/><circle cx="256.5" cy="731.1" r="3.4"/><circle cx="166.2" cy="734.4" r="2.9"/><circle cx="131.5" cy="731.0" r="3.4"/><circle cx="217.3" cy="732.9" r="2.7"/><circle cx="244.9" cy="732.9" r="2.3"/><circle cx="228.2" cy="732.1" r="3.5"/><circle cx="218.6" cy="734.3" r="2.4"/><circle cx="247.8" cy="733.5" r="3.5"/><circle cx="280.6" cy="733.2" r="3.1"/><circle cx="258.9" cy="731.9" r="3.0"/><circle cx="262.6" cy="733.5" r="3.0"/><circle cx="275.3" cy="735.3" r="2.6"/><circle cx="130.8" cy="733.5" r="2.4"/><circle cx="296.4" cy="732.9" r="3.0"/><circle cx="268.2" cy="734.8" r="2.4"/><circle cx="200.9" cy="731.5" r="2.9"/><circle cx="141.7" cy="734.8" r="2.7"/><circle cx="189.0" cy="734.9" r="3.5"/><circle cx="179.2" cy="733.0" r="3.2"/><circle cx="151.7" cy="731.2" r="3.5"/><circle cx="147.0" cy="734.0" r="3.3"/><circle cx="226.4" cy="732.3" r="3.5"/><circle cx="262.5" cy="730.9" r="3.6"/><circle cx="234.8" cy="732.0" r="2.5"/><circle cx="135.1" cy="734.5" r="3.5"/><circle cx="181.3" cy="731.5" r="2.3"/><circle cx="193.6" cy="732.0" r="2.3"/><circle cx="172.1" cy="734.6" r="2.3"/><circle cx="191.7" cy="733.1" r="2.4"/><circle cx="123.7" cy="730.9" r="2.4"/><circle cx="297.3" cy="734.8" r="3.3"/><circle cx="283.4" cy="732.2" r="2.6"/><circle cx="277.9" cy="733.5" r="3.6"/><circle cx="183.4" cy="732.6" r="3.3"/><circle cx="280.2" cy="731.4" r="2.6"/><circle cx="119.5" cy="733.3" r="3.6"/><circle cx="222.1" cy="731.3" r="3.3"/><circle cx="237.2" cy="731.1" r="3.6"/><circle cx="239.1" cy="733.0" r="2.7"/><circle cx="146.7" cy="732.8" r="2.8"/><circle cx="160.1" cy="733.7" r="3.2"/><circle cx="293.6" cy="735.3" r="2.9"/><circle cx="249.5" cy="732.4" r="2.9"/><circle cx="221.9" cy="735.3" r="2.3"/><circle cx="202.7" cy="732.2" r="3.4"/><circle cx="292.8" cy="732.9" r="2.3"/><circle cx="227.0" cy="733.4" r="3.2"/><circle cx="260.7" cy="732.8" r="3.0"/><circle cx="259.0" cy="730.7" r="2.6"/><circle cx="244.2" cy="735.3" r="3.7"/><circle cx="169.1" cy="735.3" r="2.6"/><circle cx="200.8" cy="731.3" r="3.1"/><circle cx="189.5" cy="733.9" r="3.7"/><circle cx="140.6" cy="733.8" r="3.1"/><circle cx="167.7" cy="730.8" r="3.6"/><circle cx="245.6" cy="733.6" r="2.4"/><circle cx="283.5" cy="732.5" r="2.9"/><circle cx="219.9" cy="732.7" r="3.7"/><circle cx="203.5" cy="733.9" r="3.4"/><circle cx="289.6" cy="731.4" r="2.7"/><circle cx="292.7" cy="733.5" r="2.8"/><circle cx="280.1" cy="731.2" r="2.6"/><circle cx="129.8" cy="733.8" r="2.9"/><circle cx="173.3" cy="732.7" r="2.6"/><circle cx="248.2" cy="734.3" r="2.8"/><circle cx="277.7" cy="730.8" r="3.1"/><circle cx="145.4" cy="731.1" r="3.1"/><circle cx="133.1" cy="730.9" r="2.4"/><circle cx="186.7" cy="734.6" r="2.6"/><circle cx="139.6" cy="734.3" r="3.5"/><circle cx="301.3" cy="730.8" r="2.5"/><circle cx="197.2" cy="735.4" r="3.0"/><circle cx="280.5" cy="731.7" r="2.9"/><circle cx="244.1" cy="731.7" r="3.0"/><circle cx="269.6" cy="734.5" r="3.3"/><circle cx="270.3" cy="735.4" r="3.1"/><circle cx="163.1" cy="731.7" r="2.3"/><circle cx="287.0" cy="733.3" r="3.1"/><circle cx="278.5" cy="733.9" r="2.8"/><circle cx="225.3" cy="731.0" r="2.6"/><circle cx="180.5" cy="734.4" r="3.2"/><circle cx="228.7" cy="732.5" r="2.7"/><circle cx="188.2" cy="730.8" r="2.8"/><circle cx="285.2" cy="734.5" r="2.6"/><circle cx="209.3" cy="734.2" r="2.5"/><circle cx="182.9" cy="733.4" r="2.5"/><circle cx="285.3" cy="730.7" r="3.6"/><circle cx="240.8" cy="732.5" r="2.6"/><circle cx="277.6" cy="734.0" r="2.5"/><circle cx="175.7" cy="731.0" r="3.2"/><circle cx="195.4" cy="732.1" r="3.3"/><circle cx="164.0" cy="731.3" r="3.4"/><circle cx="281.1" cy="734.5" r="3.1"/><circle cx="249.7" cy="734.8" r="2.3"/><circle cx="172.4" cy="732.3" r="3.3"/><circle cx="179.2" cy="734.3" r="2.6"/><circle cx="292.1" cy="732.7" r="3.1"/><circle cx="233.3" cy="734.6" r="3.1"/><circle cx="156.1" cy="732.7" r="3.1"/><circle cx="130.4" cy="734.6" r="2.7"/><circle cx="287.3" cy="732.4" r="3.7"/><circle cx="250.6" cy="732.5" r="3.3"/><circle cx="117.0" cy="731.0" r="3.1"/><circle cx="173.9" cy="732.5" r="3.3"/><circle cx="204.5" cy="733.5" r="3.3"/><circle cx="271.6" cy="731.1" r="3.5"/><circle cx="254.5" cy="731.7" r="2.3"/><circle cx="152.7" cy="731.0" r="3.1"/><circle cx="301.1" cy="732.9" r="2.6"/><circle cx="148.5" cy="735.3" r="3.0"/><circle cx="161.1" cy="735.0" r="2.8"/><circle cx="299.2" cy="733.1" r="2.6"/><circle cx="151.5" cy="730.7" r="3.5"/><circle cx="177.6" cy="734.1" r="3.5"/><circle cx="191.4" cy="733.1" r="3.3"/><circle cx="235.9" cy="732.3" r="2.5"/><circle cx="169.8" cy="730.7" r="3.2"/><circle cx="235.5" cy="734.3" r="2.9"/><circle cx="252.3" cy="733.3" r="3.5"/><circle cx="218.8" cy="733.8" r="3.1"/><circle cx="154.6" cy="731.0" r="3.5"/><circle cx="245.1" cy="733.1" r="3.6"/><circle cx="150.7" cy="734.1" r="3.0"/><circle cx="136.5" cy="731.2" r="2.2"/><circle cx="152.0" cy="734.3" r="2.9"/><circle cx="125.8" cy="733.0" r="3.7"/><circle cx="262.6" cy="732.0" r="2.9"/><circle cx="184.9" cy="731.7" r="3.2"/><circle cx="121.3" cy="732.9" r="3.6"/><circle cx="257.0" cy="733.8" r="3.5"/><circle cx="293.1" cy="731.9" r="3.7"/><circle cx="282.3" cy="733.0" r="2.4"/><circle cx="215.6" cy="733.0" r="3.7"/><circle cx="162.5" cy="734.1" r="3.4"/><circle cx="228.2" cy="732.0" r="3.6"/><circle cx="164.2" cy="734.7" r="3.6"/><circle cx="215.3" cy="730.8" r="2.6"/><circle cx="129.3" cy="731.5" r="2.7"/><circle cx="223.2" cy="734.5" r="2.3"/><circle cx="254.7" cy="731.1" r="3.3"/><circle cx="119.0" cy="732.3" r="3.6"/><circle cx="278.8" cy="730.8" r="2.8"/><circle cx="286.1" cy="731.4" r="2.9"/><circle cx="165.4" cy="732.0" r="3.0"/><circle cx="142.7" cy="731.3" r="3.7"/><circle cx="258.0" cy="733.5" r="2.4"/><circle cx="141.6" cy="733.6" r="3.1"/><circle cx="118.9" cy="735.2" r="2.8"/><circle cx="166.8" cy="733.7" r="3.6"/><circle cx="181.7" cy="733.1" r="2.3"/><circle cx="203.4" cy="734.9" r="3.6"/><circle cx="181.7" cy="734.7" r="3.7"/><circle cx="173.1" cy="734.7" r="2.6"/><circle cx="295.5" cy="734.9" r="3.7"/><circle cx="192.4" cy="733.9" r="3.3"/><circle cx="224.8" cy="730.8" r="3.2"/><circle cx="265.6" cy="733.7" r="3.6"/><circle cx="295.2" cy="733.7" r="2.7"/><circle cx="210.8" cy="731.5" r="2.5"/><circle cx="298.1" cy="732.7" r="2.9"/><circle cx="281.2" cy="734.4" r="2.3"/><circle cx="193.3" cy="733.2" r="2.6"/><circle cx="258.5" cy="733.6" r="3.5"/><circle cx="141.9" cy="731.5" r="2.7"/><circle cx="212.7" cy="731.8" r="3.0"/><circle cx="181.0" cy="730.9" r="3.5"/><circle cx="217.2" cy="734.9" r="3.0"/><circle cx="276.1" cy="733.5" r="3.0"/><circle cx="290.8" cy="732.3" r="3.7"/><circle cx="225.8" cy="735.2" r="2.3"/><circle cx="216.8" cy="732.1" r="3.5"/><circle cx="285.5" cy="734.7" r="2.8"/><circle cx="130.5" cy="735.3" r="2.5"/><circle cx="269.8" cy="733.4" r="3.3"/><circle cx="247.8" cy="731.7" r="2.8"/><circle cx="188.1" cy="734.0" r="3.2"/><circle cx="300.2" cy="733.2" r="2.7"/><circle cx="139.2" cy="732.7" r="3.1"/><circle cx="244.3" cy="730.7" r="2.5"/><circle cx="234.7" cy="734.4" r="3.7"/><circle cx="142.5" cy="734.1" r="2.9"/><circle cx="226.3" cy="733.9" r="2.8"/><circle cx="229.2" cy="735.3" r="2.2"/><circle cx="218.9" cy="735.4" r="3.5"/><circle cx="163.4" cy="734.4" r="3.6"/><circle cx="192.7" cy="733.2" r="2.7"/><circle cx="301.5" cy="731.5" r="3.3"/><circle cx="300.1" cy="735.3" r="3.5"/><circle cx="197.3" cy="735.1" r="3.5"/><circle cx="194.8" cy="732.4" r="2.7"/><rect x="117.5" y="730.2" width="184" height="5.5"/></g><g fill="#000"><circle cx="129.6" cy="763.6" r="2.7"/><circle cx="284.2" cy="765.0" r="3.3"/><circle cx="133.8" cy="765.0" r="3.5"/><circle cx="213.3" cy="767.2" r="3.6"/><circle cx="184.7" cy="762.6" r="3.4"/><circle cx="138.8" cy="762.6" r="3.3"/><circle cx="273.5" cy="766.6" r="3.7"/><circle cx="152.9" cy="763.0" r="2.4"/><circle cx="298.8" cy="763.1" r="2.4"/><circle cx="118.8" cy="762.8" r="2.3"/><circle cx="181.4" cy="763.4" r="2.7"/><circle cx="289.6" cy="763.4" r="3.5"/><circle cx="253.8" cy="765.3" r="3.1"/><circle cx="259.8" cy="765.4" r="2.6"/><circle cx="176.9" cy="763.8" r="2.8"/><circle cx="300.6" cy="764.6" r="2.3"/><circle cx="204.6" cy="766.5" r="2.9"/><circle cx="247.0" cy="763.0" r="2.3"/><circle cx="239.4" cy="762.8" r="2.7"/><circle cx="187.3" cy="763.5" r="2.3"/><circle cx="116.3" cy="767.2" r="3.3"/><circle cx="293.9" cy="765.0" r="3.7"/><circle cx="277.2" cy="765.6" r="3.0"/><circle cx="210.6" cy="763.7" r="2.8"/><circle cx="250.9" cy="763.5" r="3.5"/><circle cx="210.8" cy="765.5" r="3.5"/><circle cx="236.5" cy="763.2" r="2.6"/><circle cx="115.2" cy="762.7" r="3.7"/><circle cx="226.5" cy="767.3" r="3.4"/><circle cx="174.4" cy="767.3" r="3.6"/><circle cx="200.8" cy="763.0" r="2.7"/><circle cx="146.3" cy="764.3" r="2.3"/><circle cx="249.1" cy="767.3" r="2.5"/><circle cx="261.6" cy="765.4" r="2.9"/><circle cx="285.6" cy="764.4" r="3.5"/><circle cx="121.5" cy="767.3" r="2.5"/><circle cx="115.7" cy="766.8" r="3.3"/><circle cx="241.9" cy="766.3" r="2.8"/><circle cx="136.5" cy="764.1" r="3.7"/><circle cx="299.5" cy="763.7" r="2.9"/><circle cx="199.7" cy="767.0" r="2.2"/><circle cx="270.9" cy="763.8" r="3.0"/><circle cx="139.3" cy="763.0" r="3.6"/><circle cx="209.6" cy="767.3" r="3.5"/><circle cx="256.5" cy="762.9" r="3.1"/><circle cx="301.5" cy="765.0" r="2.3"/><circle cx="149.7" cy="767.4" r="3.7"/><circle cx="161.4" cy="764.1" r="3.3"/><circle cx="210.4" cy="763.5" r="3.7"/><circle cx="231.7" cy="764.3" r="2.2"/><circle cx="211.0" cy="766.2" r="2.5"/><circle cx="131.4" cy="766.1" r="3.6"/><circle cx="185.9" cy="764.9" r="3.2"/><circle cx="212.8" cy="763.2" r="2.6"/><circle cx="153.7" cy="763.5" r="2.3"/><circle cx="188.5" cy="763.6" r="3.5"/><circle cx="175.5" cy="767.2" r="3.4"/><circle cx="165.6" cy="763.3" r="3.1"/><circle cx="204.1" cy="765.2" r="2.4"/><circle cx="214.9" cy="766.3" r="2.9"/><circle cx="163.0" cy="767.0" r="2.7"/><circle cx="302.1" cy="765.9" r="2.2"/><circle cx="199.1" cy="763.3" r="3.4"/><circle cx="194.1" cy="763.0" r="3.7"/><circle cx="265.3" cy="765.5" r="3.1"/><circle cx="129.0" cy="767.3" r="2.7"/><circle cx="213.5" cy="765.0" r="2.9"/><circle cx="118.4" cy="766.9" r="3.0"/><circle cx="189.0" cy="766.7" r="3.5"/><circle cx="250.2" cy="767.0" r="2.7"/><circle cx="134.7" cy="764.3" r="3.1"/><circle cx="262.9" cy="766.1" r="3.2"/><circle cx="228.0" cy="765.8" r="3.1"/><circle cx="117.9" cy="765.2" r="2.6"/><circle cx="128.6" cy="765.5" r="3.5"/><circle cx="168.1" cy="765.8" r="3.2"/><circle cx="243.1" cy="766.8" r="3.3"/><circle cx="130.0" cy="765.6" r="2.7"/><circle cx="193.3" cy="765.8" r="2.5"/><circle cx="232.9" cy="767.1" r="2.3"/><circle cx="275.1" cy="766.0" r="2.8"/><circle cx="259.0" cy="763.0" r="2.4"/><circle cx="302.5" cy="765.6" r="2.5"/><circle cx="139.3" cy="764.7" r="3.0"/><circle cx="301.1" cy="763.5" r="3.2"/><circle cx="197.8" cy="765.3" r="3.7"/><circle cx="137.2" cy="766.6" r="3.3"/><circle cx="165.3" cy="763.2" r="3.4"/><circle cx="275.4" cy="764.3" r="2.4"/><circle cx="219.4" cy="765.8" r="2.8"/><circle cx="192.2" cy="763.1" r="2.4"/><circle cx="156.8" cy="766.2" r="2.4"/><circle cx="152.2" cy="764.8" r="2.5"/><circle cx="160.1" cy="766.1" r="2.6"/><circle cx="220.6" cy="763.0" r="3.0"/><circle cx="246.3" cy="764.7" r="2.5"/><circle cx="120.7" cy="763.9" r="2.8"/><circle cx="134.0" cy="764.6" r="3.0"/><circle cx="127.0" cy="765.8" r="3.7"/><circle cx="247.1" cy="764.8" r="3.5"/><circle cx="292.7" cy="767.2" r="3.7"/><circle cx="258.9" cy="767.1" r="3.4"/><circle cx="176.1" cy="763.2" r="3.0"/><circle cx="247.2" cy="763.9" r="2.8"/><circle cx="130.5" cy="762.8" r="2.6"/><circle cx="274.5" cy="762.9" r="2.4"/><circle cx="190.1" cy="767.3" r="2.5"/><circle cx="123.2" cy="762.8" r="2.7"/><circle cx="116.0" cy="765.8" r="2.3"/><circle cx="150.7" cy="763.0" r="2.6"/><circle cx="131.6" cy="763.4" r="2.5"/><circle cx="158.9" cy="765.7" r="2.8"/><circle cx="154.0" cy="762.6" r="3.5"/><circle cx="275.5" cy="767.2" r="3.3"/><circle cx="196.3" cy="764.2" r="2.5"/><circle cx="197.8" cy="764.6" r="3.6"/><circle cx="152.6" cy="766.0" r="3.3"/><circle cx="238.8" cy="765.5" r="2.3"/><circle cx="142.6" cy="765.1" r="3.1"/><circle cx="295.9" cy="766.4" r="2.5"/><circle cx="142.9" cy="766.3" r="2.2"/><circle cx="286.4" cy="763.0" r="3.1"/><circle cx="274.0" cy="763.0" r="2.4"/><circle cx="233.8" cy="766.1" r="2.2"/><circle cx="203.1" cy="766.4" r="3.4"/><circle cx="188.9" cy="762.6" r="3.2"/><circle cx="215.9" cy="764.6" r="3.1"/><circle cx="224.8" cy="764.9" r="3.0"/><circle cx="220.6" cy="766.3" r="3.4"/><circle cx="119.1" cy="766.4" r="2.6"/><circle cx="194.3" cy="763.6" r="2.7"/><circle cx="189.9" cy="764.8" r="2.4"/><circle cx="170.3" cy="764.8" r="2.8"/><circle cx="214.6" cy="762.9" r="3.1"/><circle cx="285.2" cy="766.2" r="3.1"/><circle cx="266.5" cy="764.4" r="2.5"/><circle cx="230.1" cy="763.8" r="2.6"/><circle cx="259.5" cy="765.0" r="2.5"/><circle cx="155.8" cy="766.1" r="3.2"/><circle cx="283.9" cy="766.2" r="2.6"/><circle cx="247.1" cy="766.8" r="3.6"/><circle cx="286.7" cy="763.3" r="2.6"/><circle cx="147.5" cy="766.5" r="3.3"/><circle cx="219.9" cy="763.5" r="2.8"/><circle cx="244.8" cy="762.7" r="3.6"/><circle cx="247.4" cy="766.9" r="3.7"/><circle cx="211.9" cy="764.0" r="2.8"/><circle cx="206.7" cy="765.5" r="2.6"/><circle cx="169.3" cy="765.1" r="3.3"/><circle cx="117.6" cy="766.9" r="3.2"/><circle cx="209.3" cy="765.3" r="3.5"/><circle cx="195.7" cy="764.2" r="2.3"/><circle cx="177.8" cy="762.9" r="2.6"/><circle cx="235.6" cy="764.3" r="3.6"/><circle cx="203.2" cy="766.6" r="2.5"/><circle cx="298.8" cy="766.7" r="3.6"/><circle cx="266.4" cy="765.1" r="2.4"/><circle cx="273.6" cy="767.2" r="2.9"/><circle cx="258.9" cy="765.6" r="3.4"/><circle cx="285.8" cy="765.7" r="2.4"/><circle cx="197.4" cy="765.2" r="2.5"/><circle cx="247.7" cy="764.2" r="2.3"/><circle cx="182.4" cy="766.1" r="3.2"/><circle cx="175.9" cy="764.6" r="3.3"/><circle cx="274.8" cy="763.1" r="2.5"/><circle cx="192.8" cy="763.6" r="2.5"/><circle cx="171.8" cy="763.3" r="2.3"/><circle cx="195.3" cy="764.7" r="3.2"/><circle cx="290.1" cy="767.1" r="2.9"/><circle cx="167.8" cy="765.6" r="2.9"/><circle cx="226.2" cy="767.1" r="3.4"/><circle cx="300.5" cy="766.5" r="3.4"/><circle cx="302.1" cy="766.1" r="3.4"/><circle cx="241.4" cy="767.3" r="3.0"/><circle cx="188.5" cy="765.6" r="2.5"/><circle cx="263.0" cy="765.1" r="2.8"/><circle cx="242.2" cy="766.0" r="3.1"/><circle cx="174.0" cy="765.1" r="2.2"/><circle cx="191.8" cy="762.7" r="3.1"/><circle cx="129.6" cy="763.7" r="3.4"/><circle cx="247.8" cy="763.7" r="2.2"/><circle cx="295.0" cy="764.7" r="2.3"/><circle cx="213.6" cy="766.5" r="3.1"/><circle cx="169.4" cy="765.1" r="2.8"/><circle cx="292.7" cy="766.4" r="2.5"/><circle cx="230.0" cy="766.5" r="2.5"/><circle cx="141.7" cy="765.3" r="3.2"/><circle cx="194.6" cy="765.2" r="3.1"/><circle cx="246.1" cy="763.1" r="2.7"/><circle cx="142.8" cy="763.7" r="3.6"/><circle cx="232.0" cy="766.6" r="2.8"/><circle cx="155.4" cy="763.0" r="3.4"/><circle cx="276.9" cy="766.1" r="2.5"/><circle cx="258.5" cy="766.9" r="2.7"/><circle cx="208.2" cy="767.3" r="2.5"/><circle cx="237.7" cy="766.3" r="3.1"/><circle cx="287.2" cy="765.0" r="2.4"/><circle cx="182.9" cy="764.1" r="3.0"/><circle cx="185.5" cy="766.6" r="3.2"/><circle cx="265.3" cy="765.5" r="2.3"/><circle cx="148.7" cy="763.2" r="3.3"/><circle cx="183.0" cy="766.6" r="3.6"/><circle cx="275.2" cy="765.8" r="2.6"/><circle cx="130.3" cy="765.0" r="3.4"/><circle cx="280.6" cy="763.0" r="2.3"/><circle cx="193.1" cy="765.5" r="2.7"/><circle cx="244.9" cy="766.3" r="3.5"/><circle cx="289.5" cy="763.4" r="3.7"/><circle cx="127.9" cy="765.5" r="3.4"/><circle cx="136.7" cy="763.9" r="3.3"/><circle cx="195.2" cy="763.1" r="2.3"/><circle cx="229.2" cy="763.2" r="2.4"/><circle cx="164.5" cy="765.2" r="2.3"/><circle cx="177.2" cy="764.0" r="2.6"/><circle cx="255.8" cy="764.8" r="3.4"/><circle cx="290.1" cy="767.2" r="2.6"/><circle cx="242.8" cy="763.2" r="2.3"/><circle cx="233.8" cy="765.1" r="2.5"/><circle cx="170.4" cy="766.0" r="3.1"/><circle cx="135.6" cy="766.7" r="2.2"/><circle cx="191.1" cy="765.5" r="2.6"/><circle cx="144.6" cy="765.1" r="3.6"/><circle cx="144.9" cy="763.1" r="2.7"/><circle cx="296.4" cy="762.8" r="3.1"/><circle cx="236.8" cy="767.2" r="2.4"/><circle cx="256.0" cy="764.7" r="3.6"/><circle cx="290.3" cy="765.6" r="3.2"/><circle cx="136.7" cy="764.1" r="3.6"/><circle cx="235.5" cy="763.8" r="2.5"/><circle cx="268.4" cy="766.4" r="3.2"/><circle cx="268.1" cy="763.6" r="2.9"/><circle cx="278.4" cy="766.1" r="2.8"/><circle cx="188.0" cy="766.8" r="3.3"/><circle cx="149.7" cy="764.2" r="2.6"/><circle cx="181.1" cy="764.8" r="2.2"/><circle cx="116.7" cy="766.1" r="2.9"/><circle cx="117.3" cy="764.8" r="3.2"/><circle cx="179.2" cy="763.6" r="3.5"/><circle cx="266.7" cy="765.0" r="3.2"/><circle cx="241.3" cy="765.3" r="2.7"/><circle cx="186.2" cy="763.7" r="2.7"/><circle cx="130.0" cy="766.4" r="2.7"/><circle cx="119.2" cy="763.6" r="3.5"/><circle cx="225.6" cy="763.5" r="2.3"/><circle cx="189.8" cy="765.3" r="3.1"/><circle cx="139.1" cy="766.3" r="3.5"/><circle cx="216.6" cy="767.3" r="2.6"/><circle cx="160.3" cy="763.6" r="3.6"/><circle cx="276.4" cy="763.6" r="3.3"/><circle cx="179.6" cy="766.5" r="2.7"/><circle cx="231.2" cy="765.6" r="3.1"/><circle cx="276.4" cy="765.5" r="2.6"/><circle cx="183.7" cy="763.9" r="3.0"/><circle cx="195.2" cy="765.0" r="2.7"/><circle cx="266.3" cy="764.8" r="2.9"/><circle cx="198.9" cy="765.0" r="2.7"/><circle cx="203.4" cy="762.7" r="3.0"/><circle cx="156.1" cy="764.5" r="2.4"/><circle cx="130.4" cy="764.3" r="3.2"/><circle cx="115.4" cy="767.0" r="2.5"/><circle cx="173.8" cy="763.8" r="3.7"/><circle cx="276.7" cy="767.3" r="3.3"/><circle cx="260.8" cy="763.1" r="2.6"/><circle cx="283.9" cy="764.7" r="2.4"/><circle cx="189.3" cy="764.8" r="3.2"/><circle cx="242.7" cy="765.0" r="2.6"/><circle cx="225.0" cy="765.8" r="2.8"/><circle cx="302.3" cy="764.8" r="2.3"/><circle cx="186.6" cy="765.1" r="2.7"/><circle cx="261.2" cy="766.0" r="2.9"/><circle cx="251.2" cy="766.4" r="2.5"/><circle cx="302.4" cy="762.6" r="3.7"/><circle cx="257.2" cy="766.5" r="2.2"/><circle cx="272.7" cy="763.7" r="2.6"/><circle cx="281.4" cy="764.9" r="3.7"/><circle cx="244.8" cy="766.9" r="3.2"/><circle cx="295.9" cy="765.7" r="2.8"/><circle cx="169.8" cy="765.3" r="2.6"/><circle cx="302.2" cy="767.1" r="3.6"/><circle cx="260.2" cy="766.7" r="3.2"/><circle cx="301.6" cy="763.1" r="2.5"/><circle cx="204.0" cy="763.2" r="2.3"/><circle cx="239.5" cy="766.3" r="3.6"/><circle cx="251.0" cy="767.0" r="2.6"/><circle cx="162.1" cy="764.9" r="2.2"/><circle cx="130.5" cy="764.2" r="3.1"/><circle cx="282.4" cy="764.8" r="3.1"/><circle cx="150.2" cy="767.1" r="3.3"/><rect x="115.5" y="762.2" width="187" height="5.5"/></g><ellipse cx="348.5" cy="65.5" rx="26.5" ry="19.5" fill="none" stroke="#BE1E1E" stroke-width="3"/><ellipse cx="39.3" cy="219.6" rx="23.5" ry="56.4" fill="none" stroke="#B41E1E" stroke-width="3"/></svg>
<!-- msg scrollbar -->
<div class="a" style="left:919px;top:700px;width:16px;height:74px;background:#F5F5F0"></div>
<div class="a" style="left:920px;top:701px;width:14px;height:14px;border-radius:2px;background:linear-gradient(#D6E2F8,#B8CCF2);border:1px solid #C4D2F0"></div>
<div class="a" style="left:920px;top:744px;width:14px;height:14px;border-radius:2px;background:linear-gradient(90deg,#D6E2F8,#C0D0F4);border:1px solid #B4C6EC"></div>
<div class="a" style="left:920px;top:759px;width:14px;height:14px;border-radius:2px;background:linear-gradient(#D6E2F8,#B8CCF2);border:1px solid #C4D2F0"></div>
<svg class="a" style="left:0;top:0" width="938" height="805" viewBox="0 0 938 805">
<path d="M923 710l4-4 4 4" fill="none" stroke="#4D6185" stroke-width="2"/>
<path d="M923 764l4 4 4-4" fill="none" stroke="#4D6185" stroke-width="2"/>
<path d="M923 748.5h8M923 750.5h8M923 752.5h8" stroke="#8CA4D8"/>
</svg>
<!-- status -->
<div class="a" style="left:623px;top:777px;width:1px;height:22px;background:#A8A498"></div><div class="a" style="left:624px;top:777px;width:1px;height:22px;background:#FFF"></div><div class="a" style="left:625px;top:777px;width:85px;height:22px;background:linear-gradient(#E4E2DA,#D6D2C6)"></div>
<span class="a" style="left:629px;top:780px;font-size:11px;white-space:nowrap">1 gewählt</span>
<div class="a" style="left:722px;top:778px;width:154px;height:20px;background:#fff;border:1px solid #8E9AA6"></div><div class="a" style="left:878px;top:777px;width:1px;height:21px;background:#A8A498"></div><div class="a" style="left:879px;top:777px;width:1px;height:21px;background:#FFF"></div>
<span class="a" style="left:726.5px;top:781px;white-space:nowrap">Anmerkung</span>
<div class="a" style="left:858px;top:780px;width:16px;height:16px;border-radius:2px;background:linear-gradient(#D6E2F8,#B4C8F0);border:1px solid #C4D2F0"></div>
<svg class="a" style="left:0;top:0" width="938" height="805" viewBox="0 0 938 805">
<path d="M862 786l4 4 4-4" fill="none" stroke="#4D6185" stroke-width="2"/>
<ellipse cx="763" cy="786" rx="54" ry="15" fill="none" stroke="#BE1E1E" stroke-width="2.5"/>
<rect x="888.5" y="777.5" width="6" height="5" rx="2" fill="#B8A898" stroke="#776"/><circle cx="891.5" cy="787" r="5" fill="#F2E040" stroke="#887020"/><rect x="888.5" y="792.5" width="6" height="5" rx="1" fill="#FFF" stroke="#776"/>
</svg>


<div class="a" id="frameL"></div>
<div class="a" id="frameR"></div>
<div class="a" id="frameB"></div>
</body></html>
